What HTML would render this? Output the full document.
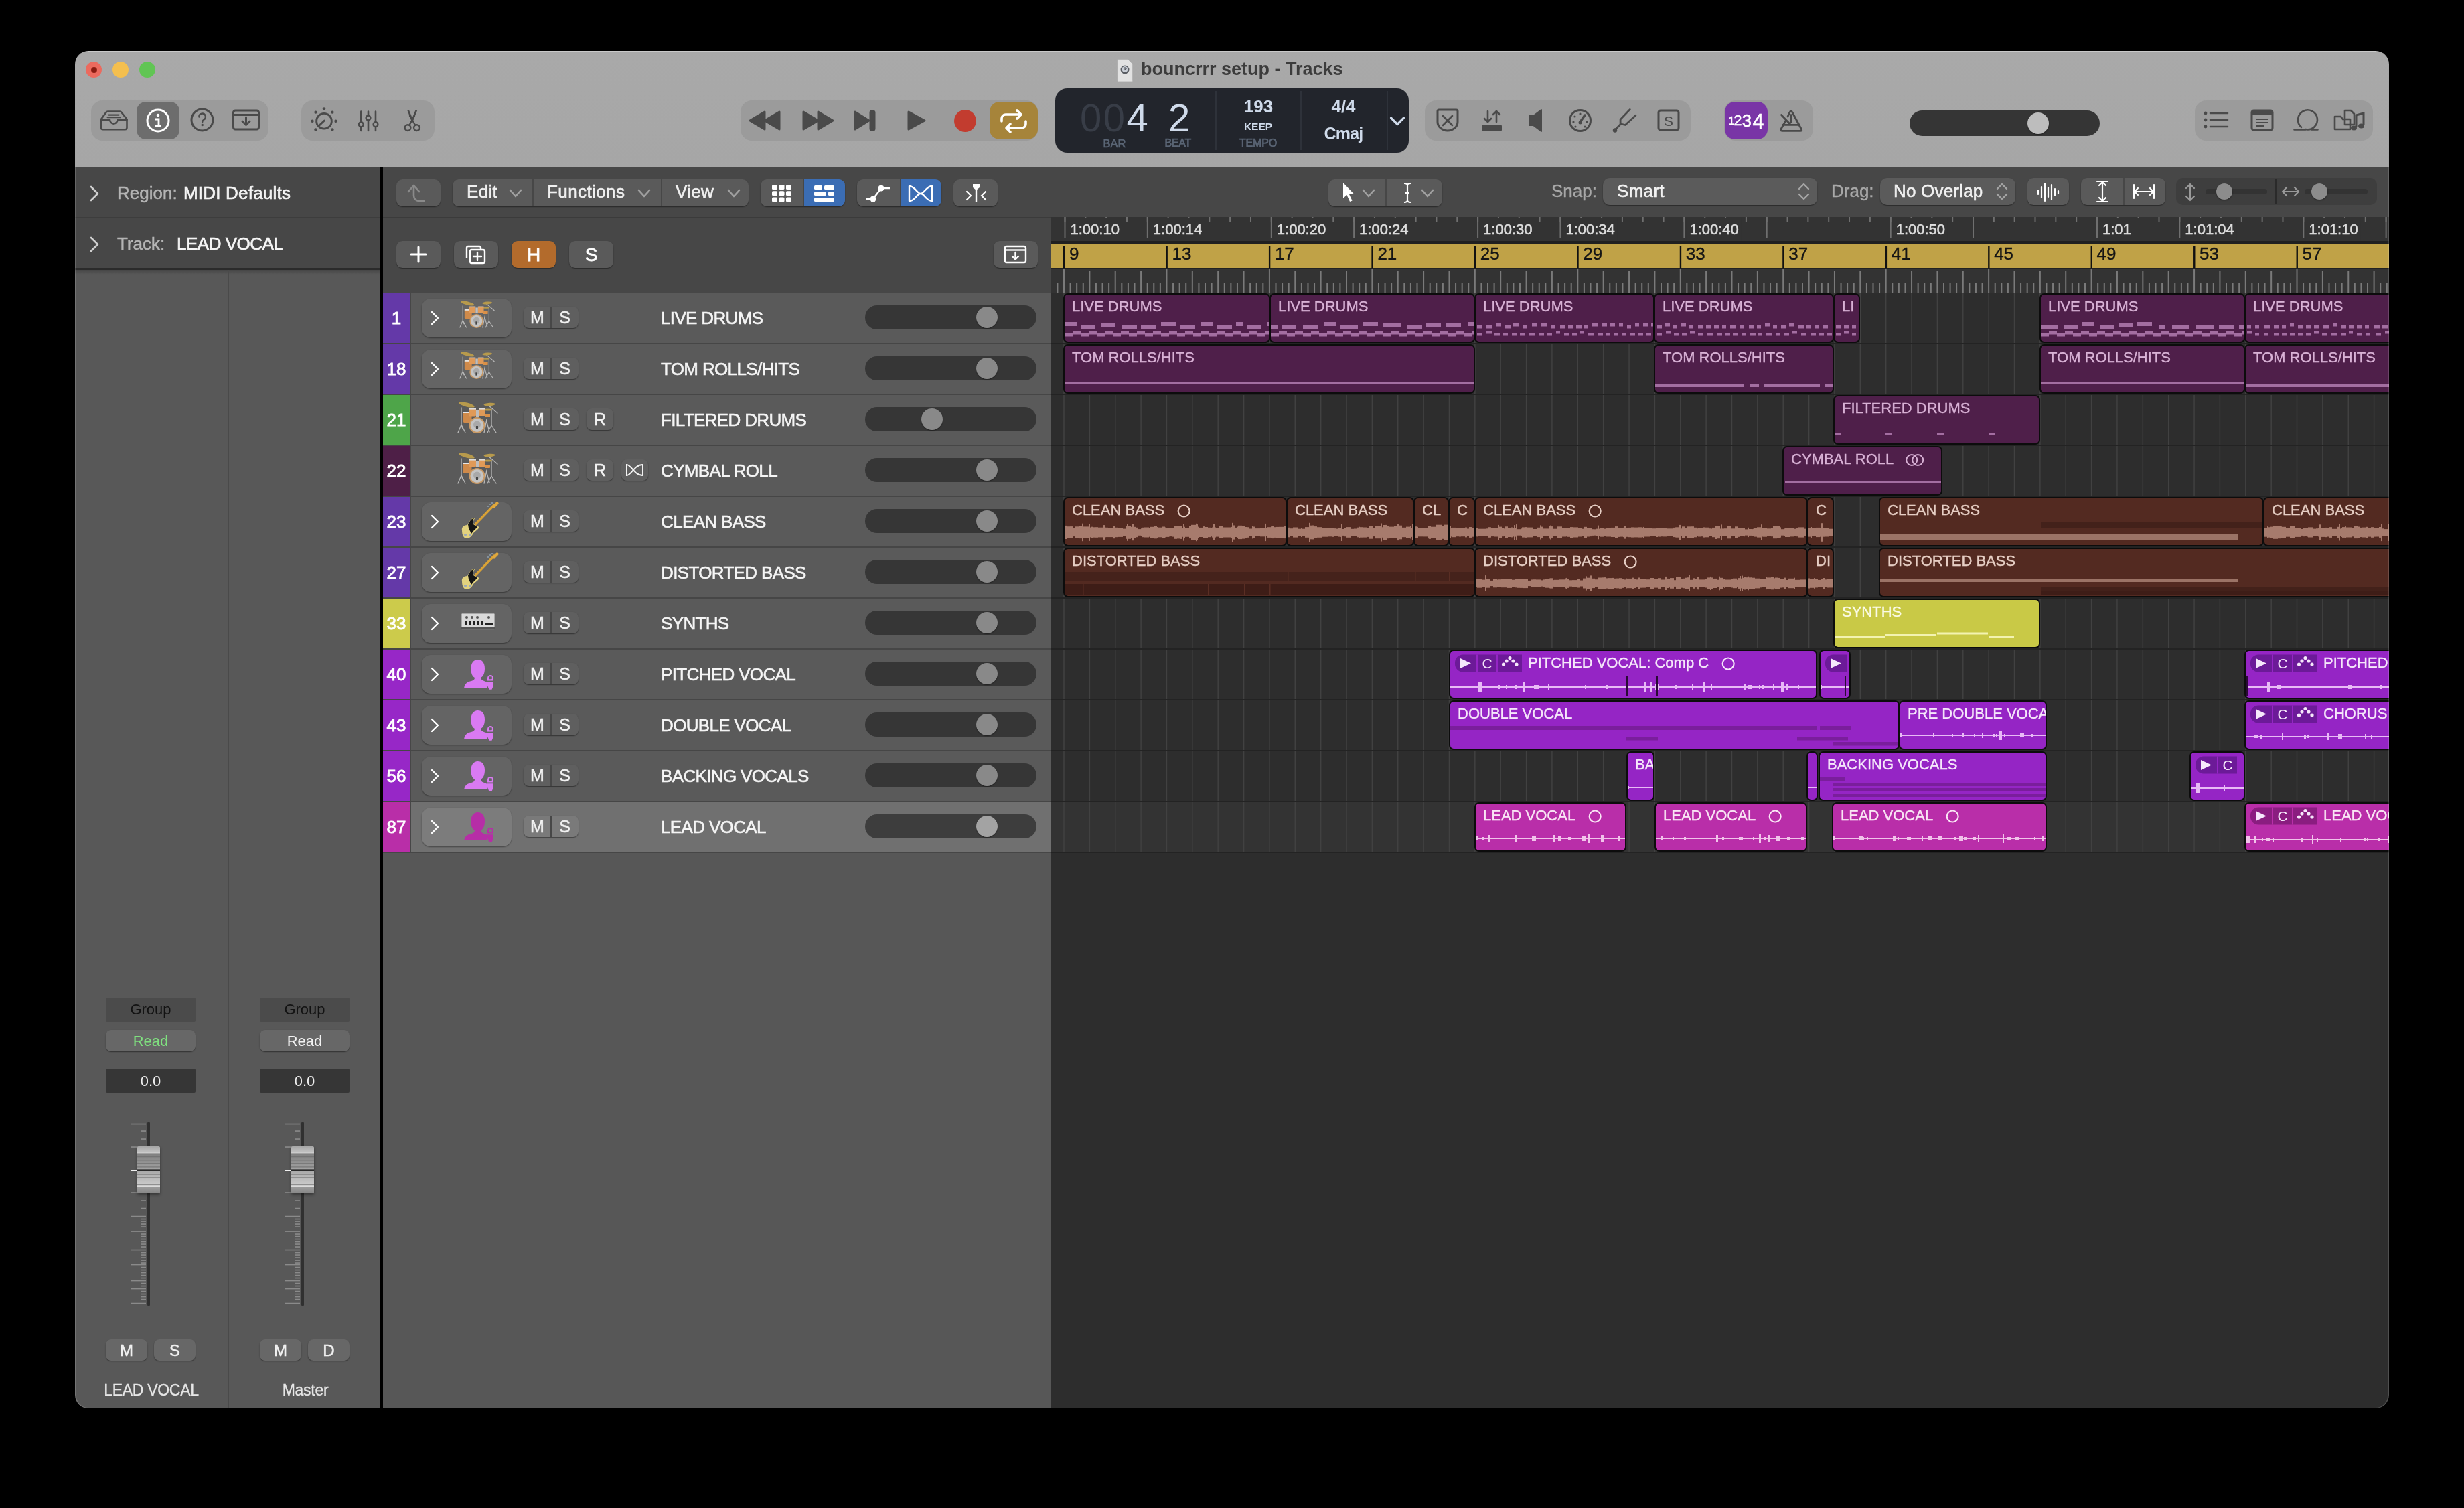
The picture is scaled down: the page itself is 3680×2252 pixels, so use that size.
<!DOCTYPE html><html><head><meta charset="utf-8"><style>
html,body{margin:0;padding:0;background:#000;width:3680px;height:2252px;overflow:hidden;font-family:"Liberation Sans", sans-serif;}
#win{will-change:transform;position:absolute;left:0;top:0;width:3680px;height:2252px;clip-path:inset(76px 112px 149px 112px round 20px);}
.btn{position:absolute;background:#5a5a5a;border-radius:9px;box-shadow:0 1px 1.5px rgba(0,0,0,0.45);}
</style></head><body><div id="win">
<div style="position:absolute;left:112px;top:76px;width:3456px;height:174px;background:linear-gradient(#a9a9a9,#a6a6a6);"></div>
<div style="position:absolute;left:112px;top:76px;width:3456px;height:1.5px;background:#c9c9c9;"></div>
<div style="position:absolute;left:112px;top:250px;width:456px;height:1853px;background:#585858;"></div>
<div style="position:absolute;left:112px;top:250px;width:456px;height:74px;background:#474747;"></div>
<div style="position:absolute;left:112px;top:324px;width:456px;height:2px;background:#3d3d3d;"></div>
<div style="position:absolute;left:112px;top:326px;width:456px;height:74px;background:#474747;"></div>
<div style="position:absolute;left:112px;top:400px;width:456px;height:2.5px;background:#2b2b2b;"></div>
<div style="position:absolute;left:112px;top:402.5px;width:456px;height:7px;background:linear-gradient(rgba(0,0,0,0.2),rgba(0,0,0,0));"></div>
<div style="position:absolute;left:340px;top:403px;width:2px;height:1700px;background:#4a4a4a;"></div>
<div style="position:absolute;left:568px;top:250px;width:4px;height:1853px;background:#000;"></div>
<div style="position:absolute;left:572px;top:250px;width:2996px;height:75px;background:#474747;"></div>
<div style="position:absolute;left:572px;top:324px;width:2996px;height:1px;background:#3b3b3b;"></div>
<div style="position:absolute;left:572px;top:325px;width:998px;height:113px;background:#474747;"></div>
<div style="position:absolute;left:572px;top:438px;width:998px;height:1665px;background:#575757;"></div>
<div style="position:absolute;left:1570px;top:438px;width:1998px;height:1665px;background:#2d2d2d;"></div>
<div style="position:absolute;left:128px;top:92px;width:24px;height:24px;border-radius:50%;background:#ec6a5e;"></div>
<div style="position:absolute;left:168px;top:92px;width:24px;height:24px;border-radius:50%;background:#f4bf4f;"></div>
<div style="position:absolute;left:208px;top:92px;width:24px;height:24px;border-radius:50%;background:#61c554;"></div>
<div style="position:absolute;left:135.5px;top:99.5px;width:9px;height:9px;border-radius:50%;background:#8a1c12;"></div>
<svg style="position:absolute;left:1666px;top:87px;" width="28" height="36" viewBox="0 0 28 36"><path d="M3 1.5h15.5l7 7v25a1.5 1.5 0 0 1 -1.5 1.5h-19.5a1.5 1.5 0 0 1 -1.5 -1.5z" fill="#e2e2e2" stroke="#b5b5b5" stroke-width="1"/><circle cx="14" cy="17" r="6.5" fill="#5a5d63"/><circle cx="14" cy="16.5" r="4.5" fill="#c9ced6"/><path d="M14 13 V17 L16.5 15" stroke="#5a5d63" stroke-width="1.2" fill="none"/></svg>
<div style="position:absolute;left:1704px;top:89.64px;font-size:27px;line-height:27px;color:#3c3c3c;font-weight:bold;white-space:nowrap;">bouncrrr setup - Tracks</div>
<div style="position:absolute;left:136px;top:150px;width:265px;height:60px;background:#9b9b9b;border-radius:17px;"></div>
<div style="position:absolute;left:450px;top:150px;width:199px;height:60px;background:#9b9b9b;border-radius:17px;"></div>
<div style="position:absolute;left:1106px;top:150px;width:444px;height:60px;background:#9b9b9b;border-radius:17px;"></div>
<div style="position:absolute;left:2128px;top:150px;width:397px;height:60px;background:#9b9b9b;border-radius:17px;"></div>
<div style="position:absolute;left:2575px;top:150px;width:133px;height:60px;background:#9b9b9b;border-radius:17px;"></div>
<div style="position:absolute;left:3278px;top:150px;width:266px;height:60px;background:#9b9b9b;border-radius:17px;"></div>
<div style="position:absolute;left:204px;top:152px;width:64px;height:56px;background:#6d6d6d;border-radius:14px;"></div>
<svg style="position:absolute;left:148px;top:163px;" width="44" height="34" viewBox="0 0 44 34"><g fill="none" stroke="#4a4a4a" stroke-width="2.6" stroke-linejoin="round" stroke-linecap="round"><path d="M3 15 L10.5 4.8 a3 3 0 0 1 2.4 -1.3 H31 a3 3 0 0 1 2.4 1.3 L41.5 15 V27.5 a2.8 2.8 0 0 1 -2.8 2.8 H5.8 a2.8 2.8 0 0 1 -2.8 -2.8 Z"/><path d="M3 15.8 H16 a5.8 5.8 0 0 0 11.6 0 H41.5"/><path d="M14.5 8.6 H29.5 M12.5 12.1 H32" stroke-width="2.2"/></g></svg>
<svg style="position:absolute;left:214px;top:158px;" width="44" height="44" viewBox="0 0 44 44"><circle cx="22" cy="22" r="16" fill="none" stroke="#fff" stroke-width="3"/><circle cx="22" cy="14" r="2.3" fill="#fff"/><path d="M18 20h5v10M18 30h9" fill="none" stroke="#fff" stroke-width="2.8"/></svg>
<svg style="position:absolute;left:280px;top:157px;" width="44" height="44" viewBox="0 0 44 44"><circle cx="22" cy="22" r="16" fill="none" stroke="#4a4a4a" stroke-width="3"/><path d="M17.3 17.5 a4.8 4.8 0 1 1 7.2 4 c-1.6 1 -2.3 1.8 -2.3 3.6" fill="none" stroke="#4a4a4a" stroke-width="2.4" stroke-linecap="round"/><circle cx="22.2" cy="29.5" r="1.8" fill="#4a4a4a"/></svg>
<svg style="position:absolute;left:346px;top:162px;" width="44" height="34" viewBox="0 0 44 34"><g fill="none" stroke="#4a4a4a" stroke-width="3" stroke-linejoin="round"><rect x="2.5" y="3" width="38" height="28" rx="3"/><path d="M3 9.5H40"/><path d="M21.5 13V24M16 19l5.5 5.5L27 19" stroke-linecap="round"/></g></svg>
<svg style="position:absolute;left:460px;top:156px;" width="48" height="48" viewBox="0 0 48 48"><g fill="#4a4a4a"><circle cx="24" cy="6.4" r="2.2"/><circle cx="11.5" cy="11.6" r="2.2"/><circle cx="36.4" cy="11.6" r="2.2"/><circle cx="6.5" cy="24.7" r="2.2"/><circle cx="41.5" cy="24.7" r="2.2"/><circle cx="11.5" cy="37.5" r="2.2"/><circle cx="36.4" cy="37.5" r="2.2"/></g><circle cx="24" cy="24.7" r="11.4" fill="none" stroke="#4a4a4a" stroke-width="2.8"/><path d="M24.5 24 L17 31" stroke="#4a4a4a" stroke-width="2.8" stroke-linecap="round"/></svg>
<svg style="position:absolute;left:530px;top:162px;" width="40" height="38" viewBox="0 0 40 38"><g stroke="#4a4a4a" stroke-width="2.6" fill="none" stroke-linecap="round"><path d="M9.3 4.6V33M20 4.6V33M31 4.6V33"/></g><g fill="#9b9b9b" stroke="#4a4a4a" stroke-width="2.4"><circle cx="9.3" cy="23.7" r="3.4"/><circle cx="20" cy="14" r="3.4"/><circle cx="31" cy="23.7" r="3.4"/></g></svg>
<svg style="position:absolute;left:600px;top:160px;" width="32" height="40" viewBox="0 0 32 40"><g fill="none" stroke="#4a4a4a" stroke-width="2.4" stroke-linecap="round"><circle cx="9" cy="30.6" r="4.4"/><circle cx="22.5" cy="30.6" r="4.4"/><path d="M11.5 26.5 L19 13 M20 26.5 L12 13"/></g><g fill="#4a4a4a"><path d="M8 4 L11 4.5 L17 19 L14.5 20.5 Z"/><path d="M23.5 4 L20.5 4.5 L14.5 19 L17 20.5 Z"/></g></svg>
<svg style="position:absolute;left:1116px;top:164px;" width="54" height="32" viewBox="0 0 54 32"><g fill="#4a4a4a" stroke="#4a4a4a" stroke-width="3" stroke-linejoin="round"><path d="M4 16 L26 3 V29 Z"/><path d="M26 16 L48 3 V29 Z"/></g></svg>
<svg style="position:absolute;left:1194px;top:164px;" width="54" height="32" viewBox="0 0 54 32"><g fill="#4a4a4a" stroke="#4a4a4a" stroke-width="3" stroke-linejoin="round"><path d="M50 16 L28 3 V29 Z"/><path d="M28 16 L6 3 V29 Z"/></g></svg>
<svg style="position:absolute;left:1272px;top:163px;" width="40" height="34" viewBox="0 0 40 34"><g fill="#4a4a4a" stroke="#4a4a4a" stroke-width="3" stroke-linejoin="round"><path d="M26 17 L5 4 V30 Z"/><rect x="28" y="3" width="6" height="28" rx="2"/></g></svg>
<svg style="position:absolute;left:1352px;top:163px;" width="34" height="34" viewBox="0 0 34 34"><path d="M5 4 L29 17 L5 30 Z" fill="#4a4a4a" stroke="#4a4a4a" stroke-width="3" stroke-linejoin="round"/></svg>
<div style="position:absolute;left:1424.5px;top:163.5px;width:33px;height:33px;border-radius:50%;background:#c23c2f;"></div>
<div style="position:absolute;left:1478px;top:152px;width:72px;height:56px;background:#a6843a;border-radius:15px;"></div>
<svg style="position:absolute;left:1490px;top:162px;" width="48" height="38" viewBox="0 0 48 38"><g fill="none" stroke="#fff" stroke-width="3.6" stroke-linecap="round" stroke-linejoin="round"><path d="M6 19 V15 a6 6 0 0 1 6 -6 H34"/><path d="M29 3 L35 9 L29 15"/><path d="M42 19 V23 a6 6 0 0 1 -6 6 H14"/><path d="M19 23 L13 29 L19 35"/></g></svg>
<div style="position:absolute;left:1576px;top:132px;width:528px;height:96px;background:#22252c;border-radius:18px;"></div>
<div style="position:absolute;left:1815px;top:136px;width:2px;height:88px;background:#2e323a;"></div>
<div style="position:absolute;left:1942px;top:136px;width:2px;height:88px;background:#2e323a;"></div>
<div style="position:absolute;left:2071px;top:136px;width:2px;height:88px;background:#2e323a;"></div>
<div style="position:absolute;left:1613px;top:146.9px;font-size:58px;line-height:58px;color:#cfdaea;font-weight:normal;white-space:nowrap;"><span style="color:#383d47;letter-spacing:2.5px">00</span>4</div>
<div style="position:absolute;left:1745px;top:146.9px;font-size:58px;line-height:58px;color:#cfdaea;font-weight:normal;white-space:nowrap;">2</div>
<div style="position:absolute;left:1647.5px;top:206.03px;font-size:16.5px;line-height:16.5px;color:#5b6676;font-weight:normal;white-space:nowrap;letter-spacing:0px;-webkit-text-stroke:0.7px #5b6676;">BAR</div>
<div style="position:absolute;left:1739.5px;top:206.46px;font-size:16px;line-height:16px;color:#5b6676;font-weight:normal;white-space:nowrap;letter-spacing:-0.3px;-webkit-text-stroke:0.7px #5b6676;">BEAT</div>
<div style="position:absolute;left:1579.5px;width:600px;text-align:center;top:145.99px;font-size:26px;line-height:26px;color:#cfdaea;font-weight:bold;white-space:nowrap;">193</div>
<div style="position:absolute;left:1579px;width:600px;text-align:center;top:180.88px;font-size:15.5px;line-height:15.5px;color:#cfdaea;font-weight:bold;white-space:nowrap;">KEEP</div>
<div style="position:absolute;left:1579px;width:600px;text-align:center;top:206.46px;font-size:16px;line-height:16px;color:#5b6676;font-weight:normal;white-space:nowrap;letter-spacing:-0.2px;-webkit-text-stroke:0.7px #5b6676;">TEMPO</div>
<div style="position:absolute;left:1706.5px;width:600px;text-align:center;top:145.99px;font-size:26px;line-height:26px;color:#cfdaea;font-weight:bold;white-space:nowrap;">4/4</div>
<div style="position:absolute;left:1706.5px;width:600px;text-align:center;top:186.84px;font-size:25px;line-height:25px;color:#cfdaea;font-weight:bold;white-space:nowrap;letter-spacing:-0.8px;">Cmaj</div>
<svg style="position:absolute;left:2074px;top:172px;" width="26" height="20" viewBox="0 0 26 20"><path d="M3.5 4 L13 13.5 L22.5 4" fill="none" stroke="#cfdaea" stroke-width="3.2" stroke-linecap="round" stroke-linejoin="round"/></svg>
<svg style="position:absolute;left:2144px;top:162px;" width="36" height="36" viewBox="0 0 36 36"><path d="M3 4 a2 2 0 0 1 2 -2 H31 a2 2 0 0 1 2 2 V20 a15 13 0 0 1 -30 0 Z" fill="none" stroke="#4a4a4a" stroke-width="3"/><path d="M11 11 L25 25 M25 11 L11 25" stroke="#4a4a4a" stroke-width="2.6" stroke-linecap="round"/></svg>
<svg style="position:absolute;left:2208px;top:162px;" width="40" height="36" viewBox="0 0 40 36"><rect x="5" y="24" width="30" height="10" rx="2.5" fill="#4a4a4a"/><g fill="none" stroke="#4a4a4a" stroke-width="2.6" stroke-linecap="round" stroke-linejoin="round"><path d="M14 4V20M9 15l5 5 5-5"/><path d="M27 20V4M22 9l5-5 5 5"/></g></svg>
<svg style="position:absolute;left:2280px;top:162px;" width="28" height="36" viewBox="0 0 28 36"><path d="M4 11 H10 L22 2 V34 L10 25 H4 Z" fill="#4a4a4a" stroke="#4a4a4a" stroke-width="2" stroke-linejoin="round"/></svg>
<svg style="position:absolute;left:2342px;top:162px;" width="36" height="36" viewBox="0 0 36 36"><circle cx="18" cy="18" r="15.5" fill="none" stroke="#4a4a4a" stroke-width="3"/><path d="M18 20 L25 10" stroke="#4a4a4a" stroke-width="3.5" stroke-linecap="round"/><g fill="#4a4a4a"><circle cx="18" cy="8" r="1.6"/><circle cx="10" cy="12" r="1.6"/><circle cx="8" cy="20" r="1.6"/><circle cx="28" cy="20" r="1.6"/><circle cx="11" cy="27" r="1.6"/><circle cx="25" cy="27" r="1.6"/><circle cx="18" cy="21" r="2.5"/></g></svg>
<svg style="position:absolute;left:2406px;top:160px;" width="40" height="40" viewBox="0 0 40 40"><path d="M28.3 3.4 L14.1 18.4 V24.9 L21.4 26.5 L36.9 12.3 M14.1 25.5 L6 34" fill="none" stroke="#4a4a4a" stroke-width="2.8" stroke-linecap="round" stroke-linejoin="round"/><circle cx="6" cy="34.5" r="3.2" fill="#4a4a4a"/></svg>
<svg style="position:absolute;left:2474px;top:162px;" width="36" height="36" viewBox="0 0 36 36"><rect x="3" y="3" width="30" height="29" rx="3" fill="none" stroke="#4a4a4a" stroke-width="3"/><text x="18" y="26" font-size="21" text-anchor="middle" fill="#4a4a4a" font-family="Liberation Sans">S</text></svg>
<div style="position:absolute;left:2576px;top:152px;width:64px;height:56px;background:#7935a6;border-radius:15px;"></div>
<div style="position:absolute;left:2286px;width:600px;text-align:center;top:172.76px;font-size:16px;line-height:16px;color:#fff;font-weight:normal;white-space:nowrap;-webkit-text-stroke:0.5px #fff;">1</div>
<div style="position:absolute;left:2295.6px;width:600px;text-align:center;top:169.6px;font-size:21.5px;line-height:21.5px;color:#fff;font-weight:normal;white-space:nowrap;-webkit-text-stroke:0.5px #fff;">2</div>
<div style="position:absolute;left:2308.8px;width:600px;text-align:center;top:167.91px;font-size:25.5px;line-height:25.5px;color:#fff;font-weight:normal;white-space:nowrap;-webkit-text-stroke:0.5px #fff;">3</div>
<div style="position:absolute;left:2326px;width:600px;text-align:center;top:166.08px;font-size:30.5px;line-height:30.5px;color:#fff;font-weight:normal;white-space:nowrap;-webkit-text-stroke:0.5px #fff;">4</div>
<svg style="position:absolute;left:2655px;top:160px;" width="40" height="40" viewBox="0 0 40 40"><g fill="none" stroke="#4a4a4a" stroke-width="2.8" stroke-linejoin="round" stroke-linecap="round"><path d="M15.05 14 L17.5 8.5 Q19.9 3.5 22.3 8.5 L35.5 33 Q36.5 35.3 34 35.3 H6.5 Q3.8 35.3 4.8 33 L12.1 20"/><path d="M7.5 26.3 H32.5"/><path d="M20 11.6 V22.6"/><path d="M5.5 11.6 L18.7 25.5"/></g></svg>
<div style="position:absolute;left:2852px;top:165px;width:284px;height:38px;background:#353535;border-radius:19px;"></div>
<div style="position:absolute;left:3028px;top:168px;width:32px;height:32px;border-radius:50%;background:#bdbdbd;box-shadow:0 1px 2px rgba(0,0,0,.4);"></div>
<svg style="position:absolute;left:3290px;top:162px;" width="42" height="36" viewBox="0 0 42 36"><g fill="#4a4a4a"><circle cx="4" cy="7" r="2.4"/><circle cx="4" cy="17" r="2.4"/><circle cx="4" cy="27" r="2.4"/></g><g stroke="#4a4a4a" stroke-width="2.6" stroke-linecap="round"><path d="M11 7H37M11 17H37M11 27H37"/></g></svg>
<svg style="position:absolute;left:3360px;top:162px;" width="38" height="36" viewBox="0 0 38 36"><rect x="3" y="3" width="31" height="29" rx="3" fill="none" stroke="#4a4a4a" stroke-width="3"/><path d="M3 7 H34" stroke="#4a4a4a" stroke-width="6"/><g stroke="#4a4a4a" stroke-width="2.2"><path d="M9 16H28M9 21H28M9 26H22"/></g></svg>
<svg style="position:absolute;left:3424px;top:160px;" width="42" height="40" viewBox="0 0 42 40"><path d="M13 29.8 A14.5 14.5 0 1 1 19.4 33 M19.4 33.5 H2.5 M28 33.5 H37.5" fill="none" stroke="#4a4a4a" stroke-width="2.6" stroke-linecap="round"/></svg>
<svg style="position:absolute;left:3484px;top:160px;" width="50" height="44" viewBox="0 0 50 44"><g fill="none" stroke="#4a4a4a" stroke-width="2.6" stroke-linejoin="round"><path d="M3 14 H12 L15 18 H26 V33 H3 Z"/><path d="M18 5 H27 L32 10 V26 H18 Z"/></g><path d="M35 12 V30 M35 12 L46 9 V27" stroke="#4a4a4a" stroke-width="3" fill="none"/><ellipse cx="31.5" cy="31" rx="4.5" ry="3.5" fill="#4a4a4a"/><ellipse cx="42.5" cy="28" rx="4.5" ry="3.5" fill="#4a4a4a"/></svg>
<div class="btn" style="left:592px;top:268px;width:66px;height:40px;background:#5a5a5a;border-radius:9px;"></div>
<svg style="position:absolute;left:606px;top:272px;" width="40" height="34" viewBox="0 0 40 34"><path d="M12 6 V20 a8 8 0 0 0 8 8 H27" fill="none" stroke="#8a8a8a" stroke-width="2.6" stroke-linecap="round"/><path d="M4 14 L12 5 L20 14" fill="none" stroke="#8a8a8a" stroke-width="2.6" stroke-linecap="round" stroke-linejoin="round"/></svg>
<div class="btn" style="left:676px;top:268px;width:442px;height:40px;background:#5a5a5a;border-radius:9px;"></div>
<div style="position:absolute;left:795px;top:268px;width:1.5px;height:40px;background:#474747;"></div>
<div style="position:absolute;left:986.5px;top:268px;width:1.5px;height:40px;background:#474747;"></div>
<div style="position:absolute;left:697px;top:273.49px;font-size:26px;line-height:26px;color:#f0f0f0;font-weight:normal;white-space:nowrap;letter-spacing:0.3px;-webkit-text-stroke:0.6px #f0f0f0;">Edit</div>
<svg style="position:absolute;left:760.0px;top:281.5px;" width="20" height="13" viewBox="0 0 20 13"><path d="M2 2 L10.0 11 L18 2" fill="none" stroke="#a0a0a0" stroke-width="2.6" stroke-linecap="round" stroke-linejoin="round"/></svg>
<div style="position:absolute;left:817px;top:273.49px;font-size:26px;line-height:26px;color:#f0f0f0;font-weight:normal;white-space:nowrap;letter-spacing:0.4px;-webkit-text-stroke:0.6px #f0f0f0;">Functions</div>
<svg style="position:absolute;left:952.0px;top:281.5px;" width="20" height="13" viewBox="0 0 20 13"><path d="M2 2 L10.0 11 L18 2" fill="none" stroke="#a0a0a0" stroke-width="2.6" stroke-linecap="round" stroke-linejoin="round"/></svg>
<div style="position:absolute;left:1009px;top:273.49px;font-size:26px;line-height:26px;color:#f0f0f0;font-weight:normal;white-space:nowrap;letter-spacing:0.3px;-webkit-text-stroke:0.6px #f0f0f0;">View</div>
<svg style="position:absolute;left:1086.0px;top:281.5px;" width="20" height="13" viewBox="0 0 20 13"><path d="M2 2 L10.0 11 L18 2" fill="none" stroke="#a0a0a0" stroke-width="2.6" stroke-linecap="round" stroke-linejoin="round"/></svg>
<div class="btn" style="left:1136px;top:268px;width:126px;height:40px;background:#5a5a5a;border-radius:9px;"></div>
<div style="position:absolute;left:1199.5px;top:268px;width:62.5px;height:40px;background:#3b6db4;border-radius:0 9px 9px 0;"></div>
<div style="position:absolute;left:1199px;top:268px;width:1.5px;height:40px;background:#474747;"></div>
<svg style="position:absolute;left:1150px;top:274px;" width="36" height="30" viewBox="0 0 36 30"><rect x="3.0" y="2.0" width="8" height="7" rx="1.6" fill="#fff"/><rect x="3.0" y="11.2" width="8" height="7" rx="1.6" fill="#fff"/><rect x="3.0" y="20.4" width="8" height="7" rx="1.6" fill="#fff"/><rect x="13.5" y="2.0" width="8" height="7" rx="1.6" fill="#fff"/><rect x="13.5" y="11.2" width="8" height="7" rx="1.6" fill="#fff"/><rect x="13.5" y="20.4" width="8" height="7" rx="1.6" fill="#fff"/><rect x="24.0" y="2.0" width="8" height="7" rx="1.6" fill="#fff"/><rect x="24.0" y="11.2" width="8" height="7" rx="1.6" fill="#fff"/><rect x="24.0" y="20.4" width="8" height="7" rx="1.6" fill="#fff"/></svg>
<svg style="position:absolute;left:1212px;top:274px;" width="38" height="30" viewBox="0 0 38 30"><g fill="#fff"><rect x="4" y="3" width="12" height="6" rx="1.5"/><rect x="19" y="3" width="15" height="6" rx="1.5"/><rect x="4" y="12" width="18" height="6" rx="1.5"/><rect x="25" y="12" width="9" height="6" rx="1.5"/><rect x="4" y="21" width="30" height="6" rx="1.5"/></g></svg>
<div class="btn" style="left:1280px;top:268px;width:126px;height:40px;background:#5a5a5a;border-radius:9px;"></div>
<div style="position:absolute;left:1344px;top:268px;width:62px;height:40px;background:#3b6db4;border-radius:0 9px 9px 0;"></div>
<div style="position:absolute;left:1343.5px;top:268px;width:1.5px;height:40px;background:#474747;"></div>
<svg style="position:absolute;left:1288px;top:272px;" width="50" height="34" viewBox="0 0 50 34"><g fill="#fff"><circle cx="28" cy="9" r="4.5"/><circle cx="16" cy="25" r="4.5"/></g><path d="M6 25H16L28 9H41" fill="none" stroke="#fff" stroke-width="2.4"/></svg>
<svg style="position:absolute;left:1354px;top:274px;" width="42" height="30" viewBox="0 0 42 30"><path d="M4 4 C13 4 15 15 21 15 C27 15 29 26 38 26 V4 C29 4 27 15 21 15 C15 15 13 26 4 26 Z" fill="none" stroke="#fff" stroke-width="2.4" stroke-linejoin="round"/></svg>
<div class="btn" style="left:1424px;top:268px;width:66px;height:40px;background:#5a5a5a;border-radius:9px;"></div>
<svg style="position:absolute;left:1438px;top:272px;" width="40" height="34" viewBox="0 0 40 34"><path d="M20 8 V30" stroke="#fff" stroke-width="2.4"/><path d="M15 3 H25 V8 L20 12 L15 8Z" fill="#fff"/><path d="M6 14 L12 20 L6 26 M34 14 L28 20 L34 26" fill="none" stroke="#fff" stroke-width="2.2" stroke-linecap="round"/></svg>
<div class="btn" style="left:1984px;top:268px;width:170px;height:40px;background:#5a5a5a;border-radius:9px;"></div>
<div style="position:absolute;left:2069px;top:268px;width:1.5px;height:40px;background:#474747;"></div>
<svg style="position:absolute;left:2002px;top:270px;" width="24" height="36" viewBox="0 0 24 36"><path d="M4 3 L4 26 L9.5 21 L14 31 L17.5 29.5 L13 20 L20 19.5 Z" fill="#fff"/></svg>
<svg style="position:absolute;left:2034.0px;top:281.5px;" width="20" height="13" viewBox="0 0 20 13"><path d="M2 2 L10.0 11 L18 2" fill="none" stroke="#a0a0a0" stroke-width="2.6" stroke-linecap="round" stroke-linejoin="round"/></svg>
<svg style="position:absolute;left:2090px;top:270px;" width="24" height="36" viewBox="0 0 24 36"><path d="M7 4 C10 4 12 5 12 7 C12 5 14 4 17 4 M12 7 V29 M7 32 C10 32 12 31 12 29 C12 31 14 32 17 32 M9 18H15" fill="none" stroke="#fff" stroke-width="2.2"/></svg>
<svg style="position:absolute;left:2122.0px;top:281.5px;" width="20" height="13" viewBox="0 0 20 13"><path d="M2 2 L10.0 11 L18 2" fill="none" stroke="#a0a0a0" stroke-width="2.6" stroke-linecap="round" stroke-linejoin="round"/></svg>
<div style="position:absolute;left:2317px;top:271.99px;font-size:26px;line-height:26px;color:#a8a8a8;font-weight:normal;white-space:nowrap;-webkit-text-stroke:0.4px #a8a8a8;">Snap:</div>
<div class="btn" style="left:2394px;top:266px;width:320px;height:40px;background:#5b5b5b;border-radius:10px;"></div>
<div style="position:absolute;left:2415px;top:271.99px;font-size:26px;line-height:26px;color:#f2f2f2;font-weight:normal;white-space:nowrap;letter-spacing:0.3px;-webkit-text-stroke:0.6px #f2f2f2;">Smart</div>
<svg style="position:absolute;left:2684px;top:272px;" width="20" height="28" viewBox="0 0 20 28"><path d="M3 10 L10 3 L17 10 M3 18 L10 25 L17 18" fill="none" stroke="#a5a5a5" stroke-width="2.4" stroke-linecap="round" stroke-linejoin="round"/></svg>
<div style="position:absolute;left:2735px;top:271.99px;font-size:26px;line-height:26px;color:#a8a8a8;font-weight:normal;white-space:nowrap;-webkit-text-stroke:0.4px #a8a8a8;">Drag:</div>
<div class="btn" style="left:2808px;top:266px;width:202px;height:40px;background:#5b5b5b;border-radius:10px;"></div>
<div style="position:absolute;left:2828px;top:271.99px;font-size:26px;line-height:26px;color:#f2f2f2;font-weight:normal;white-space:nowrap;letter-spacing:0.2px;-webkit-text-stroke:0.6px #f2f2f2;">No Overlap</div>
<svg style="position:absolute;left:2980px;top:272px;" width="20" height="28" viewBox="0 0 20 28"><path d="M3 10 L10 3 L17 10 M3 18 L10 25 L17 18" fill="none" stroke="#a5a5a5" stroke-width="2.4" stroke-linecap="round" stroke-linejoin="round"/></svg>
<div class="btn" style="left:3028px;top:266px;width:62px;height:40px;background:#5a5a5a;border-radius:9px;"></div>
<svg style="position:absolute;left:3040px;top:270px;" width="38" height="34" viewBox="0 0 38 34"><g stroke="#fff" stroke-width="2.2" stroke-linecap="round"><path d="M4 14V20M9 9V25M14 4V30M19 10V24M24 6V28M29 12V22M34 15V19"/></g></svg>
<div class="btn" style="left:3108px;top:266px;width:126px;height:40px;background:#5a5a5a;border-radius:9px;"></div>
<div style="position:absolute;left:3171px;top:266px;width:1.5px;height:40px;background:#474747;"></div>
<svg style="position:absolute;left:3124px;top:268px;" width="32" height="36" viewBox="0 0 32 36"><g stroke="#fff" stroke-width="2.2" fill="none" stroke-linecap="round" stroke-linejoin="round"><path d="M8 3H24M8 33H24M16 4V32M11 9L16 4L21 9M11 27L16 32L21 27"/></g></svg>
<svg style="position:absolute;left:3184px;top:270px;" width="36" height="32" viewBox="0 0 36 32"><g stroke="#fff" stroke-width="2.2" fill="none" stroke-linecap="round" stroke-linejoin="round"><path d="M3 6V26M33 6V26M4 16H32M9 11L4 16L9 21M27 11L32 16L27 21"/></g></svg>
<div style="position:absolute;left:3250px;top:266px;width:300px;height:40px;background:#3e3e3e;border-radius:10px;"></div>
<div style="position:absolute;left:3398px;top:268px;width:2px;height:36px;background:#2a2a2a;"></div>
<svg style="position:absolute;left:3259px;top:272px;" width="24" height="30" viewBox="0 0 24 30"><g stroke="#9a9a9a" stroke-width="2.2" fill="none" stroke-linecap="round" stroke-linejoin="round"><path d="M12 3V27M6 9L12 3L18 9M6 21L12 27L18 21"/></g></svg>
<div style="position:absolute;left:3294px;top:282px;width:92px;height:8px;background:#333;border-radius:4px;"></div>
<div style="position:absolute;left:3309.5px;top:274px;width:24px;height:24px;border-radius:50%;background:#8c8c8c;box-shadow:0 1px 2px rgba(0,0,0,.5);"></div>
<svg style="position:absolute;left:3405px;top:272px;" width="32" height="28" viewBox="0 0 32 28"><g stroke="#9a9a9a" stroke-width="2.2" fill="none" stroke-linecap="round" stroke-linejoin="round"><path d="M4 14H28M10 8L4 14L10 20M22 8L28 14L22 20"/></g></svg>
<div style="position:absolute;left:3442px;top:282px;width:94px;height:8px;background:#333;border-radius:4px;"></div>
<div style="position:absolute;left:3451.5px;top:274px;width:24px;height:24px;border-radius:50%;background:#8c8c8c;box-shadow:0 1px 2px rgba(0,0,0,.5);"></div>
<div class="btn" style="left:592px;top:360px;width:66px;height:40px;background:#5a5a5a;border-radius:9px;"></div>
<svg style="position:absolute;left:605px;top:366px;" width="40" height="28" viewBox="0 0 40 28"><path d="M20 3V25M9 14H31" stroke="#fff" stroke-width="3" stroke-linecap="round"/></svg>
<div class="btn" style="left:678px;top:360px;width:66px;height:40px;background:#5a5a5a;border-radius:9px;"></div>
<svg style="position:absolute;left:690px;top:364px;" width="42" height="32" viewBox="0 0 42 32"><g fill="none" stroke="#fff" stroke-width="2.4" stroke-linejoin="round"><path d="M7 21 V6 a2 2 0 0 1 2 -2 H26 a2 2 0 0 1 2 2 V8"/><rect x="12" y="9" width="22" height="20" rx="2.5"/><path d="M23 13V25M17 19H29" stroke-linecap="round"/></g></svg>
<div class="btn" style="left:764px;top:360px;width:66px;height:40px;background:#b36b2c;border-radius:9px;"></div>
<div style="position:absolute;left:497px;width:600px;text-align:center;top:367.3px;font-size:28px;line-height:28px;color:#fff;font-weight:normal;white-space:nowrap;-webkit-text-stroke:0.8px #fff;">H</div>
<div class="btn" style="left:850px;top:360px;width:66px;height:40px;background:#5a5a5a;border-radius:9px;"></div>
<div style="position:absolute;left:583px;width:600px;text-align:center;top:367.3px;font-size:28px;line-height:28px;color:#fff;font-weight:normal;white-space:nowrap;-webkit-text-stroke:0.8px #fff;">S</div>
<div class="btn" style="left:1484px;top:360px;width:66px;height:40px;background:#5a5a5a;border-radius:9px;"></div>
<svg style="position:absolute;left:1497px;top:364px;" width="40" height="32" viewBox="0 0 40 32"><g fill="none" stroke="#fff" stroke-width="2.4" stroke-linejoin="round"><rect x="4" y="4" width="31" height="24" rx="2.5"/><path d="M4 9.5H35"/><path d="M19.5 13V23M15 19l4.5 4.5L24 19" stroke-linecap="round"/></g></svg>
<div style="position:absolute;left:1570px;top:324px;width:1998px;height:36px;background:#333333;"></div>
<div style="position:absolute;left:1570px;top:360px;width:1998px;height:4px;background:#202020;"></div>
<div style="position:absolute;left:1570px;top:364px;width:1998px;height:36px;background:#c0a247;"></div>
<div style="position:absolute;left:1570px;top:400px;width:1998px;height:1px;background:#222;"></div>
<div style="position:absolute;left:1570px;top:401px;width:1998px;height:37px;background:#333333;"></div>
<svg style="position:absolute;left:1570px;top:324px;" width="1998" height="36" viewBox="0 0 1998 36"><rect x="19.50" y="0" width="2" height="8" fill="#6f6f6f"/><rect x="50.33" y="0" width="2" height="8" fill="#6f6f6f"/><rect x="81.16" y="0" width="2" height="8" fill="#6f6f6f"/><rect x="111.99" y="0" width="2" height="8" fill="#6f6f6f"/><rect x="142.82" y="0" width="2" height="8" fill="#6f6f6f"/><rect x="173.65" y="0" width="2" height="8" fill="#6f6f6f"/><rect x="204.48" y="0" width="2" height="8" fill="#6f6f6f"/><rect x="235.31" y="0" width="2" height="8" fill="#6f6f6f"/><rect x="266.14" y="0" width="2" height="8" fill="#6f6f6f"/><rect x="296.97" y="0" width="2" height="8" fill="#6f6f6f"/><rect x="327.80" y="0" width="2" height="8" fill="#6f6f6f"/><rect x="358.63" y="0" width="2" height="8" fill="#6f6f6f"/><rect x="389.46" y="0" width="2" height="8" fill="#6f6f6f"/><rect x="420.29" y="0" width="2" height="8" fill="#6f6f6f"/><rect x="451.12" y="0" width="2" height="8" fill="#6f6f6f"/><rect x="481.95" y="0" width="2" height="8" fill="#6f6f6f"/><rect x="512.78" y="0" width="2" height="8" fill="#6f6f6f"/><rect x="543.61" y="0" width="2" height="8" fill="#6f6f6f"/><rect x="574.44" y="0" width="2" height="8" fill="#6f6f6f"/><rect x="605.27" y="0" width="2" height="8" fill="#6f6f6f"/><rect x="636.10" y="0" width="2" height="8" fill="#6f6f6f"/><rect x="666.93" y="0" width="2" height="8" fill="#6f6f6f"/><rect x="697.76" y="0" width="2" height="8" fill="#6f6f6f"/><rect x="728.59" y="0" width="2" height="8" fill="#6f6f6f"/><rect x="759.42" y="0" width="2" height="8" fill="#6f6f6f"/><rect x="790.25" y="0" width="2" height="8" fill="#6f6f6f"/><rect x="821.08" y="0" width="2" height="8" fill="#6f6f6f"/><rect x="851.91" y="0" width="2" height="8" fill="#6f6f6f"/><rect x="882.74" y="0" width="2" height="8" fill="#6f6f6f"/><rect x="913.57" y="0" width="2" height="8" fill="#6f6f6f"/><rect x="944.40" y="0" width="2" height="8" fill="#6f6f6f"/><rect x="975.23" y="0" width="2" height="8" fill="#6f6f6f"/><rect x="1006.06" y="0" width="2" height="8" fill="#6f6f6f"/><rect x="1036.89" y="0" width="2" height="8" fill="#6f6f6f"/><rect x="1067.72" y="0" width="2" height="8" fill="#6f6f6f"/><rect x="1098.55" y="0" width="2" height="8" fill="#6f6f6f"/><rect x="1129.38" y="0" width="2" height="8" fill="#6f6f6f"/><rect x="1160.21" y="0" width="2" height="8" fill="#6f6f6f"/><rect x="1191.04" y="0" width="2" height="8" fill="#6f6f6f"/><rect x="1221.87" y="0" width="2" height="8" fill="#6f6f6f"/><rect x="1252.70" y="0" width="2" height="8" fill="#6f6f6f"/><rect x="1283.53" y="0" width="2" height="8" fill="#6f6f6f"/><rect x="1314.36" y="0" width="2" height="8" fill="#6f6f6f"/><rect x="1345.19" y="0" width="2" height="8" fill="#6f6f6f"/><rect x="1376.02" y="0" width="2" height="8" fill="#6f6f6f"/><rect x="1406.85" y="0" width="2" height="8" fill="#6f6f6f"/><rect x="1437.68" y="0" width="2" height="8" fill="#6f6f6f"/><rect x="1468.51" y="0" width="2" height="8" fill="#6f6f6f"/><rect x="1499.34" y="0" width="2" height="8" fill="#6f6f6f"/><rect x="1530.17" y="0" width="2" height="8" fill="#6f6f6f"/><rect x="1561.00" y="0" width="2" height="8" fill="#6f6f6f"/><rect x="1591.83" y="0" width="2" height="8" fill="#6f6f6f"/><rect x="1622.66" y="0" width="2" height="8" fill="#6f6f6f"/><rect x="1653.49" y="0" width="2" height="8" fill="#6f6f6f"/><rect x="1684.32" y="0" width="2" height="8" fill="#6f6f6f"/><rect x="1715.15" y="0" width="2" height="8" fill="#6f6f6f"/><rect x="1745.98" y="0" width="2" height="8" fill="#6f6f6f"/><rect x="1776.81" y="0" width="2" height="8" fill="#6f6f6f"/><rect x="1807.64" y="0" width="2" height="8" fill="#6f6f6f"/><rect x="1838.47" y="0" width="2" height="8" fill="#6f6f6f"/><rect x="1869.30" y="0" width="2" height="8" fill="#6f6f6f"/><rect x="1900.13" y="0" width="2" height="8" fill="#6f6f6f"/><rect x="1930.96" y="0" width="2" height="8" fill="#6f6f6f"/><rect x="1961.79" y="0" width="2" height="8" fill="#6f6f6f"/><rect x="1992.62" y="0" width="2" height="8" fill="#6f6f6f"/><rect x="23.50" y="2" width="82" height="34" fill="#333333"/><rect x="146.82" y="2" width="82" height="34" fill="#333333"/><rect x="331.80" y="2" width="82" height="34" fill="#333333"/><rect x="455.12" y="2" width="82" height="34" fill="#333333"/><rect x="640.10" y="2" width="82" height="34" fill="#333333"/><rect x="763.42" y="2" width="82" height="34" fill="#333333"/><rect x="948.40" y="2" width="82" height="34" fill="#333333"/><rect x="1256.70" y="2" width="82" height="34" fill="#333333"/><rect x="1565.00" y="2" width="82" height="34" fill="#333333"/><rect x="1688.32" y="2" width="82" height="34" fill="#333333"/><rect x="1873.30" y="2" width="82" height="34" fill="#333333"/><rect x="19.50" y="0" width="2" height="32" fill="#6f6f6f"/><rect x="142.82" y="0" width="2" height="32" fill="#6f6f6f"/><rect x="327.80" y="0" width="2" height="32" fill="#6f6f6f"/><rect x="451.12" y="0" width="2" height="32" fill="#6f6f6f"/><rect x="636.10" y="0" width="2" height="32" fill="#6f6f6f"/><rect x="759.42" y="0" width="2" height="32" fill="#6f6f6f"/><rect x="944.40" y="0" width="2" height="32" fill="#6f6f6f"/><rect x="1067.72" y="0" width="2" height="32" fill="#6f6f6f"/><rect x="1252.70" y="0" width="2" height="32" fill="#6f6f6f"/><rect x="1376.02" y="0" width="2" height="32" fill="#6f6f6f"/><rect x="1561.00" y="0" width="2" height="32" fill="#6f6f6f"/><rect x="1684.32" y="0" width="2" height="32" fill="#6f6f6f"/><rect x="1869.30" y="0" width="2" height="32" fill="#6f6f6f"/><rect x="1992.62" y="0" width="2" height="32" fill="#6f6f6f"/></svg>
<div style="position:absolute;left:1598.5px;top:331.88px;font-size:22px;line-height:22px;color:#dedede;font-weight:normal;white-space:nowrap;-webkit-text-stroke:0.6px #dedede;">1:00:10</div>
<div style="position:absolute;left:1721.82px;top:331.88px;font-size:22px;line-height:22px;color:#dedede;font-weight:normal;white-space:nowrap;-webkit-text-stroke:0.6px #dedede;">1:00:14</div>
<div style="position:absolute;left:1906.8px;top:331.88px;font-size:22px;line-height:22px;color:#dedede;font-weight:normal;white-space:nowrap;-webkit-text-stroke:0.6px #dedede;">1:00:20</div>
<div style="position:absolute;left:2030.12px;top:331.88px;font-size:22px;line-height:22px;color:#dedede;font-weight:normal;white-space:nowrap;-webkit-text-stroke:0.6px #dedede;">1:00:24</div>
<div style="position:absolute;left:2215.1px;top:331.88px;font-size:22px;line-height:22px;color:#dedede;font-weight:normal;white-space:nowrap;-webkit-text-stroke:0.6px #dedede;">1:00:30</div>
<div style="position:absolute;left:2338.42px;top:331.88px;font-size:22px;line-height:22px;color:#dedede;font-weight:normal;white-space:nowrap;-webkit-text-stroke:0.6px #dedede;">1:00:34</div>
<div style="position:absolute;left:2523.4px;top:331.88px;font-size:22px;line-height:22px;color:#dedede;font-weight:normal;white-space:nowrap;-webkit-text-stroke:0.6px #dedede;">1:00:40</div>
<div style="position:absolute;left:2831.7px;top:331.88px;font-size:22px;line-height:22px;color:#dedede;font-weight:normal;white-space:nowrap;-webkit-text-stroke:0.6px #dedede;">1:00:50</div>
<div style="position:absolute;left:3140.0px;top:331.88px;font-size:22px;line-height:22px;color:#dedede;font-weight:normal;white-space:nowrap;-webkit-text-stroke:0.6px #dedede;">1:01</div>
<div style="position:absolute;left:3263.3199999999997px;top:331.88px;font-size:22px;line-height:22px;color:#dedede;font-weight:normal;white-space:nowrap;-webkit-text-stroke:0.6px #dedede;">1:01:04</div>
<div style="position:absolute;left:3448.3px;top:331.88px;font-size:22px;line-height:22px;color:#dedede;font-weight:normal;white-space:nowrap;-webkit-text-stroke:0.6px #dedede;">1:01:10</div>
<svg style="position:absolute;left:1570px;top:364px;" width="1998" height="36" viewBox="0 0 1998 36"><rect x="18.00" y="4" width="2.4" height="32" fill="#111"/><rect x="171.46" y="4" width="2.4" height="32" fill="#111"/><rect x="324.92" y="4" width="2.4" height="32" fill="#111"/><rect x="478.38" y="4" width="2.4" height="32" fill="#111"/><rect x="631.84" y="4" width="2.4" height="32" fill="#111"/><rect x="785.30" y="4" width="2.4" height="32" fill="#111"/><rect x="938.76" y="4" width="2.4" height="32" fill="#111"/><rect x="1092.22" y="4" width="2.4" height="32" fill="#111"/><rect x="1245.68" y="4" width="2.4" height="32" fill="#111"/><rect x="1399.14" y="4" width="2.4" height="32" fill="#111"/><rect x="1552.60" y="4" width="2.4" height="32" fill="#111"/><rect x="1706.06" y="4" width="2.4" height="32" fill="#111"/><rect x="1859.52" y="4" width="2.4" height="32" fill="#111"/></svg>
<div style="position:absolute;left:1597.0px;top:366.49px;font-size:26px;line-height:26px;color:#151515;font-weight:normal;white-space:nowrap;-webkit-text-stroke:0.4px #151515;">9</div>
<div style="position:absolute;left:1750.46px;top:366.49px;font-size:26px;line-height:26px;color:#151515;font-weight:normal;white-space:nowrap;-webkit-text-stroke:0.4px #151515;">13</div>
<div style="position:absolute;left:1903.92px;top:366.49px;font-size:26px;line-height:26px;color:#151515;font-weight:normal;white-space:nowrap;-webkit-text-stroke:0.4px #151515;">17</div>
<div style="position:absolute;left:2057.38px;top:366.49px;font-size:26px;line-height:26px;color:#151515;font-weight:normal;white-space:nowrap;-webkit-text-stroke:0.4px #151515;">21</div>
<div style="position:absolute;left:2210.84px;top:366.49px;font-size:26px;line-height:26px;color:#151515;font-weight:normal;white-space:nowrap;-webkit-text-stroke:0.4px #151515;">25</div>
<div style="position:absolute;left:2364.3px;top:366.49px;font-size:26px;line-height:26px;color:#151515;font-weight:normal;white-space:nowrap;-webkit-text-stroke:0.4px #151515;">29</div>
<div style="position:absolute;left:2517.76px;top:366.49px;font-size:26px;line-height:26px;color:#151515;font-weight:normal;white-space:nowrap;-webkit-text-stroke:0.4px #151515;">33</div>
<div style="position:absolute;left:2671.2200000000003px;top:366.49px;font-size:26px;line-height:26px;color:#151515;font-weight:normal;white-space:nowrap;-webkit-text-stroke:0.4px #151515;">37</div>
<div style="position:absolute;left:2824.6800000000003px;top:366.49px;font-size:26px;line-height:26px;color:#151515;font-weight:normal;white-space:nowrap;-webkit-text-stroke:0.4px #151515;">41</div>
<div style="position:absolute;left:2978.1400000000003px;top:366.49px;font-size:26px;line-height:26px;color:#151515;font-weight:normal;white-space:nowrap;-webkit-text-stroke:0.4px #151515;">45</div>
<div style="position:absolute;left:3131.6000000000004px;top:366.49px;font-size:26px;line-height:26px;color:#151515;font-weight:normal;white-space:nowrap;-webkit-text-stroke:0.4px #151515;">49</div>
<div style="position:absolute;left:3285.0600000000004px;top:366.49px;font-size:26px;line-height:26px;color:#151515;font-weight:normal;white-space:nowrap;-webkit-text-stroke:0.4px #151515;">53</div>
<div style="position:absolute;left:3438.52px;top:366.49px;font-size:26px;line-height:26px;color:#151515;font-weight:normal;white-space:nowrap;-webkit-text-stroke:0.4px #151515;">57</div>
<svg style="position:absolute;left:1570px;top:401px;" width="1998" height="37" viewBox="0 0 1998 37"><rect x="8.41" y="21" width="2" height="16" fill="#7a7a7a"/><rect x="18.00" y="0" width="2" height="37" fill="#7a7a7a"/><rect x="27.59" y="21" width="2" height="16" fill="#7a7a7a"/><rect x="37.18" y="21" width="2" height="16" fill="#7a7a7a"/><rect x="46.77" y="21" width="2" height="16" fill="#7a7a7a"/><rect x="56.37" y="3" width="2" height="34" fill="#7a7a7a"/><rect x="65.96" y="21" width="2" height="16" fill="#7a7a7a"/><rect x="75.55" y="21" width="2" height="16" fill="#7a7a7a"/><rect x="85.14" y="21" width="2" height="16" fill="#7a7a7a"/><rect x="94.73" y="3" width="2" height="34" fill="#7a7a7a"/><rect x="104.32" y="21" width="2" height="16" fill="#7a7a7a"/><rect x="113.91" y="21" width="2" height="16" fill="#7a7a7a"/><rect x="123.50" y="21" width="2" height="16" fill="#7a7a7a"/><rect x="133.10" y="3" width="2" height="34" fill="#7a7a7a"/><rect x="142.69" y="21" width="2" height="16" fill="#7a7a7a"/><rect x="152.28" y="21" width="2" height="16" fill="#7a7a7a"/><rect x="161.87" y="21" width="2" height="16" fill="#7a7a7a"/><rect x="171.46" y="0" width="2" height="37" fill="#7a7a7a"/><rect x="181.05" y="21" width="2" height="16" fill="#7a7a7a"/><rect x="190.64" y="21" width="2" height="16" fill="#7a7a7a"/><rect x="200.23" y="21" width="2" height="16" fill="#7a7a7a"/><rect x="209.83" y="3" width="2" height="34" fill="#7a7a7a"/><rect x="219.42" y="21" width="2" height="16" fill="#7a7a7a"/><rect x="229.01" y="21" width="2" height="16" fill="#7a7a7a"/><rect x="238.60" y="21" width="2" height="16" fill="#7a7a7a"/><rect x="248.19" y="3" width="2" height="34" fill="#7a7a7a"/><rect x="257.78" y="21" width="2" height="16" fill="#7a7a7a"/><rect x="267.37" y="21" width="2" height="16" fill="#7a7a7a"/><rect x="276.96" y="21" width="2" height="16" fill="#7a7a7a"/><rect x="286.56" y="3" width="2" height="34" fill="#7a7a7a"/><rect x="296.15" y="21" width="2" height="16" fill="#7a7a7a"/><rect x="305.74" y="21" width="2" height="16" fill="#7a7a7a"/><rect x="315.33" y="21" width="2" height="16" fill="#7a7a7a"/><rect x="324.92" y="0" width="2" height="37" fill="#7a7a7a"/><rect x="334.51" y="21" width="2" height="16" fill="#7a7a7a"/><rect x="344.10" y="21" width="2" height="16" fill="#7a7a7a"/><rect x="353.69" y="21" width="2" height="16" fill="#7a7a7a"/><rect x="363.29" y="3" width="2" height="34" fill="#7a7a7a"/><rect x="372.88" y="21" width="2" height="16" fill="#7a7a7a"/><rect x="382.47" y="21" width="2" height="16" fill="#7a7a7a"/><rect x="392.06" y="21" width="2" height="16" fill="#7a7a7a"/><rect x="401.65" y="3" width="2" height="34" fill="#7a7a7a"/><rect x="411.24" y="21" width="2" height="16" fill="#7a7a7a"/><rect x="420.83" y="21" width="2" height="16" fill="#7a7a7a"/><rect x="430.42" y="21" width="2" height="16" fill="#7a7a7a"/><rect x="440.02" y="3" width="2" height="34" fill="#7a7a7a"/><rect x="449.61" y="21" width="2" height="16" fill="#7a7a7a"/><rect x="459.20" y="21" width="2" height="16" fill="#7a7a7a"/><rect x="468.79" y="21" width="2" height="16" fill="#7a7a7a"/><rect x="478.38" y="0" width="2" height="37" fill="#7a7a7a"/><rect x="487.97" y="21" width="2" height="16" fill="#7a7a7a"/><rect x="497.56" y="21" width="2" height="16" fill="#7a7a7a"/><rect x="507.15" y="21" width="2" height="16" fill="#7a7a7a"/><rect x="516.74" y="3" width="2" height="34" fill="#7a7a7a"/><rect x="526.34" y="21" width="2" height="16" fill="#7a7a7a"/><rect x="535.93" y="21" width="2" height="16" fill="#7a7a7a"/><rect x="545.52" y="21" width="2" height="16" fill="#7a7a7a"/><rect x="555.11" y="3" width="2" height="34" fill="#7a7a7a"/><rect x="564.70" y="21" width="2" height="16" fill="#7a7a7a"/><rect x="574.29" y="21" width="2" height="16" fill="#7a7a7a"/><rect x="583.88" y="21" width="2" height="16" fill="#7a7a7a"/><rect x="593.47" y="3" width="2" height="34" fill="#7a7a7a"/><rect x="603.07" y="21" width="2" height="16" fill="#7a7a7a"/><rect x="612.66" y="21" width="2" height="16" fill="#7a7a7a"/><rect x="622.25" y="21" width="2" height="16" fill="#7a7a7a"/><rect x="631.84" y="0" width="2" height="37" fill="#7a7a7a"/><rect x="641.43" y="21" width="2" height="16" fill="#7a7a7a"/><rect x="651.02" y="21" width="2" height="16" fill="#7a7a7a"/><rect x="660.61" y="21" width="2" height="16" fill="#7a7a7a"/><rect x="670.20" y="3" width="2" height="34" fill="#7a7a7a"/><rect x="679.80" y="21" width="2" height="16" fill="#7a7a7a"/><rect x="689.39" y="21" width="2" height="16" fill="#7a7a7a"/><rect x="698.98" y="21" width="2" height="16" fill="#7a7a7a"/><rect x="708.57" y="3" width="2" height="34" fill="#7a7a7a"/><rect x="718.16" y="21" width="2" height="16" fill="#7a7a7a"/><rect x="727.75" y="21" width="2" height="16" fill="#7a7a7a"/><rect x="737.34" y="21" width="2" height="16" fill="#7a7a7a"/><rect x="746.93" y="3" width="2" height="34" fill="#7a7a7a"/><rect x="756.53" y="21" width="2" height="16" fill="#7a7a7a"/><rect x="766.12" y="21" width="2" height="16" fill="#7a7a7a"/><rect x="775.71" y="21" width="2" height="16" fill="#7a7a7a"/><rect x="785.30" y="0" width="2" height="37" fill="#7a7a7a"/><rect x="794.89" y="21" width="2" height="16" fill="#7a7a7a"/><rect x="804.48" y="21" width="2" height="16" fill="#7a7a7a"/><rect x="814.07" y="21" width="2" height="16" fill="#7a7a7a"/><rect x="823.66" y="3" width="2" height="34" fill="#7a7a7a"/><rect x="833.26" y="21" width="2" height="16" fill="#7a7a7a"/><rect x="842.85" y="21" width="2" height="16" fill="#7a7a7a"/><rect x="852.44" y="21" width="2" height="16" fill="#7a7a7a"/><rect x="862.03" y="3" width="2" height="34" fill="#7a7a7a"/><rect x="871.62" y="21" width="2" height="16" fill="#7a7a7a"/><rect x="881.21" y="21" width="2" height="16" fill="#7a7a7a"/><rect x="890.80" y="21" width="2" height="16" fill="#7a7a7a"/><rect x="900.39" y="3" width="2" height="34" fill="#7a7a7a"/><rect x="909.99" y="21" width="2" height="16" fill="#7a7a7a"/><rect x="919.58" y="21" width="2" height="16" fill="#7a7a7a"/><rect x="929.17" y="21" width="2" height="16" fill="#7a7a7a"/><rect x="938.76" y="0" width="2" height="37" fill="#7a7a7a"/><rect x="948.35" y="21" width="2" height="16" fill="#7a7a7a"/><rect x="957.94" y="21" width="2" height="16" fill="#7a7a7a"/><rect x="967.53" y="21" width="2" height="16" fill="#7a7a7a"/><rect x="977.12" y="3" width="2" height="34" fill="#7a7a7a"/><rect x="986.72" y="21" width="2" height="16" fill="#7a7a7a"/><rect x="996.31" y="21" width="2" height="16" fill="#7a7a7a"/><rect x="1005.90" y="21" width="2" height="16" fill="#7a7a7a"/><rect x="1015.49" y="3" width="2" height="34" fill="#7a7a7a"/><rect x="1025.08" y="21" width="2" height="16" fill="#7a7a7a"/><rect x="1034.67" y="21" width="2" height="16" fill="#7a7a7a"/><rect x="1044.26" y="21" width="2" height="16" fill="#7a7a7a"/><rect x="1053.86" y="3" width="2" height="34" fill="#7a7a7a"/><rect x="1063.45" y="21" width="2" height="16" fill="#7a7a7a"/><rect x="1073.04" y="21" width="2" height="16" fill="#7a7a7a"/><rect x="1082.63" y="21" width="2" height="16" fill="#7a7a7a"/><rect x="1092.22" y="0" width="2" height="37" fill="#7a7a7a"/><rect x="1101.81" y="21" width="2" height="16" fill="#7a7a7a"/><rect x="1111.40" y="21" width="2" height="16" fill="#7a7a7a"/><rect x="1120.99" y="21" width="2" height="16" fill="#7a7a7a"/><rect x="1130.59" y="3" width="2" height="34" fill="#7a7a7a"/><rect x="1140.18" y="21" width="2" height="16" fill="#7a7a7a"/><rect x="1149.77" y="21" width="2" height="16" fill="#7a7a7a"/><rect x="1159.36" y="21" width="2" height="16" fill="#7a7a7a"/><rect x="1168.95" y="3" width="2" height="34" fill="#7a7a7a"/><rect x="1178.54" y="21" width="2" height="16" fill="#7a7a7a"/><rect x="1188.13" y="21" width="2" height="16" fill="#7a7a7a"/><rect x="1197.72" y="21" width="2" height="16" fill="#7a7a7a"/><rect x="1207.32" y="3" width="2" height="34" fill="#7a7a7a"/><rect x="1216.91" y="21" width="2" height="16" fill="#7a7a7a"/><rect x="1226.50" y="21" width="2" height="16" fill="#7a7a7a"/><rect x="1236.09" y="21" width="2" height="16" fill="#7a7a7a"/><rect x="1245.68" y="0" width="2" height="37" fill="#7a7a7a"/><rect x="1255.27" y="21" width="2" height="16" fill="#7a7a7a"/><rect x="1264.86" y="21" width="2" height="16" fill="#7a7a7a"/><rect x="1274.45" y="21" width="2" height="16" fill="#7a7a7a"/><rect x="1284.05" y="3" width="2" height="34" fill="#7a7a7a"/><rect x="1293.64" y="21" width="2" height="16" fill="#7a7a7a"/><rect x="1303.23" y="21" width="2" height="16" fill="#7a7a7a"/><rect x="1312.82" y="21" width="2" height="16" fill="#7a7a7a"/><rect x="1322.41" y="3" width="2" height="34" fill="#7a7a7a"/><rect x="1332.00" y="21" width="2" height="16" fill="#7a7a7a"/><rect x="1341.59" y="21" width="2" height="16" fill="#7a7a7a"/><rect x="1351.18" y="21" width="2" height="16" fill="#7a7a7a"/><rect x="1360.78" y="3" width="2" height="34" fill="#7a7a7a"/><rect x="1370.37" y="21" width="2" height="16" fill="#7a7a7a"/><rect x="1379.96" y="21" width="2" height="16" fill="#7a7a7a"/><rect x="1389.55" y="21" width="2" height="16" fill="#7a7a7a"/><rect x="1399.14" y="0" width="2" height="37" fill="#7a7a7a"/><rect x="1408.73" y="21" width="2" height="16" fill="#7a7a7a"/><rect x="1418.32" y="21" width="2" height="16" fill="#7a7a7a"/><rect x="1427.91" y="21" width="2" height="16" fill="#7a7a7a"/><rect x="1437.51" y="3" width="2" height="34" fill="#7a7a7a"/><rect x="1447.10" y="21" width="2" height="16" fill="#7a7a7a"/><rect x="1456.69" y="21" width="2" height="16" fill="#7a7a7a"/><rect x="1466.28" y="21" width="2" height="16" fill="#7a7a7a"/><rect x="1475.87" y="3" width="2" height="34" fill="#7a7a7a"/><rect x="1485.46" y="21" width="2" height="16" fill="#7a7a7a"/><rect x="1495.05" y="21" width="2" height="16" fill="#7a7a7a"/><rect x="1504.64" y="21" width="2" height="16" fill="#7a7a7a"/><rect x="1514.24" y="3" width="2" height="34" fill="#7a7a7a"/><rect x="1523.83" y="21" width="2" height="16" fill="#7a7a7a"/><rect x="1533.42" y="21" width="2" height="16" fill="#7a7a7a"/><rect x="1543.01" y="21" width="2" height="16" fill="#7a7a7a"/><rect x="1552.60" y="0" width="2" height="37" fill="#7a7a7a"/><rect x="1562.19" y="21" width="2" height="16" fill="#7a7a7a"/><rect x="1571.78" y="21" width="2" height="16" fill="#7a7a7a"/><rect x="1581.37" y="21" width="2" height="16" fill="#7a7a7a"/><rect x="1590.97" y="3" width="2" height="34" fill="#7a7a7a"/><rect x="1600.56" y="21" width="2" height="16" fill="#7a7a7a"/><rect x="1610.15" y="21" width="2" height="16" fill="#7a7a7a"/><rect x="1619.74" y="21" width="2" height="16" fill="#7a7a7a"/><rect x="1629.33" y="3" width="2" height="34" fill="#7a7a7a"/><rect x="1638.92" y="21" width="2" height="16" fill="#7a7a7a"/><rect x="1648.51" y="21" width="2" height="16" fill="#7a7a7a"/><rect x="1658.10" y="21" width="2" height="16" fill="#7a7a7a"/><rect x="1667.70" y="3" width="2" height="34" fill="#7a7a7a"/><rect x="1677.29" y="21" width="2" height="16" fill="#7a7a7a"/><rect x="1686.88" y="21" width="2" height="16" fill="#7a7a7a"/><rect x="1696.47" y="21" width="2" height="16" fill="#7a7a7a"/><rect x="1706.06" y="0" width="2" height="37" fill="#7a7a7a"/><rect x="1715.65" y="21" width="2" height="16" fill="#7a7a7a"/><rect x="1725.24" y="21" width="2" height="16" fill="#7a7a7a"/><rect x="1734.83" y="21" width="2" height="16" fill="#7a7a7a"/><rect x="1744.43" y="3" width="2" height="34" fill="#7a7a7a"/><rect x="1754.02" y="21" width="2" height="16" fill="#7a7a7a"/><rect x="1763.61" y="21" width="2" height="16" fill="#7a7a7a"/><rect x="1773.20" y="21" width="2" height="16" fill="#7a7a7a"/><rect x="1782.79" y="3" width="2" height="34" fill="#7a7a7a"/><rect x="1792.38" y="21" width="2" height="16" fill="#7a7a7a"/><rect x="1801.97" y="21" width="2" height="16" fill="#7a7a7a"/><rect x="1811.56" y="21" width="2" height="16" fill="#7a7a7a"/><rect x="1821.16" y="3" width="2" height="34" fill="#7a7a7a"/><rect x="1830.75" y="21" width="2" height="16" fill="#7a7a7a"/><rect x="1840.34" y="21" width="2" height="16" fill="#7a7a7a"/><rect x="1849.93" y="21" width="2" height="16" fill="#7a7a7a"/><rect x="1859.52" y="0" width="2" height="37" fill="#7a7a7a"/><rect x="1869.11" y="21" width="2" height="16" fill="#7a7a7a"/><rect x="1878.70" y="21" width="2" height="16" fill="#7a7a7a"/><rect x="1888.29" y="21" width="2" height="16" fill="#7a7a7a"/><rect x="1897.89" y="3" width="2" height="34" fill="#7a7a7a"/><rect x="1907.48" y="21" width="2" height="16" fill="#7a7a7a"/><rect x="1917.07" y="21" width="2" height="16" fill="#7a7a7a"/><rect x="1926.66" y="21" width="2" height="16" fill="#7a7a7a"/><rect x="1936.25" y="3" width="2" height="34" fill="#7a7a7a"/><rect x="1945.84" y="21" width="2" height="16" fill="#7a7a7a"/><rect x="1955.43" y="21" width="2" height="16" fill="#7a7a7a"/><rect x="1965.02" y="21" width="2" height="16" fill="#7a7a7a"/><rect x="1974.61" y="3" width="2" height="34" fill="#7a7a7a"/><rect x="1984.21" y="21" width="2" height="16" fill="#7a7a7a"/><rect x="1993.80" y="21" width="2" height="16" fill="#7a7a7a"/></svg>
<div style="position:absolute;left:1570px;top:1198px;width:1998px;height:74px;background:#333333;"></div>
<svg style="position:absolute;left:1570px;top:438px;" width="1998" height="836" viewBox="0 0 1998 836"><rect x="18.25" y="0" width="1.5" height="836" fill="#414141"/><rect x="56.62" y="0" width="1.5" height="836" fill="#414141"/><rect x="94.98" y="0" width="1.5" height="836" fill="#414141"/><rect x="133.35" y="0" width="1.5" height="836" fill="#414141"/><rect x="171.71" y="0" width="1.5" height="836" fill="#414141"/><rect x="210.08" y="0" width="1.5" height="836" fill="#414141"/><rect x="248.44" y="0" width="1.5" height="836" fill="#414141"/><rect x="286.81" y="0" width="1.5" height="836" fill="#414141"/><rect x="325.17" y="0" width="1.5" height="836" fill="#414141"/><rect x="363.54" y="0" width="1.5" height="836" fill="#414141"/><rect x="401.90" y="0" width="1.5" height="836" fill="#414141"/><rect x="440.27" y="0" width="1.5" height="836" fill="#414141"/><rect x="478.63" y="0" width="1.5" height="836" fill="#414141"/><rect x="516.99" y="0" width="1.5" height="836" fill="#414141"/><rect x="555.36" y="0" width="1.5" height="836" fill="#414141"/><rect x="593.72" y="0" width="1.5" height="836" fill="#414141"/><rect x="632.09" y="0" width="1.5" height="836" fill="#414141"/><rect x="670.45" y="0" width="1.5" height="836" fill="#414141"/><rect x="708.82" y="0" width="1.5" height="836" fill="#414141"/><rect x="747.18" y="0" width="1.5" height="836" fill="#414141"/><rect x="785.55" y="0" width="1.5" height="836" fill="#414141"/><rect x="823.91" y="0" width="1.5" height="836" fill="#414141"/><rect x="862.28" y="0" width="1.5" height="836" fill="#414141"/><rect x="900.64" y="0" width="1.5" height="836" fill="#414141"/><rect x="939.01" y="0" width="1.5" height="836" fill="#414141"/><rect x="977.38" y="0" width="1.5" height="836" fill="#414141"/><rect x="1015.74" y="0" width="1.5" height="836" fill="#414141"/><rect x="1054.11" y="0" width="1.5" height="836" fill="#414141"/><rect x="1092.47" y="0" width="1.5" height="836" fill="#414141"/><rect x="1130.84" y="0" width="1.5" height="836" fill="#414141"/><rect x="1169.20" y="0" width="1.5" height="836" fill="#414141"/><rect x="1207.57" y="0" width="1.5" height="836" fill="#414141"/><rect x="1245.93" y="0" width="1.5" height="836" fill="#414141"/><rect x="1284.30" y="0" width="1.5" height="836" fill="#414141"/><rect x="1322.66" y="0" width="1.5" height="836" fill="#414141"/><rect x="1361.03" y="0" width="1.5" height="836" fill="#414141"/><rect x="1399.39" y="0" width="1.5" height="836" fill="#414141"/><rect x="1437.76" y="0" width="1.5" height="836" fill="#414141"/><rect x="1476.12" y="0" width="1.5" height="836" fill="#414141"/><rect x="1514.49" y="0" width="1.5" height="836" fill="#414141"/><rect x="1552.85" y="0" width="1.5" height="836" fill="#414141"/><rect x="1591.22" y="0" width="1.5" height="836" fill="#414141"/><rect x="1629.58" y="0" width="1.5" height="836" fill="#414141"/><rect x="1667.95" y="0" width="1.5" height="836" fill="#414141"/><rect x="1706.31" y="0" width="1.5" height="836" fill="#414141"/><rect x="1744.68" y="0" width="1.5" height="836" fill="#414141"/><rect x="1783.04" y="0" width="1.5" height="836" fill="#414141"/><rect x="1821.41" y="0" width="1.5" height="836" fill="#414141"/><rect x="1859.77" y="0" width="1.5" height="836" fill="#414141"/><rect x="1898.14" y="0" width="1.5" height="836" fill="#414141"/><rect x="1936.50" y="0" width="1.5" height="836" fill="#414141"/><rect x="1974.86" y="0" width="1.5" height="836" fill="#414141"/><rect x="0" y="74" width="1998" height="2" fill="#232323"/><rect x="0" y="150" width="1998" height="2" fill="#232323"/><rect x="0" y="226" width="1998" height="2" fill="#232323"/><rect x="0" y="302" width="1998" height="2" fill="#232323"/><rect x="0" y="378" width="1998" height="2" fill="#232323"/><rect x="0" y="454" width="1998" height="2" fill="#232323"/><rect x="0" y="530" width="1998" height="2" fill="#232323"/><rect x="0" y="606" width="1998" height="2" fill="#232323"/><rect x="0" y="682" width="1998" height="2" fill="#232323"/><rect x="0" y="758" width="1998" height="2" fill="#232323"/><rect x="0" y="834" width="1998" height="2" fill="#232323"/></svg>
<div style="position:absolute;left:572px;top:438px;width:998px;height:74px;background:#5a5a5a;"></div>
<div style="position:absolute;left:572px;top:512px;width:998px;height:2px;background:#464646;"></div>
<div style="position:absolute;left:572px;top:438px;width:40px;height:74px;background:#6439a8;"></div>
<div style="position:absolute;left:612px;top:438px;width:2px;height:74px;background:#474747;"></div>
<div style="position:absolute;left:292px;width:600px;text-align:center;top:461.99px;font-size:26px;line-height:26px;color:#ffffff;font-weight:normal;white-space:nowrap;-webkit-text-stroke:0.8px #fff;">1</div>
<div style="position:absolute;left:630px;top:446px;width:134px;height:58px;border-radius:13px;background:#646464;box-shadow:0 1px 2px rgba(0,0,0,.4);"></div>
<svg style="position:absolute;left:640px;top:463px;" width="18" height="24" viewBox="0 0 18 24"><path d="M5 3 L14 12 L5 21" fill="none" stroke="#fff" stroke-width="2.4" stroke-linecap="round" stroke-linejoin="round"/></svg>
<svg style="position:absolute;left:686px;top:449px;" width="58" height="44" viewBox="0 0 58 44"><g transform="scale(0.87)">
<g stroke="#b9b9b9" stroke-width="1.3" fill="none" stroke-linecap="round">
<path d="M6 9 V34 M6 34 L1 46 M6 34 L12 46 M6 34 L8 40"/>
<path d="M51 12 V35 M51 35 L45 46 M51 35 L58 46 M46 5 L60 17"/>
<path d="M44 26 L40 46 M44 30 L48 45"/>
</g>
<ellipse cx="14" cy="4.5" rx="12" ry="3" fill="#b79a4c" transform="rotate(14 14 4.5)"/>
<ellipse cx="48" cy="4" rx="8.5" ry="2.2" fill="#b79a4c" transform="rotate(-4 48 4)"/>
<ellipse cx="46" cy="12" rx="6" ry="1.6" fill="#b79a4c"/>
<rect x="9" y="15" width="12.5" height="16" rx="1.5" fill="#cf8a4a"/>
<rect x="9" y="15" width="12.5" height="2" fill="#e6e6e6"/>
<rect x="17" y="10" width="11" height="11.5" rx="1.5" fill="#e09a58"/>
<rect x="17" y="10" width="11" height="1.6" fill="#dcdcdc"/>
<rect x="32" y="10" width="10" height="11" rx="1.5" fill="#e09a58"/>
<rect x="32" y="10" width="10" height="1.6" fill="#dcdcdc"/>
<rect x="41" y="18" width="8" height="5" rx="1" fill="#d99048"/>
<rect x="28" y="12" width="4" height="10" fill="#bdbdbd"/>
<circle cx="29.5" cy="35" r="11" fill="#c4c4c4" stroke="#c99a66" stroke-width="2"/>
<circle cx="29.5" cy="34" r="5.5" fill="#a9a9a9"/>
<rect x="28" y="36" width="3" height="5" fill="#444"/>
</g></svg>
<div class="btn" style="left:782px;top:458px;width:82px;height:32px;border-radius:8px;background:#5f5f5f;"></div>
<div style="position:absolute;left:822px;top:458px;width:1.5px;height:32px;background:#474747;"></div>
<div style="position:absolute;left:502.5px;width:600px;text-align:center;top:462.34px;font-size:25px;line-height:25px;color:#f2f2f2;font-weight:normal;white-space:nowrap;-webkit-text-stroke:0.5px #f2f2f2;">M</div>
<div style="position:absolute;left:543.5px;width:600px;text-align:center;top:462.34px;font-size:25px;line-height:25px;color:#f2f2f2;font-weight:normal;white-space:nowrap;-webkit-text-stroke:0.5px #f2f2f2;">S</div>
<div style="position:absolute;left:987px;top:461.99px;font-size:26px;line-height:26px;color:#f5f5f5;font-weight:normal;white-space:nowrap;letter-spacing:-0.65px;-webkit-text-stroke:0.6px #f5f5f5;">LIVE DRUMS</div>
<div style="position:absolute;left:1292px;top:456px;width:256px;height:36px;background:#363636;border-radius:18px;"></div>
<div style="position:absolute;left:1458px;top:458px;width:32px;height:32px;border-radius:50%;background:#898989;box-shadow:0 1px 2px rgba(0,0,0,.45);"></div>
<div style="position:absolute;left:572px;top:514px;width:998px;height:74px;background:#5a5a5a;"></div>
<div style="position:absolute;left:572px;top:588px;width:998px;height:2px;background:#464646;"></div>
<div style="position:absolute;left:572px;top:514px;width:40px;height:74px;background:#6439a8;"></div>
<div style="position:absolute;left:612px;top:514px;width:2px;height:74px;background:#474747;"></div>
<div style="position:absolute;left:292px;width:600px;text-align:center;top:537.99px;font-size:26px;line-height:26px;color:#ffffff;font-weight:normal;white-space:nowrap;-webkit-text-stroke:0.8px #fff;">18</div>
<div style="position:absolute;left:630px;top:522px;width:134px;height:58px;border-radius:13px;background:#646464;box-shadow:0 1px 2px rgba(0,0,0,.4);"></div>
<svg style="position:absolute;left:640px;top:539px;" width="18" height="24" viewBox="0 0 18 24"><path d="M5 3 L14 12 L5 21" fill="none" stroke="#fff" stroke-width="2.4" stroke-linecap="round" stroke-linejoin="round"/></svg>
<svg style="position:absolute;left:686px;top:525px;" width="58" height="44" viewBox="0 0 58 44"><g transform="scale(0.87)">
<g stroke="#b9b9b9" stroke-width="1.3" fill="none" stroke-linecap="round">
<path d="M6 9 V34 M6 34 L1 46 M6 34 L12 46 M6 34 L8 40"/>
<path d="M51 12 V35 M51 35 L45 46 M51 35 L58 46 M46 5 L60 17"/>
<path d="M44 26 L40 46 M44 30 L48 45"/>
</g>
<ellipse cx="14" cy="4.5" rx="12" ry="3" fill="#b79a4c" transform="rotate(14 14 4.5)"/>
<ellipse cx="48" cy="4" rx="8.5" ry="2.2" fill="#b79a4c" transform="rotate(-4 48 4)"/>
<ellipse cx="46" cy="12" rx="6" ry="1.6" fill="#b79a4c"/>
<rect x="9" y="15" width="12.5" height="16" rx="1.5" fill="#cf8a4a"/>
<rect x="9" y="15" width="12.5" height="2" fill="#e6e6e6"/>
<rect x="17" y="10" width="11" height="11.5" rx="1.5" fill="#e09a58"/>
<rect x="17" y="10" width="11" height="1.6" fill="#dcdcdc"/>
<rect x="32" y="10" width="10" height="11" rx="1.5" fill="#e09a58"/>
<rect x="32" y="10" width="10" height="1.6" fill="#dcdcdc"/>
<rect x="41" y="18" width="8" height="5" rx="1" fill="#d99048"/>
<rect x="28" y="12" width="4" height="10" fill="#bdbdbd"/>
<circle cx="29.5" cy="35" r="11" fill="#c4c4c4" stroke="#c99a66" stroke-width="2"/>
<circle cx="29.5" cy="34" r="5.5" fill="#a9a9a9"/>
<rect x="28" y="36" width="3" height="5" fill="#444"/>
</g></svg>
<div class="btn" style="left:782px;top:534px;width:82px;height:32px;border-radius:8px;background:#5f5f5f;"></div>
<div style="position:absolute;left:822px;top:534px;width:1.5px;height:32px;background:#474747;"></div>
<div style="position:absolute;left:502.5px;width:600px;text-align:center;top:538.34px;font-size:25px;line-height:25px;color:#f2f2f2;font-weight:normal;white-space:nowrap;-webkit-text-stroke:0.5px #f2f2f2;">M</div>
<div style="position:absolute;left:543.5px;width:600px;text-align:center;top:538.34px;font-size:25px;line-height:25px;color:#f2f2f2;font-weight:normal;white-space:nowrap;-webkit-text-stroke:0.5px #f2f2f2;">S</div>
<div style="position:absolute;left:987px;top:537.99px;font-size:26px;line-height:26px;color:#f5f5f5;font-weight:normal;white-space:nowrap;letter-spacing:-0.65px;-webkit-text-stroke:0.6px #f5f5f5;">TOM ROLLS/HITS</div>
<div style="position:absolute;left:1292px;top:532px;width:256px;height:36px;background:#363636;border-radius:18px;"></div>
<div style="position:absolute;left:1458px;top:534px;width:32px;height:32px;border-radius:50%;background:#898989;box-shadow:0 1px 2px rgba(0,0,0,.45);"></div>
<div style="position:absolute;left:572px;top:590px;width:998px;height:74px;background:#5a5a5a;"></div>
<div style="position:absolute;left:572px;top:664px;width:998px;height:2px;background:#464646;"></div>
<div style="position:absolute;left:572px;top:590px;width:40px;height:74px;background:#4ea549;"></div>
<div style="position:absolute;left:612px;top:590px;width:2px;height:74px;background:#474747;"></div>
<div style="position:absolute;left:292px;width:600px;text-align:center;top:613.99px;font-size:26px;line-height:26px;color:#ffffff;font-weight:normal;white-space:nowrap;-webkit-text-stroke:0.8px #fff;">21</div>
<svg style="position:absolute;left:683px;top:600px;" width="66" height="52" viewBox="0 0 66 52"><g transform="scale(1.0)">
<g stroke="#b9b9b9" stroke-width="1.3" fill="none" stroke-linecap="round">
<path d="M6 9 V34 M6 34 L1 46 M6 34 L12 46 M6 34 L8 40"/>
<path d="M51 12 V35 M51 35 L45 46 M51 35 L58 46 M46 5 L60 17"/>
<path d="M44 26 L40 46 M44 30 L48 45"/>
</g>
<ellipse cx="14" cy="4.5" rx="12" ry="3" fill="#b79a4c" transform="rotate(14 14 4.5)"/>
<ellipse cx="48" cy="4" rx="8.5" ry="2.2" fill="#b79a4c" transform="rotate(-4 48 4)"/>
<ellipse cx="46" cy="12" rx="6" ry="1.6" fill="#b79a4c"/>
<rect x="9" y="15" width="12.5" height="16" rx="1.5" fill="#cf8a4a"/>
<rect x="9" y="15" width="12.5" height="2" fill="#e6e6e6"/>
<rect x="17" y="10" width="11" height="11.5" rx="1.5" fill="#e09a58"/>
<rect x="17" y="10" width="11" height="1.6" fill="#dcdcdc"/>
<rect x="32" y="10" width="10" height="11" rx="1.5" fill="#e09a58"/>
<rect x="32" y="10" width="10" height="1.6" fill="#dcdcdc"/>
<rect x="41" y="18" width="8" height="5" rx="1" fill="#d99048"/>
<rect x="28" y="12" width="4" height="10" fill="#bdbdbd"/>
<circle cx="29.5" cy="35" r="11" fill="#c4c4c4" stroke="#c99a66" stroke-width="2"/>
<circle cx="29.5" cy="34" r="5.5" fill="#a9a9a9"/>
<rect x="28" y="36" width="3" height="5" fill="#444"/>
</g></svg>
<div class="btn" style="left:782px;top:610px;width:82px;height:32px;border-radius:8px;background:#5f5f5f;"></div>
<div style="position:absolute;left:822px;top:610px;width:1.5px;height:32px;background:#474747;"></div>
<div style="position:absolute;left:502.5px;width:600px;text-align:center;top:614.34px;font-size:25px;line-height:25px;color:#f2f2f2;font-weight:normal;white-space:nowrap;-webkit-text-stroke:0.5px #f2f2f2;">M</div>
<div style="position:absolute;left:543.5px;width:600px;text-align:center;top:614.34px;font-size:25px;line-height:25px;color:#f2f2f2;font-weight:normal;white-space:nowrap;-webkit-text-stroke:0.5px #f2f2f2;">S</div>
<div class="btn" style="left:876px;top:610px;width:40px;height:32px;border-radius:8px;background:#5f5f5f;"></div>
<div style="position:absolute;left:596px;width:600px;text-align:center;top:614.34px;font-size:25px;line-height:25px;color:#f2f2f2;font-weight:normal;white-space:nowrap;-webkit-text-stroke:0.5px #f2f2f2;">R</div>
<div style="position:absolute;left:987px;top:613.99px;font-size:26px;line-height:26px;color:#f5f5f5;font-weight:normal;white-space:nowrap;letter-spacing:-0.65px;-webkit-text-stroke:0.6px #f5f5f5;">FILTERED DRUMS</div>
<div style="position:absolute;left:1292px;top:608px;width:256px;height:36px;background:#363636;border-radius:18px;"></div>
<div style="position:absolute;left:1375.75px;top:610px;width:32px;height:32px;border-radius:50%;background:#898989;box-shadow:0 1px 2px rgba(0,0,0,.45);"></div>
<div style="position:absolute;left:572px;top:666px;width:998px;height:74px;background:#5a5a5a;"></div>
<div style="position:absolute;left:572px;top:740px;width:998px;height:2px;background:#464646;"></div>
<div style="position:absolute;left:572px;top:666px;width:40px;height:74px;background:#4e1f47;"></div>
<div style="position:absolute;left:612px;top:666px;width:2px;height:74px;background:#474747;"></div>
<div style="position:absolute;left:292px;width:600px;text-align:center;top:689.99px;font-size:26px;line-height:26px;color:#ffffff;font-weight:normal;white-space:nowrap;-webkit-text-stroke:0.8px #fff;">22</div>
<svg style="position:absolute;left:683px;top:676px;" width="66" height="52" viewBox="0 0 66 52"><g transform="scale(1.0)">
<g stroke="#b9b9b9" stroke-width="1.3" fill="none" stroke-linecap="round">
<path d="M6 9 V34 M6 34 L1 46 M6 34 L12 46 M6 34 L8 40"/>
<path d="M51 12 V35 M51 35 L45 46 M51 35 L58 46 M46 5 L60 17"/>
<path d="M44 26 L40 46 M44 30 L48 45"/>
</g>
<ellipse cx="14" cy="4.5" rx="12" ry="3" fill="#b79a4c" transform="rotate(14 14 4.5)"/>
<ellipse cx="48" cy="4" rx="8.5" ry="2.2" fill="#b79a4c" transform="rotate(-4 48 4)"/>
<ellipse cx="46" cy="12" rx="6" ry="1.6" fill="#b79a4c"/>
<rect x="9" y="15" width="12.5" height="16" rx="1.5" fill="#cf8a4a"/>
<rect x="9" y="15" width="12.5" height="2" fill="#e6e6e6"/>
<rect x="17" y="10" width="11" height="11.5" rx="1.5" fill="#e09a58"/>
<rect x="17" y="10" width="11" height="1.6" fill="#dcdcdc"/>
<rect x="32" y="10" width="10" height="11" rx="1.5" fill="#e09a58"/>
<rect x="32" y="10" width="10" height="1.6" fill="#dcdcdc"/>
<rect x="41" y="18" width="8" height="5" rx="1" fill="#d99048"/>
<rect x="28" y="12" width="4" height="10" fill="#bdbdbd"/>
<circle cx="29.5" cy="35" r="11" fill="#c4c4c4" stroke="#c99a66" stroke-width="2"/>
<circle cx="29.5" cy="34" r="5.5" fill="#a9a9a9"/>
<rect x="28" y="36" width="3" height="5" fill="#444"/>
</g></svg>
<div class="btn" style="left:782px;top:686px;width:82px;height:32px;border-radius:8px;background:#5f5f5f;"></div>
<div style="position:absolute;left:822px;top:686px;width:1.5px;height:32px;background:#474747;"></div>
<div style="position:absolute;left:502.5px;width:600px;text-align:center;top:690.34px;font-size:25px;line-height:25px;color:#f2f2f2;font-weight:normal;white-space:nowrap;-webkit-text-stroke:0.5px #f2f2f2;">M</div>
<div style="position:absolute;left:543.5px;width:600px;text-align:center;top:690.34px;font-size:25px;line-height:25px;color:#f2f2f2;font-weight:normal;white-space:nowrap;-webkit-text-stroke:0.5px #f2f2f2;">S</div>
<div class="btn" style="left:876px;top:686px;width:40px;height:32px;border-radius:8px;background:#5f5f5f;"></div>
<div style="position:absolute;left:596px;width:600px;text-align:center;top:690.34px;font-size:25px;line-height:25px;color:#f2f2f2;font-weight:normal;white-space:nowrap;-webkit-text-stroke:0.5px #f2f2f2;">R</div>
<div class="btn" style="left:928px;top:686px;width:40px;height:32px;border-radius:8px;background:#5f5f5f;"></div>
<svg style="position:absolute;left:931px;top:690px;" width="34" height="24" viewBox="0 0 34 24"><path d="M5 4 V20 C12 20 16 4 29 4 V20 C16 20 12 4 5 4Z" fill="none" stroke="#f2f2f2" stroke-width="2"/></svg>
<div style="position:absolute;left:987px;top:689.99px;font-size:26px;line-height:26px;color:#f5f5f5;font-weight:normal;white-space:nowrap;letter-spacing:-0.65px;-webkit-text-stroke:0.6px #f5f5f5;">CYMBAL ROLL</div>
<div style="position:absolute;left:1292px;top:684px;width:256px;height:36px;background:#363636;border-radius:18px;"></div>
<div style="position:absolute;left:1458px;top:686px;width:32px;height:32px;border-radius:50%;background:#898989;box-shadow:0 1px 2px rgba(0,0,0,.45);"></div>
<div style="position:absolute;left:572px;top:742px;width:998px;height:74px;background:#5a5a5a;"></div>
<div style="position:absolute;left:572px;top:816px;width:998px;height:2px;background:#464646;"></div>
<div style="position:absolute;left:572px;top:742px;width:40px;height:74px;background:#6439a8;"></div>
<div style="position:absolute;left:612px;top:742px;width:2px;height:74px;background:#474747;"></div>
<div style="position:absolute;left:292px;width:600px;text-align:center;top:765.99px;font-size:26px;line-height:26px;color:#ffffff;font-weight:normal;white-space:nowrap;-webkit-text-stroke:0.8px #fff;">23</div>
<div style="position:absolute;left:630px;top:750px;width:134px;height:58px;border-radius:13px;background:#646464;box-shadow:0 1px 2px rgba(0,0,0,.4);"></div>
<svg style="position:absolute;left:640px;top:767px;" width="18" height="24" viewBox="0 0 18 24"><path d="M5 3 L14 12 L5 21" fill="none" stroke="#fff" stroke-width="2.4" stroke-linecap="round" stroke-linejoin="round"/></svg>
<svg style="position:absolute;left:680px;top:742px;" width="70" height="66" viewBox="0 0 70 66"><path d="M26 45 L58 12" stroke="#d9a236" stroke-width="3.4" stroke-linecap="round"/>
<path d="M55 14 L61 8 a2 2 0 0 1 3 3 L58 17Z" fill="#e0a83c"/>
<g fill="#8fa0b0"><circle cx="49" cy="14" r="1"/><circle cx="52" cy="11" r="1"/><circle cx="55" cy="9" r="1"/></g>
<path d="M10 50 C9 45 13 42 18 42 L21 37 C23 33 26 31 29 32 C27 35 26 38 28 41 L32 44 C35 43 36 46 34 48 L27 54 C25 58 22 62 17 62 C12 62 10 56 10 50 Z" fill="#e2d27e"/>
<path d="M19 41 L22 36 C24 33 26 32 28 32 C26 35 25 38 27 41 L33 45 L27 51 L24 55 L20 47 Z" fill="#161616"/>
<g fill="#9aa8b8"><rect x="13" y="55" width="4" height="3" rx="1"/><rect x="20" y="56" width="4" height="3" rx="1"/></g></svg>
<div class="btn" style="left:782px;top:762px;width:82px;height:32px;border-radius:8px;background:#5f5f5f;"></div>
<div style="position:absolute;left:822px;top:762px;width:1.5px;height:32px;background:#474747;"></div>
<div style="position:absolute;left:502.5px;width:600px;text-align:center;top:766.34px;font-size:25px;line-height:25px;color:#f2f2f2;font-weight:normal;white-space:nowrap;-webkit-text-stroke:0.5px #f2f2f2;">M</div>
<div style="position:absolute;left:543.5px;width:600px;text-align:center;top:766.34px;font-size:25px;line-height:25px;color:#f2f2f2;font-weight:normal;white-space:nowrap;-webkit-text-stroke:0.5px #f2f2f2;">S</div>
<div style="position:absolute;left:987px;top:765.99px;font-size:26px;line-height:26px;color:#f5f5f5;font-weight:normal;white-space:nowrap;letter-spacing:-0.65px;-webkit-text-stroke:0.6px #f5f5f5;">CLEAN BASS</div>
<div style="position:absolute;left:1292px;top:760px;width:256px;height:36px;background:#363636;border-radius:18px;"></div>
<div style="position:absolute;left:1458px;top:762px;width:32px;height:32px;border-radius:50%;background:#898989;box-shadow:0 1px 2px rgba(0,0,0,.45);"></div>
<div style="position:absolute;left:572px;top:818px;width:998px;height:74px;background:#5a5a5a;"></div>
<div style="position:absolute;left:572px;top:892px;width:998px;height:2px;background:#464646;"></div>
<div style="position:absolute;left:572px;top:818px;width:40px;height:74px;background:#6439a8;"></div>
<div style="position:absolute;left:612px;top:818px;width:2px;height:74px;background:#474747;"></div>
<div style="position:absolute;left:292px;width:600px;text-align:center;top:841.99px;font-size:26px;line-height:26px;color:#ffffff;font-weight:normal;white-space:nowrap;-webkit-text-stroke:0.8px #fff;">27</div>
<div style="position:absolute;left:630px;top:826px;width:134px;height:58px;border-radius:13px;background:#646464;box-shadow:0 1px 2px rgba(0,0,0,.4);"></div>
<svg style="position:absolute;left:640px;top:843px;" width="18" height="24" viewBox="0 0 18 24"><path d="M5 3 L14 12 L5 21" fill="none" stroke="#fff" stroke-width="2.4" stroke-linecap="round" stroke-linejoin="round"/></svg>
<svg style="position:absolute;left:680px;top:818px;" width="70" height="66" viewBox="0 0 70 66"><path d="M26 45 L58 12" stroke="#d9a236" stroke-width="3.4" stroke-linecap="round"/>
<path d="M55 14 L61 8 a2 2 0 0 1 3 3 L58 17Z" fill="#e0a83c"/>
<g fill="#8fa0b0"><circle cx="49" cy="14" r="1"/><circle cx="52" cy="11" r="1"/><circle cx="55" cy="9" r="1"/></g>
<path d="M10 50 C9 45 13 42 18 42 L21 37 C23 33 26 31 29 32 C27 35 26 38 28 41 L32 44 C35 43 36 46 34 48 L27 54 C25 58 22 62 17 62 C12 62 10 56 10 50 Z" fill="#e2d27e"/>
<path d="M19 41 L22 36 C24 33 26 32 28 32 C26 35 25 38 27 41 L33 45 L27 51 L24 55 L20 47 Z" fill="#161616"/>
<g fill="#9aa8b8"><rect x="13" y="55" width="4" height="3" rx="1"/><rect x="20" y="56" width="4" height="3" rx="1"/></g></svg>
<div class="btn" style="left:782px;top:838px;width:82px;height:32px;border-radius:8px;background:#5f5f5f;"></div>
<div style="position:absolute;left:822px;top:838px;width:1.5px;height:32px;background:#474747;"></div>
<div style="position:absolute;left:502.5px;width:600px;text-align:center;top:842.34px;font-size:25px;line-height:25px;color:#f2f2f2;font-weight:normal;white-space:nowrap;-webkit-text-stroke:0.5px #f2f2f2;">M</div>
<div style="position:absolute;left:543.5px;width:600px;text-align:center;top:842.34px;font-size:25px;line-height:25px;color:#f2f2f2;font-weight:normal;white-space:nowrap;-webkit-text-stroke:0.5px #f2f2f2;">S</div>
<div style="position:absolute;left:987px;top:841.99px;font-size:26px;line-height:26px;color:#f5f5f5;font-weight:normal;white-space:nowrap;letter-spacing:-0.65px;-webkit-text-stroke:0.6px #f5f5f5;">DISTORTED BASS</div>
<div style="position:absolute;left:1292px;top:836px;width:256px;height:36px;background:#363636;border-radius:18px;"></div>
<div style="position:absolute;left:1458px;top:838px;width:32px;height:32px;border-radius:50%;background:#898989;box-shadow:0 1px 2px rgba(0,0,0,.45);"></div>
<div style="position:absolute;left:572px;top:894px;width:998px;height:74px;background:#5a5a5a;"></div>
<div style="position:absolute;left:572px;top:968px;width:998px;height:2px;background:#464646;"></div>
<div style="position:absolute;left:572px;top:894px;width:40px;height:74px;background:#cccb4b;"></div>
<div style="position:absolute;left:612px;top:894px;width:2px;height:74px;background:#474747;"></div>
<div style="position:absolute;left:292px;width:600px;text-align:center;top:917.99px;font-size:26px;line-height:26px;color:#ffffff;font-weight:normal;white-space:nowrap;-webkit-text-stroke:0.8px #fff;">33</div>
<div style="position:absolute;left:630px;top:902px;width:134px;height:58px;border-radius:13px;background:#646464;box-shadow:0 1px 2px rgba(0,0,0,.4);"></div>
<svg style="position:absolute;left:640px;top:919px;" width="18" height="24" viewBox="0 0 18 24"><path d="M5 3 L14 12 L5 21" fill="none" stroke="#fff" stroke-width="2.4" stroke-linecap="round" stroke-linejoin="round"/></svg>
<svg style="position:absolute;left:688px;top:915px;" width="54" height="28" viewBox="0 0 54 28"><rect x="1" y="1" width="50" height="24" rx="1.5" fill="#d9d9d9" stroke="#777" stroke-width="1"/>
<rect x="1" y="22" width="50" height="3" fill="#555"/>
<g fill="#555"><circle cx="9" cy="7" r="2"/><circle cx="17" cy="7" r="2"/><circle cx="25" cy="7" r="2"/><circle cx="42" cy="7" r="2"/></g>
<g fill="#222"><rect x="6" y="13" width="3" height="6"/><rect x="12" y="13" width="3" height="6"/><rect x="18" y="13" width="3" height="6"/><rect x="24" y="13" width="3" height="6"/><rect x="30" y="13" width="3" height="6"/><rect x="36" y="15" width="12" height="3"/></g></svg>
<div class="btn" style="left:782px;top:914px;width:82px;height:32px;border-radius:8px;background:#5f5f5f;"></div>
<div style="position:absolute;left:822px;top:914px;width:1.5px;height:32px;background:#474747;"></div>
<div style="position:absolute;left:502.5px;width:600px;text-align:center;top:918.34px;font-size:25px;line-height:25px;color:#f2f2f2;font-weight:normal;white-space:nowrap;-webkit-text-stroke:0.5px #f2f2f2;">M</div>
<div style="position:absolute;left:543.5px;width:600px;text-align:center;top:918.34px;font-size:25px;line-height:25px;color:#f2f2f2;font-weight:normal;white-space:nowrap;-webkit-text-stroke:0.5px #f2f2f2;">S</div>
<div style="position:absolute;left:987px;top:917.99px;font-size:26px;line-height:26px;color:#f5f5f5;font-weight:normal;white-space:nowrap;letter-spacing:-0.65px;-webkit-text-stroke:0.6px #f5f5f5;">SYNTHS</div>
<div style="position:absolute;left:1292px;top:912px;width:256px;height:36px;background:#363636;border-radius:18px;"></div>
<div style="position:absolute;left:1458px;top:914px;width:32px;height:32px;border-radius:50%;background:#898989;box-shadow:0 1px 2px rgba(0,0,0,.45);"></div>
<div style="position:absolute;left:572px;top:970px;width:998px;height:74px;background:#5a5a5a;"></div>
<div style="position:absolute;left:572px;top:1044px;width:998px;height:2px;background:#464646;"></div>
<div style="position:absolute;left:572px;top:970px;width:40px;height:74px;background:#9727c7;"></div>
<div style="position:absolute;left:612px;top:970px;width:2px;height:74px;background:#474747;"></div>
<div style="position:absolute;left:292px;width:600px;text-align:center;top:993.99px;font-size:26px;line-height:26px;color:#ffffff;font-weight:normal;white-space:nowrap;-webkit-text-stroke:0.8px #fff;">40</div>
<div style="position:absolute;left:630px;top:978px;width:134px;height:58px;border-radius:13px;background:#646464;box-shadow:0 1px 2px rgba(0,0,0,.4);"></div>
<svg style="position:absolute;left:640px;top:995px;" width="18" height="24" viewBox="0 0 18 24"><path d="M5 3 L14 12 L5 21" fill="none" stroke="#fff" stroke-width="2.4" stroke-linecap="round" stroke-linejoin="round"/></svg>
<svg style="position:absolute;left:692px;top:983px;" width="50" height="52" viewBox="0 0 50 52"><path d="M1.2 44 C2 38 6 35 12 34 C15 33.3 17 32 17 29 C13 27 11.5 22 11.5 15 C11.5 7 15.5 2 21.5 2 C28 2 32 6.5 32 15 C32 22 30 27 26 29 C26 32 29 33.5 35 35.5 V44 Z" fill="#d97af2"/>
<path d="M36 29.5 a4.5 4.5 0 0 1 9 0 V33.5 H36 Z" fill="#d97af2"/>
<rect x="38.2" y="27.3" width="4.6" height="4" rx="0.8" fill="#646464"/>
<path d="M36 35.3 H45 V41 L42.5 46.8 H38.5 L36 41 Z" fill="#d97af2"/></svg>
<div class="btn" style="left:782px;top:990px;width:82px;height:32px;border-radius:8px;background:#5f5f5f;"></div>
<div style="position:absolute;left:822px;top:990px;width:1.5px;height:32px;background:#474747;"></div>
<div style="position:absolute;left:502.5px;width:600px;text-align:center;top:994.34px;font-size:25px;line-height:25px;color:#f2f2f2;font-weight:normal;white-space:nowrap;-webkit-text-stroke:0.5px #f2f2f2;">M</div>
<div style="position:absolute;left:543.5px;width:600px;text-align:center;top:994.34px;font-size:25px;line-height:25px;color:#f2f2f2;font-weight:normal;white-space:nowrap;-webkit-text-stroke:0.5px #f2f2f2;">S</div>
<div style="position:absolute;left:987px;top:993.99px;font-size:26px;line-height:26px;color:#f5f5f5;font-weight:normal;white-space:nowrap;letter-spacing:-0.65px;-webkit-text-stroke:0.6px #f5f5f5;">PITCHED VOCAL</div>
<div style="position:absolute;left:1292px;top:988px;width:256px;height:36px;background:#363636;border-radius:18px;"></div>
<div style="position:absolute;left:1458px;top:990px;width:32px;height:32px;border-radius:50%;background:#898989;box-shadow:0 1px 2px rgba(0,0,0,.45);"></div>
<div style="position:absolute;left:572px;top:1046px;width:998px;height:74px;background:#5a5a5a;"></div>
<div style="position:absolute;left:572px;top:1120px;width:998px;height:2px;background:#464646;"></div>
<div style="position:absolute;left:572px;top:1046px;width:40px;height:74px;background:#9727c7;"></div>
<div style="position:absolute;left:612px;top:1046px;width:2px;height:74px;background:#474747;"></div>
<div style="position:absolute;left:292px;width:600px;text-align:center;top:1069.99px;font-size:26px;line-height:26px;color:#ffffff;font-weight:normal;white-space:nowrap;-webkit-text-stroke:0.8px #fff;">43</div>
<div style="position:absolute;left:630px;top:1054px;width:134px;height:58px;border-radius:13px;background:#646464;box-shadow:0 1px 2px rgba(0,0,0,.4);"></div>
<svg style="position:absolute;left:640px;top:1071px;" width="18" height="24" viewBox="0 0 18 24"><path d="M5 3 L14 12 L5 21" fill="none" stroke="#fff" stroke-width="2.4" stroke-linecap="round" stroke-linejoin="round"/></svg>
<svg style="position:absolute;left:692px;top:1059px;" width="50" height="52" viewBox="0 0 50 52"><path d="M1.2 44 C2 38 6 35 12 34 C15 33.3 17 32 17 29 C13 27 11.5 22 11.5 15 C11.5 7 15.5 2 21.5 2 C28 2 32 6.5 32 15 C32 22 30 27 26 29 C26 32 29 33.5 35 35.5 V44 Z" fill="#d97af2"/>
<path d="M36 29.5 a4.5 4.5 0 0 1 9 0 V33.5 H36 Z" fill="#d97af2"/>
<rect x="38.2" y="27.3" width="4.6" height="4" rx="0.8" fill="#646464"/>
<path d="M36 35.3 H45 V41 L42.5 46.8 H38.5 L36 41 Z" fill="#d97af2"/></svg>
<div class="btn" style="left:782px;top:1066px;width:82px;height:32px;border-radius:8px;background:#5f5f5f;"></div>
<div style="position:absolute;left:822px;top:1066px;width:1.5px;height:32px;background:#474747;"></div>
<div style="position:absolute;left:502.5px;width:600px;text-align:center;top:1070.34px;font-size:25px;line-height:25px;color:#f2f2f2;font-weight:normal;white-space:nowrap;-webkit-text-stroke:0.5px #f2f2f2;">M</div>
<div style="position:absolute;left:543.5px;width:600px;text-align:center;top:1070.34px;font-size:25px;line-height:25px;color:#f2f2f2;font-weight:normal;white-space:nowrap;-webkit-text-stroke:0.5px #f2f2f2;">S</div>
<div style="position:absolute;left:987px;top:1069.99px;font-size:26px;line-height:26px;color:#f5f5f5;font-weight:normal;white-space:nowrap;letter-spacing:-0.65px;-webkit-text-stroke:0.6px #f5f5f5;">DOUBLE VOCAL</div>
<div style="position:absolute;left:1292px;top:1064px;width:256px;height:36px;background:#363636;border-radius:18px;"></div>
<div style="position:absolute;left:1458px;top:1066px;width:32px;height:32px;border-radius:50%;background:#898989;box-shadow:0 1px 2px rgba(0,0,0,.45);"></div>
<div style="position:absolute;left:572px;top:1122px;width:998px;height:74px;background:#5a5a5a;"></div>
<div style="position:absolute;left:572px;top:1196px;width:998px;height:2px;background:#464646;"></div>
<div style="position:absolute;left:572px;top:1122px;width:40px;height:74px;background:#9727c7;"></div>
<div style="position:absolute;left:612px;top:1122px;width:2px;height:74px;background:#474747;"></div>
<div style="position:absolute;left:292px;width:600px;text-align:center;top:1145.99px;font-size:26px;line-height:26px;color:#ffffff;font-weight:normal;white-space:nowrap;-webkit-text-stroke:0.8px #fff;">56</div>
<div style="position:absolute;left:630px;top:1130px;width:134px;height:58px;border-radius:13px;background:#646464;box-shadow:0 1px 2px rgba(0,0,0,.4);"></div>
<svg style="position:absolute;left:640px;top:1147px;" width="18" height="24" viewBox="0 0 18 24"><path d="M5 3 L14 12 L5 21" fill="none" stroke="#fff" stroke-width="2.4" stroke-linecap="round" stroke-linejoin="round"/></svg>
<svg style="position:absolute;left:692px;top:1135px;" width="50" height="52" viewBox="0 0 50 52"><path d="M1.2 44 C2 38 6 35 12 34 C15 33.3 17 32 17 29 C13 27 11.5 22 11.5 15 C11.5 7 15.5 2 21.5 2 C28 2 32 6.5 32 15 C32 22 30 27 26 29 C26 32 29 33.5 35 35.5 V44 Z" fill="#d97af2"/>
<path d="M36 29.5 a4.5 4.5 0 0 1 9 0 V33.5 H36 Z" fill="#d97af2"/>
<rect x="38.2" y="27.3" width="4.6" height="4" rx="0.8" fill="#646464"/>
<path d="M36 35.3 H45 V41 L42.5 46.8 H38.5 L36 41 Z" fill="#d97af2"/></svg>
<div class="btn" style="left:782px;top:1142px;width:82px;height:32px;border-radius:8px;background:#5f5f5f;"></div>
<div style="position:absolute;left:822px;top:1142px;width:1.5px;height:32px;background:#474747;"></div>
<div style="position:absolute;left:502.5px;width:600px;text-align:center;top:1146.34px;font-size:25px;line-height:25px;color:#f2f2f2;font-weight:normal;white-space:nowrap;-webkit-text-stroke:0.5px #f2f2f2;">M</div>
<div style="position:absolute;left:543.5px;width:600px;text-align:center;top:1146.34px;font-size:25px;line-height:25px;color:#f2f2f2;font-weight:normal;white-space:nowrap;-webkit-text-stroke:0.5px #f2f2f2;">S</div>
<div style="position:absolute;left:987px;top:1145.99px;font-size:26px;line-height:26px;color:#f5f5f5;font-weight:normal;white-space:nowrap;letter-spacing:-0.65px;-webkit-text-stroke:0.6px #f5f5f5;">BACKING VOCALS</div>
<div style="position:absolute;left:1292px;top:1140px;width:256px;height:36px;background:#363636;border-radius:18px;"></div>
<div style="position:absolute;left:1458px;top:1142px;width:32px;height:32px;border-radius:50%;background:#898989;box-shadow:0 1px 2px rgba(0,0,0,.45);"></div>
<div style="position:absolute;left:572px;top:1198px;width:998px;height:74px;background:#707070;"></div>
<div style="position:absolute;left:572px;top:1272px;width:998px;height:2px;background:#464646;"></div>
<div style="position:absolute;left:572px;top:1198px;width:40px;height:74px;background:#b92ea8;"></div>
<div style="position:absolute;left:612px;top:1198px;width:2px;height:74px;background:#474747;"></div>
<div style="position:absolute;left:292px;width:600px;text-align:center;top:1221.99px;font-size:26px;line-height:26px;color:#ffffff;font-weight:normal;white-space:nowrap;-webkit-text-stroke:0.8px #fff;">87</div>
<div style="position:absolute;left:630px;top:1206px;width:134px;height:58px;border-radius:13px;background:#7c7c7c;box-shadow:0 1px 2px rgba(0,0,0,.4);"></div>
<svg style="position:absolute;left:640px;top:1223px;" width="18" height="24" viewBox="0 0 18 24"><path d="M5 3 L14 12 L5 21" fill="none" stroke="#fff" stroke-width="2.4" stroke-linecap="round" stroke-linejoin="round"/></svg>
<svg style="position:absolute;left:692px;top:1211px;" width="50" height="52" viewBox="0 0 50 52"><path d="M1.2 44 C2 38 6 35 12 34 C15 33.3 17 32 17 29 C13 27 11.5 22 11.5 15 C11.5 7 15.5 2 21.5 2 C28 2 32 6.5 32 15 C32 22 30 27 26 29 C26 32 29 33.5 35 35.5 V44 Z" fill="#b62ea6"/>
<path d="M36 29.5 a4.5 4.5 0 0 1 9 0 V33.5 H36 Z" fill="#b62ea6"/>
<rect x="38.2" y="27.3" width="4.6" height="4" rx="0.8" fill="#7c7c7c"/>
<path d="M36 35.3 H45 V41 L42.5 46.8 H38.5 L36 41 Z" fill="#b62ea6"/></svg>
<div class="btn" style="left:782px;top:1218px;width:82px;height:32px;border-radius:8px;background:#7a7a7a;"></div>
<div style="position:absolute;left:822px;top:1218px;width:1.5px;height:32px;background:#474747;"></div>
<div style="position:absolute;left:502.5px;width:600px;text-align:center;top:1222.34px;font-size:25px;line-height:25px;color:#f2f2f2;font-weight:normal;white-space:nowrap;-webkit-text-stroke:0.5px #f2f2f2;">M</div>
<div style="position:absolute;left:543.5px;width:600px;text-align:center;top:1222.34px;font-size:25px;line-height:25px;color:#f2f2f2;font-weight:normal;white-space:nowrap;-webkit-text-stroke:0.5px #f2f2f2;">S</div>
<div style="position:absolute;left:987px;top:1221.99px;font-size:26px;line-height:26px;color:#f5f5f5;font-weight:normal;white-space:nowrap;letter-spacing:-0.65px;-webkit-text-stroke:0.6px #f5f5f5;">LEAD VOCAL</div>
<div style="position:absolute;left:1292px;top:1216px;width:256px;height:36px;background:#3d3d3d;border-radius:18px;"></div>
<div style="position:absolute;left:1458px;top:1218px;width:32px;height:32px;border-radius:50%;background:#a3a3a3;box-shadow:0 1px 2px rgba(0,0,0,.45);"></div>
<div style="position:absolute;left:1588px;top:438px;width:309px;height:73.5px;box-sizing:border-box;border:2px solid #0c0c0c;border-radius:7px;background:#4f1f4a;overflow:hidden;"><svg style="position:absolute;left:0;top:0" width="308" height="70"><rect x="0.0" y="41" width="18" height="6" fill="#a36ea1"/><rect x="24.0" y="45" width="22" height="6" fill="#a36ea1"/><rect x="54.0" y="43" width="22" height="6" fill="#a36ea1"/><rect x="86.0" y="45" width="22" height="6" fill="#a36ea1"/><rect x="114.0" y="45" width="22" height="6" fill="#a36ea1"/><rect x="144.0" y="41" width="22" height="6" fill="#a36ea1"/><rect x="172.0" y="45" width="22" height="6" fill="#a36ea1"/><rect x="204.0" y="41" width="18" height="6" fill="#a36ea1"/><rect x="228.0" y="45" width="22" height="6" fill="#a36ea1"/><rect x="256.0" y="41" width="10" height="6" fill="#a36ea1"/><rect x="272.0" y="45" width="22" height="6" fill="#a36ea1"/><rect x="302.0" y="41" width="10" height="6" fill="#a36ea1"/><rect x="0.0" y="58" width="12" height="4.5" fill="#a36ea1"/><rect x="12.0" y="55" width="12" height="4.5" fill="#a36ea1"/><rect x="24.0" y="58" width="12" height="4.5" fill="#a36ea1"/><rect x="36.0" y="55" width="12" height="4.5" fill="#a36ea1"/><rect x="48.0" y="58" width="12" height="4.5" fill="#a36ea1"/><rect x="60.0" y="55" width="12" height="4.5" fill="#a36ea1"/><rect x="72.0" y="58" width="12" height="4.5" fill="#a36ea1"/><rect x="84.0" y="55" width="12" height="4.5" fill="#a36ea1"/><rect x="96.0" y="58" width="12" height="4.5" fill="#a36ea1"/><rect x="108.0" y="55" width="12" height="4.5" fill="#a36ea1"/><rect x="120.0" y="58" width="12" height="4.5" fill="#a36ea1"/><rect x="132.0" y="55" width="12" height="4.5" fill="#a36ea1"/><rect x="144.0" y="58" width="12" height="4.5" fill="#a36ea1"/><rect x="156.0" y="55" width="12" height="4.5" fill="#a36ea1"/><rect x="168.0" y="58" width="12" height="4.5" fill="#a36ea1"/><rect x="180.0" y="55" width="12" height="4.5" fill="#a36ea1"/><rect x="192.0" y="58" width="12" height="4.5" fill="#a36ea1"/><rect x="204.0" y="55" width="12" height="4.5" fill="#a36ea1"/><rect x="216.0" y="58" width="12" height="4.5" fill="#a36ea1"/><rect x="228.0" y="55" width="12" height="4.5" fill="#a36ea1"/><rect x="240.0" y="58" width="12" height="4.5" fill="#a36ea1"/><rect x="252.0" y="55" width="12" height="4.5" fill="#a36ea1"/><rect x="264.0" y="58" width="12" height="4.5" fill="#a36ea1"/><rect x="276.0" y="55" width="12" height="4.5" fill="#a36ea1"/><rect x="288.0" y="58" width="12" height="4.5" fill="#a36ea1"/><rect x="300.0" y="55" width="12" height="4.5" fill="#a36ea1"/></svg><div style="position:absolute;left:11px;top:7.38px;font-size:22px;line-height:22px;color:#d9b2d6;white-space:nowrap;-webkit-text-stroke:0.35px #d9b2d6;">LIVE DRUMS</div></div>
<div style="position:absolute;left:1896px;top:438px;width:307px;height:73.5px;box-sizing:border-box;border:2px solid #0c0c0c;border-radius:7px;background:#4f1f4a;overflow:hidden;"><svg style="position:absolute;left:0;top:0" width="306" height="70"><rect x="0.0" y="45" width="10" height="6" fill="#a36ea1"/><rect x="16.0" y="45" width="22" height="6" fill="#a36ea1"/><rect x="48.0" y="45" width="22" height="6" fill="#a36ea1"/><rect x="80.0" y="41" width="18" height="6" fill="#a36ea1"/><rect x="104.0" y="45" width="26" height="6" fill="#a36ea1"/><rect x="138.0" y="41" width="22" height="6" fill="#a36ea1"/><rect x="168.0" y="43" width="26" height="6" fill="#a36ea1"/><rect x="204.0" y="45" width="22" height="6" fill="#a36ea1"/><rect x="232.0" y="43" width="22" height="6" fill="#a36ea1"/><rect x="262.0" y="43" width="22" height="6" fill="#a36ea1"/><rect x="294.0" y="41" width="18" height="6" fill="#a36ea1"/><rect x="0.0" y="58" width="12" height="4.5" fill="#a36ea1"/><rect x="12.0" y="55" width="12" height="4.5" fill="#a36ea1"/><rect x="24.0" y="58" width="12" height="4.5" fill="#a36ea1"/><rect x="36.0" y="55" width="12" height="4.5" fill="#a36ea1"/><rect x="48.0" y="58" width="12" height="4.5" fill="#a36ea1"/><rect x="60.0" y="55" width="12" height="4.5" fill="#a36ea1"/><rect x="72.0" y="58" width="12" height="4.5" fill="#a36ea1"/><rect x="84.0" y="55" width="12" height="4.5" fill="#a36ea1"/><rect x="96.0" y="58" width="12" height="4.5" fill="#a36ea1"/><rect x="108.0" y="55" width="12" height="4.5" fill="#a36ea1"/><rect x="120.0" y="58" width="12" height="4.5" fill="#a36ea1"/><rect x="132.0" y="55" width="12" height="4.5" fill="#a36ea1"/><rect x="144.0" y="58" width="12" height="4.5" fill="#a36ea1"/><rect x="156.0" y="55" width="12" height="4.5" fill="#a36ea1"/><rect x="168.0" y="58" width="12" height="4.5" fill="#a36ea1"/><rect x="180.0" y="55" width="12" height="4.5" fill="#a36ea1"/><rect x="192.0" y="58" width="12" height="4.5" fill="#a36ea1"/><rect x="204.0" y="55" width="12" height="4.5" fill="#a36ea1"/><rect x="216.0" y="58" width="12" height="4.5" fill="#a36ea1"/><rect x="228.0" y="55" width="12" height="4.5" fill="#a36ea1"/><rect x="240.0" y="58" width="12" height="4.5" fill="#a36ea1"/><rect x="252.0" y="55" width="12" height="4.5" fill="#a36ea1"/><rect x="264.0" y="58" width="12" height="4.5" fill="#a36ea1"/><rect x="276.0" y="55" width="12" height="4.5" fill="#a36ea1"/><rect x="288.0" y="58" width="12" height="4.5" fill="#a36ea1"/><rect x="300.0" y="55" width="12" height="4.5" fill="#a36ea1"/></svg><div style="position:absolute;left:11px;top:7.38px;font-size:22px;line-height:22px;color:#d9b2d6;white-space:nowrap;-webkit-text-stroke:0.35px #d9b2d6;">LIVE DRUMS</div></div>
<div style="position:absolute;left:2202px;top:438px;width:269px;height:73.5px;box-sizing:border-box;border:2px solid #0c0c0c;border-radius:7px;background:#4f1f4a;overflow:hidden;"><svg style="position:absolute;left:0;top:0" width="268" height="70"><rect x="2.0" y="46" width="8" height="4.5" fill="#a36ea1"/><rect x="16.0" y="46" width="8" height="4.5" fill="#a36ea1"/><rect x="30.0" y="43" width="8" height="4.5" fill="#a36ea1"/><rect x="44.0" y="46" width="8" height="4.5" fill="#a36ea1"/><rect x="56.0" y="43" width="8" height="4.5" fill="#a36ea1"/><rect x="70.0" y="46" width="6" height="4.5" fill="#a36ea1"/><rect x="84.0" y="43" width="8" height="4.5" fill="#a36ea1"/><rect x="98.0" y="43" width="8" height="4.5" fill="#a36ea1"/><rect x="112.0" y="46" width="6" height="4.5" fill="#a36ea1"/><rect x="126.0" y="46" width="8" height="4.5" fill="#a36ea1"/><rect x="138.0" y="46" width="8" height="4.5" fill="#a36ea1"/><rect x="150.0" y="46" width="8" height="4.5" fill="#a36ea1"/><rect x="162.0" y="46" width="6" height="4.5" fill="#a36ea1"/><rect x="174.0" y="43" width="8" height="4.5" fill="#a36ea1"/><rect x="188.0" y="43" width="8" height="4.5" fill="#a36ea1"/><rect x="200.0" y="43" width="8" height="4.5" fill="#a36ea1"/><rect x="214.0" y="43" width="6" height="4.5" fill="#a36ea1"/><rect x="226.0" y="46" width="6" height="4.5" fill="#a36ea1"/><rect x="238.0" y="43" width="6" height="4.5" fill="#a36ea1"/><rect x="250.0" y="43" width="8" height="4.5" fill="#a36ea1"/><rect x="262.0" y="43" width="8" height="4.5" fill="#a36ea1"/><rect x="2.0" y="57" width="8" height="4.5" fill="#a36ea1"/><rect x="16.0" y="54" width="8" height="4.5" fill="#a36ea1"/><rect x="28.0" y="57" width="8" height="4.5" fill="#a36ea1"/><rect x="40.0" y="57" width="8" height="4.5" fill="#a36ea1"/><rect x="54.0" y="57" width="8" height="4.5" fill="#a36ea1"/><rect x="66.0" y="57" width="8" height="4.5" fill="#a36ea1"/><rect x="80.0" y="57" width="8" height="4.5" fill="#a36ea1"/><rect x="94.0" y="57" width="8" height="4.5" fill="#a36ea1"/><rect x="106.0" y="57" width="8" height="4.5" fill="#a36ea1"/><rect x="120.0" y="54" width="6" height="4.5" fill="#a36ea1"/><rect x="132.0" y="57" width="8" height="4.5" fill="#a36ea1"/><rect x="144.0" y="57" width="8" height="4.5" fill="#a36ea1"/><rect x="156.0" y="54" width="6" height="4.5" fill="#a36ea1"/><rect x="168.0" y="57" width="8" height="4.5" fill="#a36ea1"/><rect x="182.0" y="57" width="8" height="4.5" fill="#a36ea1"/><rect x="194.0" y="57" width="6" height="4.5" fill="#a36ea1"/><rect x="206.0" y="57" width="6" height="4.5" fill="#a36ea1"/><rect x="218.0" y="57" width="6" height="4.5" fill="#a36ea1"/><rect x="230.0" y="57" width="8" height="4.5" fill="#a36ea1"/><rect x="242.0" y="57" width="8" height="4.5" fill="#a36ea1"/><rect x="254.0" y="57" width="8" height="4.5" fill="#a36ea1"/></svg><div style="position:absolute;left:11px;top:7.38px;font-size:22px;line-height:22px;color:#d9b2d6;white-space:nowrap;-webkit-text-stroke:0.35px #d9b2d6;">LIVE DRUMS</div></div>
<div style="position:absolute;left:2470px;top:438px;width:269px;height:73.5px;box-sizing:border-box;border:2px solid #0c0c0c;border-radius:7px;background:#4f1f4a;overflow:hidden;"><svg style="position:absolute;left:0;top:0" width="268" height="70"><rect x="2.0" y="46" width="8" height="4.5" fill="#a36ea1"/><rect x="14.0" y="43" width="8" height="4.5" fill="#a36ea1"/><rect x="26.0" y="46" width="6" height="4.5" fill="#a36ea1"/><rect x="38.0" y="43" width="8" height="4.5" fill="#a36ea1"/><rect x="50.0" y="46" width="6" height="4.5" fill="#a36ea1"/><rect x="64.0" y="46" width="8" height="4.5" fill="#a36ea1"/><rect x="76.0" y="46" width="8" height="4.5" fill="#a36ea1"/><rect x="88.0" y="46" width="8" height="4.5" fill="#a36ea1"/><rect x="100.0" y="46" width="6" height="4.5" fill="#a36ea1"/><rect x="112.0" y="46" width="8" height="4.5" fill="#a36ea1"/><rect x="126.0" y="46" width="6" height="4.5" fill="#a36ea1"/><rect x="140.0" y="46" width="8" height="4.5" fill="#a36ea1"/><rect x="152.0" y="46" width="6" height="4.5" fill="#a36ea1"/><rect x="164.0" y="43" width="8" height="4.5" fill="#a36ea1"/><rect x="176.0" y="46" width="6" height="4.5" fill="#a36ea1"/><rect x="188.0" y="46" width="8" height="4.5" fill="#a36ea1"/><rect x="200.0" y="43" width="8" height="4.5" fill="#a36ea1"/><rect x="214.0" y="46" width="8" height="4.5" fill="#a36ea1"/><rect x="226.0" y="46" width="6" height="4.5" fill="#a36ea1"/><rect x="238.0" y="46" width="6" height="4.5" fill="#a36ea1"/><rect x="250.0" y="46" width="8" height="4.5" fill="#a36ea1"/><rect x="2.0" y="57" width="8" height="4.5" fill="#a36ea1"/><rect x="16.0" y="54" width="8" height="4.5" fill="#a36ea1"/><rect x="28.0" y="57" width="8" height="4.5" fill="#a36ea1"/><rect x="40.0" y="57" width="8" height="4.5" fill="#a36ea1"/><rect x="52.0" y="54" width="8" height="4.5" fill="#a36ea1"/><rect x="64.0" y="57" width="8" height="4.5" fill="#a36ea1"/><rect x="78.0" y="57" width="8" height="4.5" fill="#a36ea1"/><rect x="92.0" y="57" width="8" height="4.5" fill="#a36ea1"/><rect x="104.0" y="57" width="8" height="4.5" fill="#a36ea1"/><rect x="116.0" y="57" width="8" height="4.5" fill="#a36ea1"/><rect x="130.0" y="57" width="6" height="4.5" fill="#a36ea1"/><rect x="142.0" y="57" width="8" height="4.5" fill="#a36ea1"/><rect x="154.0" y="57" width="6" height="4.5" fill="#a36ea1"/><rect x="166.0" y="57" width="8" height="4.5" fill="#a36ea1"/><rect x="180.0" y="57" width="6" height="4.5" fill="#a36ea1"/><rect x="192.0" y="57" width="8" height="4.5" fill="#a36ea1"/><rect x="204.0" y="54" width="8" height="4.5" fill="#a36ea1"/><rect x="218.0" y="57" width="8" height="4.5" fill="#a36ea1"/><rect x="232.0" y="57" width="8" height="4.5" fill="#a36ea1"/><rect x="244.0" y="57" width="8" height="4.5" fill="#a36ea1"/><rect x="256.0" y="57" width="8" height="4.5" fill="#a36ea1"/></svg><div style="position:absolute;left:11px;top:7.38px;font-size:22px;line-height:22px;color:#d9b2d6;white-space:nowrap;-webkit-text-stroke:0.35px #d9b2d6;">LIVE DRUMS</div></div>
<div style="position:absolute;left:2738px;top:438px;width:40px;height:73.5px;box-sizing:border-box;border:2px solid #0c0c0c;border-radius:7px;background:#4f1f4a;overflow:hidden;"><svg style="position:absolute;left:0;top:0" width="39" height="70"><rect x="2.0" y="46" width="8" height="4.5" fill="#a36ea1"/><rect x="14.0" y="46" width="8" height="4.5" fill="#a36ea1"/><rect x="26.0" y="46" width="6" height="4.5" fill="#a36ea1"/><rect x="2.0" y="57" width="8" height="4.5" fill="#a36ea1"/><rect x="14.0" y="54" width="8" height="4.5" fill="#a36ea1"/><rect x="26.0" y="57" width="6" height="4.5" fill="#a36ea1"/></svg><div style="position:absolute;left:11px;top:7.38px;font-size:22px;line-height:22px;color:#d9b2d6;white-space:nowrap;-webkit-text-stroke:0.35px #d9b2d6;">LI</div></div>
<div style="position:absolute;left:3046px;top:438px;width:307px;height:73.5px;box-sizing:border-box;border:2px solid #0c0c0c;border-radius:7px;background:#4f1f4a;overflow:hidden;"><svg style="position:absolute;left:0;top:0" width="306" height="70"><rect x="0.0" y="45" width="26" height="6" fill="#a36ea1"/><rect x="34.0" y="45" width="22" height="6" fill="#a36ea1"/><rect x="62.0" y="41" width="18" height="6" fill="#a36ea1"/><rect x="88.0" y="45" width="22" height="6" fill="#a36ea1"/><rect x="116.0" y="43" width="22" height="6" fill="#a36ea1"/><rect x="144.0" y="41" width="22" height="6" fill="#a36ea1"/><rect x="176.0" y="45" width="10" height="6" fill="#a36ea1"/><rect x="196.0" y="45" width="26" height="6" fill="#a36ea1"/><rect x="232.0" y="45" width="26" height="6" fill="#a36ea1"/><rect x="266.0" y="45" width="22" height="6" fill="#a36ea1"/><rect x="296.0" y="45" width="22" height="6" fill="#a36ea1"/><rect x="0.0" y="58" width="12" height="4.5" fill="#a36ea1"/><rect x="12.0" y="55" width="12" height="4.5" fill="#a36ea1"/><rect x="24.0" y="58" width="12" height="4.5" fill="#a36ea1"/><rect x="36.0" y="55" width="12" height="4.5" fill="#a36ea1"/><rect x="48.0" y="58" width="12" height="4.5" fill="#a36ea1"/><rect x="60.0" y="55" width="12" height="4.5" fill="#a36ea1"/><rect x="72.0" y="58" width="12" height="4.5" fill="#a36ea1"/><rect x="84.0" y="55" width="12" height="4.5" fill="#a36ea1"/><rect x="96.0" y="58" width="12" height="4.5" fill="#a36ea1"/><rect x="108.0" y="55" width="12" height="4.5" fill="#a36ea1"/><rect x="120.0" y="58" width="12" height="4.5" fill="#a36ea1"/><rect x="132.0" y="55" width="12" height="4.5" fill="#a36ea1"/><rect x="144.0" y="58" width="12" height="4.5" fill="#a36ea1"/><rect x="156.0" y="55" width="12" height="4.5" fill="#a36ea1"/><rect x="168.0" y="58" width="12" height="4.5" fill="#a36ea1"/><rect x="180.0" y="55" width="12" height="4.5" fill="#a36ea1"/><rect x="192.0" y="58" width="12" height="4.5" fill="#a36ea1"/><rect x="204.0" y="55" width="12" height="4.5" fill="#a36ea1"/><rect x="216.0" y="58" width="12" height="4.5" fill="#a36ea1"/><rect x="228.0" y="55" width="12" height="4.5" fill="#a36ea1"/><rect x="240.0" y="58" width="12" height="4.5" fill="#a36ea1"/><rect x="252.0" y="55" width="12" height="4.5" fill="#a36ea1"/><rect x="264.0" y="58" width="12" height="4.5" fill="#a36ea1"/><rect x="276.0" y="55" width="12" height="4.5" fill="#a36ea1"/><rect x="288.0" y="58" width="12" height="4.5" fill="#a36ea1"/><rect x="300.0" y="55" width="12" height="4.5" fill="#a36ea1"/></svg><div style="position:absolute;left:11px;top:7.38px;font-size:22px;line-height:22px;color:#d9b2d6;white-space:nowrap;-webkit-text-stroke:0.35px #d9b2d6;">LIVE DRUMS</div></div>
<div style="position:absolute;left:3352px;top:438px;width:238px;height:73.5px;box-sizing:border-box;border:2px solid #0c0c0c;border-radius:7px;background:#4f1f4a;overflow:hidden;"><svg style="position:absolute;left:0;top:0" width="237" height="70"><rect x="2.0" y="46" width="6" height="4.5" fill="#a36ea1"/><rect x="14.0" y="46" width="6" height="4.5" fill="#a36ea1"/><rect x="28.0" y="46" width="8" height="4.5" fill="#a36ea1"/><rect x="42.0" y="46" width="8" height="4.5" fill="#a36ea1"/><rect x="54.0" y="46" width="6" height="4.5" fill="#a36ea1"/><rect x="66.0" y="43" width="6" height="4.5" fill="#a36ea1"/><rect x="78.0" y="46" width="8" height="4.5" fill="#a36ea1"/><rect x="90.0" y="46" width="8" height="4.5" fill="#a36ea1"/><rect x="102.0" y="46" width="8" height="4.5" fill="#a36ea1"/><rect x="116.0" y="46" width="8" height="4.5" fill="#a36ea1"/><rect x="130.0" y="43" width="6" height="4.5" fill="#a36ea1"/><rect x="142.0" y="46" width="8" height="4.5" fill="#a36ea1"/><rect x="154.0" y="46" width="8" height="4.5" fill="#a36ea1"/><rect x="166.0" y="46" width="8" height="4.5" fill="#a36ea1"/><rect x="178.0" y="46" width="6" height="4.5" fill="#a36ea1"/><rect x="192.0" y="46" width="8" height="4.5" fill="#a36ea1"/><rect x="204.0" y="46" width="8" height="4.5" fill="#a36ea1"/><rect x="216.0" y="46" width="8" height="4.5" fill="#a36ea1"/><rect x="230.0" y="43" width="8" height="4.5" fill="#a36ea1"/><rect x="2.0" y="54" width="8" height="4.5" fill="#a36ea1"/><rect x="14.0" y="57" width="6" height="4.5" fill="#a36ea1"/><rect x="28.0" y="57" width="6" height="4.5" fill="#a36ea1"/><rect x="42.0" y="57" width="8" height="4.5" fill="#a36ea1"/><rect x="54.0" y="57" width="8" height="4.5" fill="#a36ea1"/><rect x="66.0" y="57" width="8" height="4.5" fill="#a36ea1"/><rect x="78.0" y="57" width="8" height="4.5" fill="#a36ea1"/><rect x="90.0" y="57" width="8" height="4.5" fill="#a36ea1"/><rect x="102.0" y="54" width="8" height="4.5" fill="#a36ea1"/><rect x="114.0" y="57" width="8" height="4.5" fill="#a36ea1"/><rect x="128.0" y="57" width="8" height="4.5" fill="#a36ea1"/><rect x="142.0" y="57" width="8" height="4.5" fill="#a36ea1"/><rect x="154.0" y="54" width="6" height="4.5" fill="#a36ea1"/><rect x="166.0" y="57" width="8" height="4.5" fill="#a36ea1"/><rect x="180.0" y="57" width="6" height="4.5" fill="#a36ea1"/><rect x="194.0" y="57" width="8" height="4.5" fill="#a36ea1"/><rect x="208.0" y="54" width="8" height="4.5" fill="#a36ea1"/><rect x="222.0" y="54" width="8" height="4.5" fill="#a36ea1"/></svg><div style="position:absolute;left:11px;top:7.38px;font-size:22px;line-height:22px;color:#d9b2d6;white-space:nowrap;-webkit-text-stroke:0.35px #d9b2d6;">LIVE DRUMS</div></div>
<div style="position:absolute;left:1588px;top:514px;width:615px;height:73.5px;box-sizing:border-box;border:2px solid #0c0c0c;border-radius:7px;background:#4f1f4a;overflow:hidden;"><svg style="position:absolute;left:0;top:0" width="614" height="70"><rect x="0" y="54" width="614" height="4" fill="#a36ea1"/></svg><div style="position:absolute;left:11px;top:7.38px;font-size:22px;line-height:22px;color:#d9b2d6;white-space:nowrap;-webkit-text-stroke:0.35px #d9b2d6;">TOM ROLLS/HITS</div></div>
<div style="position:absolute;left:2470px;top:514px;width:269px;height:73.5px;box-sizing:border-box;border:2px solid #0c0c0c;border-radius:7px;background:#4f1f4a;overflow:hidden;"><svg style="position:absolute;left:0;top:0" width="268" height="70"><rect x="0" y="58" width="268" height="4" fill="#a36ea1"/><rect x="133" y="57" width="8" height="6" fill="#4f1f4a"/><rect x="155" y="57" width="8" height="6" fill="#4f1f4a"/><rect x="246" y="57" width="8" height="6" fill="#4f1f4a"/></svg><div style="position:absolute;left:11px;top:7.38px;font-size:22px;line-height:22px;color:#d9b2d6;white-space:nowrap;-webkit-text-stroke:0.35px #d9b2d6;">TOM ROLLS/HITS</div></div>
<div style="position:absolute;left:3046px;top:514px;width:307px;height:73.5px;box-sizing:border-box;border:2px solid #0c0c0c;border-radius:7px;background:#4f1f4a;overflow:hidden;"><svg style="position:absolute;left:0;top:0" width="306" height="70"><rect x="0" y="54" width="306" height="4" fill="#a36ea1"/></svg><div style="position:absolute;left:11px;top:7.38px;font-size:22px;line-height:22px;color:#d9b2d6;white-space:nowrap;-webkit-text-stroke:0.35px #d9b2d6;">TOM ROLLS/HITS</div></div>
<div style="position:absolute;left:3352px;top:514px;width:238px;height:73.5px;box-sizing:border-box;border:2px solid #0c0c0c;border-radius:7px;background:#4f1f4a;overflow:hidden;"><svg style="position:absolute;left:0;top:0" width="237" height="70"><rect x="0" y="58" width="237" height="4" fill="#a36ea1"/></svg><div style="position:absolute;left:11px;top:7.38px;font-size:22px;line-height:22px;color:#d9b2d6;white-space:nowrap;-webkit-text-stroke:0.35px #d9b2d6;">TOM ROLLS/HITS</div></div>
<div style="position:absolute;left:2738px;top:590px;width:309px;height:73.5px;box-sizing:border-box;border:2px solid #0c0c0c;border-radius:7px;background:#4f1f4a;overflow:hidden;"><svg style="position:absolute;left:0;top:0" width="308" height="70"><rect x="0" y="54" width="10" height="4" fill="#a36ea1"/><rect x="76" y="54" width="10" height="4" fill="#a36ea1"/><rect x="153" y="54" width="10" height="4" fill="#a36ea1"/><rect x="230" y="54" width="10" height="4" fill="#a36ea1"/></svg><div style="position:absolute;left:11px;top:7.38px;font-size:22px;line-height:22px;color:#d9b2d6;white-space:nowrap;-webkit-text-stroke:0.35px #d9b2d6;">FILTERED DRUMS</div></div>
<div style="position:absolute;left:2662px;top:666px;width:239px;height:73.5px;box-sizing:border-box;border:2px solid #0c0c0c;border-radius:7px;background:#4f1f4a;overflow:hidden;"><svg style="position:absolute;left:0;top:0" width="238" height="70"><rect x="2" y="51" width="234" height="2" fill="#a36ea1"/><circle cx="191.234375" cy="19" r="8" fill="none" stroke="#d9b2d6" stroke-width="2"/><circle cx="200.234375" cy="19" r="8" fill="none" stroke="#d9b2d6" stroke-width="2"/></svg><div style="position:absolute;left:11px;top:7.38px;font-size:22px;line-height:22px;color:#d9b2d6;white-space:nowrap;-webkit-text-stroke:0.35px #d9b2d6;">CYMBAL ROLL</div></div>
<div style="position:absolute;left:1588px;top:742px;width:334px;height:73.5px;box-sizing:border-box;border:2px solid #0c0c0c;border-radius:7px;background:#532a21;overflow:hidden;"><svg style="position:absolute;left:0;top:0" width="333" height="70"><rect x="0" y="40.9" width="4" height="20.1" fill="#a77b6d"/><rect x="4" y="42.2" width="4" height="17.7" fill="#a77b6d"/><rect x="8" y="42.1" width="4" height="17.8" fill="#a77b6d"/><rect x="12" y="44.8" width="4" height="12.3" fill="#a77b6d"/><rect x="16" y="42.3" width="6" height="17.4" fill="#a77b6d"/><rect x="22" y="41.9" width="4" height="18.2" fill="#a77b6d"/><rect x="26" y="44.2" width="2" height="13.6" fill="#a77b6d"/><rect x="26" y="37.7" width="2" height="26.5" fill="#a77b6d"/><rect x="28" y="42.4" width="8" height="17.2" fill="#a77b6d"/><rect x="36" y="43.6" width="4" height="14.8" fill="#a77b6d"/><rect x="36" y="38.1" width="2" height="25.8" fill="#a77b6d"/><rect x="40" y="42.7" width="3" height="16.7" fill="#a77b6d"/><rect x="43" y="43.3" width="2" height="15.4" fill="#a77b6d"/><rect x="45" y="43.2" width="3" height="15.6" fill="#a77b6d"/><rect x="48" y="43.2" width="2" height="15.6" fill="#a77b6d"/><rect x="50" y="43.7" width="8" height="14.7" fill="#a77b6d"/><rect x="58" y="40.1" width="2" height="21.8" fill="#a77b6d"/><rect x="60" y="43.7" width="2" height="14.6" fill="#a77b6d"/><rect x="62" y="43.8" width="3" height="14.3" fill="#a77b6d"/><rect x="65" y="44.0" width="8" height="14.1" fill="#a77b6d"/><rect x="73" y="41.9" width="2" height="18.3" fill="#a77b6d"/><rect x="75" y="43.8" width="4" height="14.4" fill="#a77b6d"/><rect x="79" y="44.1" width="8" height="13.8" fill="#a77b6d"/><rect x="87" y="45.6" width="4" height="10.8" fill="#a77b6d"/><rect x="91" y="41.3" width="8" height="19.5" fill="#a77b6d"/><rect x="93" y="38.3" width="2" height="25.5" fill="#a77b6d"/><rect x="99" y="42.8" width="8" height="16.4" fill="#a77b6d"/><rect x="101" y="38.7" width="2" height="24.5" fill="#a77b6d"/><rect x="107" y="43.8" width="3" height="14.4" fill="#a77b6d"/><rect x="110" y="46.1" width="4" height="9.7" fill="#a77b6d"/><rect x="114" y="45.2" width="2" height="11.6" fill="#a77b6d"/><rect x="116" y="43.8" width="2" height="14.4" fill="#a77b6d"/><rect x="118" y="43.5" width="8" height="15.0" fill="#a77b6d"/><rect x="126" y="44.4" width="2" height="13.3" fill="#a77b6d"/><rect x="128" y="42.8" width="6" height="16.4" fill="#a77b6d"/><rect x="134" y="41.7" width="4" height="18.6" fill="#a77b6d"/><rect x="138" y="43.0" width="2" height="16.0" fill="#a77b6d"/><rect x="140" y="43.7" width="6" height="14.6" fill="#a77b6d"/><rect x="146" y="42.5" width="4" height="17.0" fill="#a77b6d"/><rect x="150" y="43.5" width="2" height="15.0" fill="#a77b6d"/><rect x="152" y="44.1" width="4" height="13.8" fill="#a77b6d"/><rect x="156" y="44.6" width="2" height="12.8" fill="#a77b6d"/><rect x="158" y="44.9" width="2" height="12.2" fill="#a77b6d"/><rect x="160" y="44.5" width="4" height="13.1" fill="#a77b6d"/><rect x="164" y="41.3" width="4" height="19.5" fill="#a77b6d"/><rect x="168" y="41.6" width="4" height="18.8" fill="#a77b6d"/><rect x="172" y="41.0" width="4" height="19.9" fill="#a77b6d"/><rect x="176" y="44.1" width="2" height="13.7" fill="#a77b6d"/><rect x="177" y="38.5" width="2" height="25.1" fill="#a77b6d"/><rect x="178" y="42.7" width="2" height="16.5" fill="#a77b6d"/><rect x="180" y="44.2" width="6" height="13.6" fill="#a77b6d"/><rect x="186" y="41.9" width="3" height="18.2" fill="#a77b6d"/><rect x="189" y="39.8" width="8" height="22.3" fill="#a77b6d"/><rect x="196" y="37.8" width="2" height="26.4" fill="#a77b6d"/><rect x="197" y="42.6" width="4" height="16.7" fill="#a77b6d"/><rect x="197" y="39.1" width="2" height="23.8" fill="#a77b6d"/><rect x="201" y="43.9" width="6" height="14.1" fill="#a77b6d"/><rect x="207" y="42.1" width="3" height="17.9" fill="#a77b6d"/><rect x="210" y="43.0" width="4" height="16.0" fill="#a77b6d"/><rect x="214" y="43.8" width="4" height="14.4" fill="#a77b6d"/><rect x="218" y="44.9" width="2" height="12.3" fill="#a77b6d"/><rect x="220" y="43.5" width="6" height="15.1" fill="#a77b6d"/><rect x="222" y="38.9" width="2" height="24.1" fill="#a77b6d"/><rect x="226" y="44.4" width="4" height="13.2" fill="#a77b6d"/><rect x="230" y="42.0" width="6" height="17.9" fill="#a77b6d"/><rect x="236" y="43.5" width="4" height="15.0" fill="#a77b6d"/><rect x="240" y="43.5" width="8" height="15.0" fill="#a77b6d"/><rect x="248" y="42.9" width="2" height="16.1" fill="#a77b6d"/><rect x="250" y="40.5" width="4" height="21.1" fill="#a77b6d"/><rect x="250" y="36.8" width="2" height="28.3" fill="#a77b6d"/><rect x="254" y="43.9" width="3" height="14.1" fill="#a77b6d"/><rect x="257" y="42.6" width="2" height="16.8" fill="#a77b6d"/><rect x="259" y="40.8" width="6" height="20.3" fill="#a77b6d"/><rect x="265" y="41.3" width="4" height="19.3" fill="#a77b6d"/><rect x="269" y="43.0" width="4" height="16.1" fill="#a77b6d"/><rect x="273" y="43.2" width="3" height="15.6" fill="#a77b6d"/><rect x="276" y="45.5" width="4" height="11.0" fill="#a77b6d"/><rect x="280" y="41.7" width="2" height="18.7" fill="#a77b6d"/><rect x="282" y="42.5" width="2" height="16.9" fill="#a77b6d"/><rect x="284" y="45.1" width="8" height="11.7" fill="#a77b6d"/><rect x="292" y="44.8" width="8" height="12.5" fill="#a77b6d"/><rect x="299" y="37.9" width="2" height="26.2" fill="#a77b6d"/><rect x="300" y="45.0" width="2" height="12.0" fill="#a77b6d"/><rect x="302" y="43.2" width="6" height="15.7" fill="#a77b6d"/><rect x="308" y="42.2" width="2" height="17.7" fill="#a77b6d"/><rect x="310" y="42.0" width="2" height="18.1" fill="#a77b6d"/><rect x="312" y="43.2" width="4" height="15.7" fill="#a77b6d"/><rect x="316" y="42.9" width="4" height="16.1" fill="#a77b6d"/><rect x="320" y="42.8" width="8" height="16.4" fill="#a77b6d"/><rect x="328" y="42.0" width="2" height="18.1" fill="#a77b6d"/><rect x="330" y="45.2" width="6" height="11.5" fill="#a77b6d"/><circle cx="178.15625" cy="19" r="8.5" fill="none" stroke="#e6cec4" stroke-width="2.2"/></svg><div style="position:absolute;left:11px;top:7.38px;font-size:22px;line-height:22px;color:#e6cec4;white-space:nowrap;-webkit-text-stroke:0.35px #e6cec4;">CLEAN BASS</div></div>
<div style="position:absolute;left:1921px;top:742px;width:191px;height:73.5px;box-sizing:border-box;border:2px solid #0c0c0c;border-radius:7px;background:#532a21;overflow:hidden;"><svg style="position:absolute;left:0;top:0" width="190" height="70"><rect x="0" y="43.8" width="4" height="14.5" fill="#a77b6d"/><rect x="4" y="45.2" width="4" height="11.7" fill="#a77b6d"/><rect x="8" y="43.5" width="8" height="15.1" fill="#a77b6d"/><rect x="16" y="45.7" width="2" height="10.7" fill="#a77b6d"/><rect x="18" y="45.7" width="2" height="10.6" fill="#a77b6d"/><rect x="20" y="44.1" width="2" height="13.9" fill="#a77b6d"/><rect x="22" y="45.7" width="4" height="10.7" fill="#a77b6d"/><rect x="26" y="43.1" width="8" height="15.7" fill="#a77b6d"/><rect x="32" y="36.8" width="2" height="28.3" fill="#a77b6d"/><rect x="34" y="40.7" width="2" height="20.6" fill="#a77b6d"/><rect x="36" y="40.5" width="4" height="20.9" fill="#a77b6d"/><rect x="40" y="42.1" width="4" height="17.8" fill="#a77b6d"/><rect x="44" y="43.2" width="4" height="15.6" fill="#a77b6d"/><rect x="48" y="43.2" width="4" height="15.6" fill="#a77b6d"/><rect x="52" y="44.3" width="8" height="13.4" fill="#a77b6d"/><rect x="60" y="44.7" width="6" height="12.6" fill="#a77b6d"/><rect x="66" y="44.2" width="3" height="13.6" fill="#a77b6d"/><rect x="69" y="45.1" width="4" height="11.7" fill="#a77b6d"/><rect x="73" y="45.6" width="2" height="10.7" fill="#a77b6d"/><rect x="75" y="44.3" width="4" height="13.3" fill="#a77b6d"/><rect x="79" y="44.0" width="2" height="13.9" fill="#a77b6d"/><rect x="80" y="38.0" width="2" height="26.0" fill="#a77b6d"/><rect x="81" y="46.0" width="4" height="9.9" fill="#a77b6d"/><rect x="85" y="44.9" width="2" height="12.3" fill="#a77b6d"/><rect x="87" y="43.1" width="8" height="15.7" fill="#a77b6d"/><rect x="95" y="45.8" width="4" height="10.4" fill="#a77b6d"/><rect x="99" y="45.5" width="4" height="11.0" fill="#a77b6d"/><rect x="103" y="43.7" width="3" height="14.6" fill="#a77b6d"/><rect x="106" y="42.7" width="2" height="16.6" fill="#a77b6d"/><rect x="108" y="43.2" width="4" height="15.5" fill="#a77b6d"/><rect x="112" y="43.5" width="6" height="15.1" fill="#a77b6d"/><rect x="118" y="44.0" width="4" height="13.9" fill="#a77b6d"/><rect x="122" y="41.3" width="6" height="19.4" fill="#a77b6d"/><rect x="128" y="44.8" width="3" height="12.3" fill="#a77b6d"/><rect x="131" y="41.9" width="8" height="18.3" fill="#a77b6d"/><rect x="139" y="42.2" width="2" height="17.7" fill="#a77b6d"/><rect x="139" y="37.5" width="2" height="27.0" fill="#a77b6d"/><rect x="141" y="43.3" width="2" height="15.5" fill="#a77b6d"/><rect x="143" y="40.0" width="2" height="22.1" fill="#a77b6d"/><rect x="145" y="39.9" width="4" height="22.3" fill="#a77b6d"/><rect x="149" y="41.8" width="2" height="18.4" fill="#a77b6d"/><rect x="151" y="42.6" width="8" height="16.8" fill="#a77b6d"/><rect x="159" y="42.0" width="6" height="17.9" fill="#a77b6d"/><rect x="164" y="38.9" width="2" height="24.2" fill="#a77b6d"/><rect x="165" y="40.1" width="2" height="21.9" fill="#a77b6d"/><rect x="167" y="40.7" width="4" height="20.6" fill="#a77b6d"/><rect x="171" y="43.8" width="6" height="14.4" fill="#a77b6d"/><rect x="177" y="42.6" width="6" height="16.7" fill="#a77b6d"/><rect x="183" y="41.6" width="2" height="18.8" fill="#a77b6d"/><rect x="185" y="44.0" width="2" height="13.9" fill="#a77b6d"/><rect x="186" y="38.9" width="2" height="24.1" fill="#a77b6d"/><rect x="187" y="43.8" width="2" height="14.4" fill="#a77b6d"/><rect x="189" y="40.6" width="6" height="20.8" fill="#a77b6d"/></svg><div style="position:absolute;left:11px;top:7.38px;font-size:22px;line-height:22px;color:#e6cec4;white-space:nowrap;-webkit-text-stroke:0.35px #e6cec4;">CLEAN BASS</div></div>
<div style="position:absolute;left:2111px;top:742px;width:53px;height:73.5px;box-sizing:border-box;border:2px solid #0c0c0c;border-radius:7px;background:#532a21;overflow:hidden;"><svg style="position:absolute;left:0;top:0" width="52" height="70"><rect x="0" y="42.2" width="3" height="17.6" fill="#a77b6d"/><rect x="3" y="42.8" width="2" height="16.4" fill="#a77b6d"/><rect x="5" y="44.6" width="6" height="12.7" fill="#a77b6d"/><rect x="11" y="44.7" width="2" height="12.6" fill="#a77b6d"/><rect x="13" y="44.6" width="6" height="12.8" fill="#a77b6d"/><rect x="19" y="41.9" width="2" height="18.3" fill="#a77b6d"/><rect x="21" y="41.3" width="3" height="19.5" fill="#a77b6d"/><rect x="24" y="42.7" width="8" height="16.5" fill="#a77b6d"/><rect x="32" y="39.7" width="8" height="22.7" fill="#a77b6d"/><rect x="40" y="41.3" width="4" height="19.5" fill="#a77b6d"/><rect x="44" y="39.6" width="4" height="22.7" fill="#a77b6d"/><rect x="48" y="39.6" width="4" height="22.8" fill="#a77b6d"/></svg><div style="position:absolute;left:11px;top:7.38px;font-size:22px;line-height:22px;color:#e6cec4;white-space:nowrap;-webkit-text-stroke:0.35px #e6cec4;">CL</div></div>
<div style="position:absolute;left:2163px;top:742px;width:40px;height:73.5px;box-sizing:border-box;border:2px solid #0c0c0c;border-radius:7px;background:#532a21;overflow:hidden;"><svg style="position:absolute;left:0;top:0" width="39" height="70"><rect x="0" y="42.0" width="2" height="18.0" fill="#a77b6d"/><rect x="2" y="44.6" width="2" height="12.8" fill="#a77b6d"/><rect x="4" y="43.9" width="6" height="14.3" fill="#a77b6d"/><rect x="10" y="44.8" width="4" height="12.4" fill="#a77b6d"/><rect x="14" y="44.4" width="3" height="13.1" fill="#a77b6d"/><rect x="17" y="44.8" width="6" height="12.4" fill="#a77b6d"/><rect x="23" y="43.5" width="3" height="14.9" fill="#a77b6d"/><rect x="26" y="45.5" width="3" height="11.0" fill="#a77b6d"/><rect x="29" y="43.0" width="4" height="15.9" fill="#a77b6d"/><rect x="33" y="44.2" width="4" height="13.5" fill="#a77b6d"/><rect x="37" y="44.1" width="4" height="13.9" fill="#a77b6d"/></svg><div style="position:absolute;left:11px;top:7.38px;font-size:22px;line-height:22px;color:#e6cec4;white-space:nowrap;-webkit-text-stroke:0.35px #e6cec4;">C</div></div>
<div style="position:absolute;left:2202px;top:742px;width:498px;height:73.5px;box-sizing:border-box;border:2px solid #0c0c0c;border-radius:7px;background:#532a21;overflow:hidden;"><svg style="position:absolute;left:0;top:0" width="497" height="70"><rect x="0" y="44.7" width="2" height="12.6" fill="#a77b6d"/><rect x="2" y="44.6" width="2" height="12.8" fill="#a77b6d"/><rect x="4" y="45.7" width="8" height="10.5" fill="#a77b6d"/><rect x="12" y="45.7" width="4" height="10.6" fill="#a77b6d"/><rect x="16" y="45.3" width="2" height="11.5" fill="#a77b6d"/><rect x="18" y="43.2" width="3" height="15.6" fill="#a77b6d"/><rect x="21" y="43.3" width="2" height="15.4" fill="#a77b6d"/><rect x="23" y="44.9" width="4" height="12.2" fill="#a77b6d"/><rect x="27" y="44.5" width="6" height="13.0" fill="#a77b6d"/><rect x="33" y="42.5" width="2" height="17.0" fill="#a77b6d"/><rect x="33" y="39.9" width="2" height="22.1" fill="#a77b6d"/><rect x="35" y="42.6" width="4" height="16.8" fill="#a77b6d"/><rect x="39" y="44.9" width="3" height="12.3" fill="#a77b6d"/><rect x="42" y="45.3" width="2" height="11.3" fill="#a77b6d"/><rect x="44" y="42.3" width="4" height="17.3" fill="#a77b6d"/><rect x="48" y="44.0" width="4" height="14.0" fill="#a77b6d"/><rect x="52" y="43.5" width="3" height="14.9" fill="#a77b6d"/><rect x="55" y="44.5" width="4" height="12.9" fill="#a77b6d"/><rect x="57" y="40.1" width="2" height="21.9" fill="#a77b6d"/><rect x="59" y="44.4" width="2" height="13.2" fill="#a77b6d"/><rect x="60" y="39.1" width="2" height="23.9" fill="#a77b6d"/><rect x="61" y="46.2" width="6" height="9.5" fill="#a77b6d"/><rect x="67" y="45.3" width="2" height="11.5" fill="#a77b6d"/><rect x="69" y="43.4" width="4" height="15.2" fill="#a77b6d"/><rect x="73" y="43.1" width="4" height="15.8" fill="#a77b6d"/><rect x="77" y="43.6" width="8" height="14.8" fill="#a77b6d"/><rect x="85" y="46.0" width="6" height="10.0" fill="#a77b6d"/><rect x="91" y="43.8" width="6" height="14.3" fill="#a77b6d"/><rect x="96" y="40.4" width="2" height="21.1" fill="#a77b6d"/><rect x="97" y="42.6" width="4" height="16.7" fill="#a77b6d"/><rect x="101" y="45.4" width="8" height="11.1" fill="#a77b6d"/><rect x="109" y="41.7" width="3" height="18.6" fill="#a77b6d"/><rect x="111" y="40.6" width="2" height="20.9" fill="#a77b6d"/><rect x="112" y="42.1" width="4" height="17.9" fill="#a77b6d"/><rect x="116" y="45.7" width="3" height="10.6" fill="#a77b6d"/><rect x="119" y="45.7" width="2" height="10.6" fill="#a77b6d"/><rect x="121" y="42.3" width="8" height="17.4" fill="#a77b6d"/><rect x="129" y="44.5" width="6" height="13.0" fill="#a77b6d"/><rect x="135" y="44.9" width="2" height="12.3" fill="#a77b6d"/><rect x="137" y="44.1" width="4" height="13.7" fill="#a77b6d"/><rect x="141" y="43.1" width="4" height="15.9" fill="#a77b6d"/><rect x="145" y="43.4" width="8" height="15.1" fill="#a77b6d"/><rect x="153" y="44.4" width="6" height="13.1" fill="#a77b6d"/><rect x="159" y="45.7" width="3" height="10.5" fill="#a77b6d"/><rect x="162" y="42.8" width="4" height="16.3" fill="#a77b6d"/><rect x="166" y="44.6" width="4" height="12.9" fill="#a77b6d"/><rect x="170" y="45.0" width="3" height="12.1" fill="#a77b6d"/><rect x="173" y="46.2" width="4" height="9.7" fill="#a77b6d"/><rect x="177" y="46.3" width="3" height="9.4" fill="#a77b6d"/><rect x="180" y="45.6" width="6" height="10.7" fill="#a77b6d"/><rect x="182" y="40.6" width="2" height="20.7" fill="#a77b6d"/><rect x="186" y="44.2" width="6" height="13.5" fill="#a77b6d"/><rect x="192" y="45.6" width="2" height="10.7" fill="#a77b6d"/><rect x="194" y="44.5" width="8" height="13.0" fill="#a77b6d"/><rect x="202" y="43.9" width="6" height="14.1" fill="#a77b6d"/><rect x="208" y="42.1" width="4" height="17.8" fill="#a77b6d"/><rect x="212" y="44.1" width="4" height="13.8" fill="#a77b6d"/><rect x="216" y="44.5" width="4" height="13.1" fill="#a77b6d"/><rect x="220" y="43.9" width="2" height="14.2" fill="#a77b6d"/><rect x="222" y="41.3" width="2" height="19.3" fill="#a77b6d"/><rect x="224" y="44.2" width="4" height="13.6" fill="#a77b6d"/><rect x="228" y="43.9" width="4" height="14.3" fill="#a77b6d"/><rect x="232" y="43.4" width="4" height="15.2" fill="#a77b6d"/><rect x="236" y="43.6" width="6" height="14.8" fill="#a77b6d"/><rect x="242" y="43.3" width="6" height="15.3" fill="#a77b6d"/><rect x="248" y="43.8" width="2" height="14.4" fill="#a77b6d"/><rect x="250" y="42.9" width="2" height="16.2" fill="#a77b6d"/><rect x="252" y="44.4" width="8" height="13.1" fill="#a77b6d"/><rect x="260" y="45.0" width="3" height="12.0" fill="#a77b6d"/><rect x="263" y="45.2" width="6" height="11.5" fill="#a77b6d"/><rect x="269" y="44.0" width="3" height="14.0" fill="#a77b6d"/><rect x="272" y="44.5" width="2" height="12.9" fill="#a77b6d"/><rect x="274" y="44.5" width="2" height="13.1" fill="#a77b6d"/><rect x="276" y="44.8" width="4" height="12.4" fill="#a77b6d"/><rect x="280" y="44.6" width="6" height="12.8" fill="#a77b6d"/><rect x="286" y="45.3" width="8" height="11.4" fill="#a77b6d"/><rect x="294" y="43.9" width="3" height="14.2" fill="#a77b6d"/><rect x="297" y="43.4" width="2" height="15.1" fill="#a77b6d"/><rect x="299" y="43.3" width="6" height="15.4" fill="#a77b6d"/><rect x="304" y="39.9" width="2" height="22.1" fill="#a77b6d"/><rect x="305" y="45.3" width="3" height="11.4" fill="#a77b6d"/><rect x="308" y="42.3" width="4" height="17.3" fill="#a77b6d"/><rect x="312" y="44.8" width="4" height="12.3" fill="#a77b6d"/><rect x="316" y="42.3" width="6" height="17.5" fill="#a77b6d"/><rect x="322" y="42.2" width="4" height="17.5" fill="#a77b6d"/><rect x="326" y="43.8" width="4" height="14.5" fill="#a77b6d"/><rect x="330" y="45.2" width="2" height="11.7" fill="#a77b6d"/><rect x="332" y="44.6" width="4" height="12.9" fill="#a77b6d"/><rect x="336" y="44.8" width="3" height="12.4" fill="#a77b6d"/><rect x="339" y="43.4" width="4" height="15.2" fill="#a77b6d"/><rect x="343" y="43.7" width="6" height="14.6" fill="#a77b6d"/><rect x="349" y="45.2" width="2" height="11.6" fill="#a77b6d"/><rect x="351" y="45.5" width="2" height="11.0" fill="#a77b6d"/><rect x="353" y="43.9" width="4" height="14.3" fill="#a77b6d"/><rect x="357" y="42.6" width="4" height="16.8" fill="#a77b6d"/><rect x="358" y="41.0" width="2" height="20.0" fill="#a77b6d"/><rect x="361" y="41.8" width="4" height="18.4" fill="#a77b6d"/><rect x="365" y="45.5" width="2" height="11.1" fill="#a77b6d"/><rect x="366" y="39.4" width="2" height="23.3" fill="#a77b6d"/><rect x="367" y="45.4" width="4" height="11.2" fill="#a77b6d"/><rect x="371" y="45.2" width="4" height="11.6" fill="#a77b6d"/><rect x="375" y="41.6" width="6" height="18.7" fill="#a77b6d"/><rect x="381" y="45.3" width="6" height="11.4" fill="#a77b6d"/><rect x="387" y="42.3" width="4" height="17.4" fill="#a77b6d"/><rect x="391" y="44.2" width="3" height="13.6" fill="#a77b6d"/><rect x="394" y="45.0" width="6" height="12.0" fill="#a77b6d"/><rect x="400" y="44.8" width="2" height="12.4" fill="#a77b6d"/><rect x="402" y="46.4" width="4" height="9.2" fill="#a77b6d"/><rect x="406" y="43.8" width="2" height="14.3" fill="#a77b6d"/><rect x="408" y="46.0" width="4" height="9.9" fill="#a77b6d"/><rect x="412" y="46.1" width="2" height="9.9" fill="#a77b6d"/><rect x="414" y="45.7" width="2" height="10.7" fill="#a77b6d"/><rect x="416" y="44.4" width="4" height="13.2" fill="#a77b6d"/><rect x="420" y="43.3" width="6" height="15.3" fill="#a77b6d"/><rect x="426" y="39.2" width="2" height="23.7" fill="#a77b6d"/><rect x="426" y="44.5" width="3" height="13.0" fill="#a77b6d"/><rect x="429" y="44.3" width="6" height="13.4" fill="#a77b6d"/><rect x="435" y="45.3" width="6" height="11.3" fill="#a77b6d"/><rect x="441" y="44.8" width="3" height="12.4" fill="#a77b6d"/><rect x="444" y="41.8" width="6" height="18.4" fill="#a77b6d"/><rect x="450" y="42.0" width="4" height="18.0" fill="#a77b6d"/><rect x="454" y="43.4" width="2" height="15.3" fill="#a77b6d"/><rect x="456" y="46.2" width="4" height="9.5" fill="#a77b6d"/><rect x="460" y="45.3" width="2" height="11.4" fill="#a77b6d"/><rect x="462" y="44.0" width="8" height="14.0" fill="#a77b6d"/><rect x="470" y="44.6" width="6" height="12.8" fill="#a77b6d"/><rect x="476" y="45.7" width="2" height="10.7" fill="#a77b6d"/><rect x="478" y="44.8" width="4" height="12.4" fill="#a77b6d"/><rect x="482" y="43.4" width="8" height="15.2" fill="#a77b6d"/><rect x="490" y="45.6" width="6" height="10.9" fill="#a77b6d"/><rect x="496" y="45.7" width="2" height="10.6" fill="#a77b6d"/><circle cx="178.15625" cy="19" r="8.5" fill="none" stroke="#e6cec4" stroke-width="2.2"/></svg><div style="position:absolute;left:11px;top:7.38px;font-size:22px;line-height:22px;color:#e6cec4;white-space:nowrap;-webkit-text-stroke:0.35px #e6cec4;">CLEAN BASS</div></div>
<div style="position:absolute;left:2699px;top:742px;width:40px;height:73.5px;box-sizing:border-box;border:2px solid #0c0c0c;border-radius:7px;background:#532a21;overflow:hidden;"><svg style="position:absolute;left:0;top:0" width="39" height="70"><rect x="0" y="44.3" width="3" height="13.3" fill="#a77b6d"/><rect x="3" y="43.0" width="2" height="16.0" fill="#a77b6d"/><rect x="5" y="45.0" width="6" height="12.0" fill="#a77b6d"/><rect x="11" y="43.9" width="6" height="14.2" fill="#a77b6d"/><rect x="17" y="44.4" width="8" height="13.3" fill="#a77b6d"/><rect x="19" y="37.2" width="2" height="27.6" fill="#a77b6d"/><rect x="25" y="44.6" width="6" height="12.9" fill="#a77b6d"/><rect x="31" y="45.7" width="6" height="10.7" fill="#a77b6d"/><rect x="37" y="46.2" width="3" height="9.7" fill="#a77b6d"/></svg><div style="position:absolute;left:11px;top:7.38px;font-size:22px;line-height:22px;color:#e6cec4;white-space:nowrap;-webkit-text-stroke:0.35px #e6cec4;">C</div></div>
<div style="position:absolute;left:2806px;top:742px;width:575px;height:73.5px;box-sizing:border-box;border:2px solid #0c0c0c;border-radius:7px;background:#532a21;overflow:hidden;"><svg style="position:absolute;left:0;top:0" width="574" height="70"><rect x="240" y="36" width="334" height="8" fill="#43211a"/><rect x="0" y="54" width="534" height="8" fill="#9b7366"/></svg><div style="position:absolute;left:11px;top:7.38px;font-size:22px;line-height:22px;color:#e6cec4;white-space:nowrap;-webkit-text-stroke:0.35px #e6cec4;">CLEAN BASS</div></div>
<div style="position:absolute;left:3380px;top:742px;width:210px;height:73.5px;box-sizing:border-box;border:2px solid #0c0c0c;border-radius:7px;background:#532a21;overflow:hidden;"><svg style="position:absolute;left:0;top:0" width="209" height="70"><rect x="0" y="44.4" width="4" height="13.3" fill="#a77b6d"/><rect x="4" y="42.1" width="2" height="17.8" fill="#a77b6d"/><rect x="6" y="43.3" width="2" height="15.4" fill="#a77b6d"/><rect x="8" y="42.6" width="4" height="16.8" fill="#a77b6d"/><rect x="12" y="41.1" width="8" height="19.7" fill="#a77b6d"/><rect x="20" y="41.8" width="4" height="18.4" fill="#a77b6d"/><rect x="24" y="42.2" width="2" height="17.6" fill="#a77b6d"/><rect x="26" y="42.8" width="6" height="16.4" fill="#a77b6d"/><rect x="32" y="44.2" width="6" height="13.5" fill="#a77b6d"/><rect x="38" y="42.0" width="8" height="18.0" fill="#a77b6d"/><rect x="46" y="44.1" width="8" height="13.8" fill="#a77b6d"/><rect x="54" y="46.0" width="4" height="9.9" fill="#a77b6d"/><rect x="58" y="44.8" width="3" height="12.4" fill="#a77b6d"/><rect x="61" y="44.9" width="2" height="12.1" fill="#a77b6d"/><rect x="63" y="44.4" width="2" height="13.2" fill="#a77b6d"/><rect x="65" y="43.4" width="8" height="15.1" fill="#a77b6d"/><rect x="73" y="45.6" width="4" height="10.8" fill="#a77b6d"/><rect x="77" y="45.2" width="3" height="11.6" fill="#a77b6d"/><rect x="80" y="44.7" width="4" height="12.7" fill="#a77b6d"/><rect x="82" y="39.3" width="2" height="23.5" fill="#a77b6d"/><rect x="84" y="44.0" width="6" height="13.9" fill="#a77b6d"/><rect x="90" y="43.9" width="3" height="14.3" fill="#a77b6d"/><rect x="93" y="44.5" width="4" height="13.0" fill="#a77b6d"/><rect x="97" y="43.2" width="4" height="15.7" fill="#a77b6d"/><rect x="101" y="45.8" width="8" height="10.5" fill="#a77b6d"/><rect x="109" y="42.8" width="2" height="16.3" fill="#a77b6d"/><rect x="111" y="38.5" width="2" height="25.0" fill="#a77b6d"/><rect x="111" y="45.5" width="3" height="11.0" fill="#a77b6d"/><rect x="114" y="44.1" width="2" height="13.9" fill="#a77b6d"/><rect x="116" y="43.1" width="4" height="15.8" fill="#a77b6d"/><rect x="120" y="42.1" width="2" height="17.8" fill="#a77b6d"/><rect x="122" y="43.5" width="8" height="15.0" fill="#a77b6d"/><rect x="130" y="44.8" width="4" height="12.5" fill="#a77b6d"/><rect x="134" y="41.9" width="6" height="18.2" fill="#a77b6d"/><rect x="140" y="42.5" width="2" height="17.0" fill="#a77b6d"/><rect x="142" y="43.9" width="4" height="14.2" fill="#a77b6d"/><rect x="146" y="43.6" width="4" height="14.9" fill="#a77b6d"/><rect x="150" y="43.6" width="2" height="14.9" fill="#a77b6d"/><rect x="152" y="42.8" width="3" height="16.4" fill="#a77b6d"/><rect x="155" y="44.4" width="4" height="13.2" fill="#a77b6d"/><rect x="159" y="43.2" width="4" height="15.6" fill="#a77b6d"/><rect x="163" y="44.3" width="4" height="13.3" fill="#a77b6d"/><rect x="167" y="44.6" width="4" height="12.9" fill="#a77b6d"/><rect x="171" y="43.0" width="3" height="15.9" fill="#a77b6d"/><rect x="174" y="45.3" width="4" height="11.4" fill="#a77b6d"/><rect x="174" y="38.0" width="2" height="26.1" fill="#a77b6d"/><rect x="178" y="46.1" width="6" height="9.9" fill="#a77b6d"/><rect x="184" y="42.7" width="3" height="16.6" fill="#a77b6d"/><rect x="184" y="38.1" width="2" height="25.8" fill="#a77b6d"/><rect x="187" y="45.0" width="8" height="12.0" fill="#a77b6d"/><rect x="195" y="45.6" width="8" height="10.9" fill="#a77b6d"/><rect x="203" y="45.2" width="6" height="11.5" fill="#a77b6d"/></svg><div style="position:absolute;left:11px;top:7.38px;font-size:22px;line-height:22px;color:#e6cec4;white-space:nowrap;-webkit-text-stroke:0.35px #e6cec4;">CLEAN BASS</div></div>
<div style="position:absolute;left:1588px;top:818px;width:615px;height:73.5px;box-sizing:border-box;border:2px solid #0c0c0c;border-radius:7px;background:#532a21;overflow:hidden;"><svg style="position:absolute;left:0;top:0" width="614" height="70"><rect x="0" y="34" width="614" height="13" fill="#45221b"/><rect x="0" y="52" width="614" height="16" fill="#3e1d17"/><rect x="333" y="34" width="1.5" height="13" fill="#5a2e24"/><rect x="523" y="34" width="1.5" height="13" fill="#5a2e24"/><rect x="574" y="34" width="1.5" height="13" fill="#5a2e24"/><rect x="27" y="52" width="1.5" height="16" fill="#5a2e24"/><rect x="214" y="52" width="1.5" height="16" fill="#5a2e24"/><rect x="268" y="52" width="1.5" height="16" fill="#5a2e24"/><rect x="306" y="52" width="1.5" height="16" fill="#5a2e24"/></svg><div style="position:absolute;left:11px;top:7.38px;font-size:22px;line-height:22px;color:#e6cec4;white-space:nowrap;-webkit-text-stroke:0.35px #e6cec4;">DISTORTED BASS</div></div>
<div style="position:absolute;left:2202px;top:818px;width:498px;height:73.5px;box-sizing:border-box;border:2px solid #0c0c0c;border-radius:7px;background:#532a21;overflow:hidden;"><svg style="position:absolute;left:0;top:0" width="497" height="70"><rect x="0" y="45.0" width="2" height="12.0" fill="#a77b6d"/><rect x="2" y="44.3" width="8" height="13.4" fill="#a77b6d"/><rect x="10" y="45.6" width="4" height="10.8" fill="#a77b6d"/><rect x="14" y="45.4" width="2" height="11.1" fill="#a77b6d"/><rect x="14" y="39.1" width="2" height="23.9" fill="#a77b6d"/><rect x="16" y="44.2" width="6" height="13.5" fill="#a77b6d"/><rect x="22" y="46.9" width="4" height="8.2" fill="#a77b6d"/><rect x="26" y="44.6" width="4" height="12.7" fill="#a77b6d"/><rect x="30" y="44.8" width="2" height="12.5" fill="#a77b6d"/><rect x="32" y="45.5" width="2" height="10.9" fill="#a77b6d"/><rect x="34" y="45.2" width="4" height="11.6" fill="#a77b6d"/><rect x="38" y="44.9" width="8" height="12.3" fill="#a77b6d"/><rect x="46" y="44.1" width="8" height="13.8" fill="#a77b6d"/><rect x="54" y="45.7" width="4" height="10.6" fill="#a77b6d"/><rect x="58" y="44.7" width="4" height="12.6" fill="#a77b6d"/><rect x="62" y="44.2" width="4" height="13.6" fill="#a77b6d"/><rect x="66" y="44.0" width="4" height="13.9" fill="#a77b6d"/><rect x="70" y="44.0" width="8" height="14.1" fill="#a77b6d"/><rect x="78" y="46.9" width="4" height="8.2" fill="#a77b6d"/><rect x="82" y="45.4" width="4" height="11.3" fill="#a77b6d"/><rect x="86" y="45.2" width="4" height="11.6" fill="#a77b6d"/><rect x="90" y="45.4" width="8" height="11.2" fill="#a77b6d"/><rect x="98" y="46.4" width="3" height="9.2" fill="#a77b6d"/><rect x="101" y="45.3" width="2" height="11.4" fill="#a77b6d"/><rect x="103" y="44.3" width="6" height="13.4" fill="#a77b6d"/><rect x="109" y="43.6" width="2" height="14.7" fill="#a77b6d"/><rect x="111" y="43.3" width="4" height="15.3" fill="#a77b6d"/><rect x="115" y="46.1" width="2" height="9.8" fill="#a77b6d"/><rect x="117" y="45.8" width="8" height="10.4" fill="#a77b6d"/><rect x="125" y="45.3" width="8" height="11.3" fill="#a77b6d"/><rect x="133" y="43.5" width="2" height="15.0" fill="#a77b6d"/><rect x="135" y="42.9" width="2" height="16.1" fill="#a77b6d"/><rect x="137" y="44.0" width="3" height="13.9" fill="#a77b6d"/><rect x="140" y="46.3" width="4" height="9.4" fill="#a77b6d"/><rect x="144" y="46.1" width="8" height="9.9" fill="#a77b6d"/><rect x="152" y="44.5" width="4" height="13.0" fill="#a77b6d"/><rect x="156" y="46.5" width="4" height="9.0" fill="#a77b6d"/><rect x="160" y="43.6" width="4" height="14.9" fill="#a77b6d"/><rect x="164" y="40.4" width="2" height="21.2" fill="#a77b6d"/><rect x="164" y="44.1" width="2" height="13.8" fill="#a77b6d"/><rect x="166" y="42.7" width="4" height="16.5" fill="#a77b6d"/><rect x="170" y="46.1" width="2" height="9.8" fill="#a77b6d"/><rect x="171" y="39.4" width="2" height="23.3" fill="#a77b6d"/><rect x="172" y="43.4" width="2" height="15.2" fill="#a77b6d"/><rect x="174" y="43.8" width="4" height="14.3" fill="#a77b6d"/><rect x="178" y="45.2" width="4" height="11.5" fill="#a77b6d"/><rect x="182" y="42.5" width="6" height="17.0" fill="#a77b6d"/><rect x="188" y="42.3" width="4" height="17.5" fill="#a77b6d"/><rect x="192" y="42.1" width="2" height="17.7" fill="#a77b6d"/><rect x="194" y="43.4" width="4" height="15.2" fill="#a77b6d"/><rect x="198" y="43.1" width="6" height="15.9" fill="#a77b6d"/><rect x="204" y="42.9" width="2" height="16.2" fill="#a77b6d"/><rect x="206" y="43.8" width="4" height="14.3" fill="#a77b6d"/><rect x="210" y="43.6" width="4" height="14.8" fill="#a77b6d"/><rect x="214" y="43.2" width="4" height="15.6" fill="#a77b6d"/><rect x="218" y="44.1" width="4" height="13.8" fill="#a77b6d"/><rect x="222" y="45.4" width="2" height="11.2" fill="#a77b6d"/><rect x="224" y="43.6" width="2" height="14.9" fill="#a77b6d"/><rect x="226" y="43.9" width="8" height="14.3" fill="#a77b6d"/><rect x="234" y="42.6" width="2" height="16.9" fill="#a77b6d"/><rect x="236" y="44.0" width="4" height="14.0" fill="#a77b6d"/><rect x="240" y="45.3" width="2" height="11.4" fill="#a77b6d"/><rect x="242" y="42.5" width="4" height="17.1" fill="#a77b6d"/><rect x="246" y="44.3" width="2" height="13.4" fill="#a77b6d"/><rect x="248" y="44.4" width="6" height="13.2" fill="#a77b6d"/><rect x="254" y="45.2" width="6" height="11.5" fill="#a77b6d"/><rect x="260" y="43.0" width="6" height="16.0" fill="#a77b6d"/><rect x="266" y="44.4" width="6" height="13.2" fill="#a77b6d"/><rect x="272" y="43.2" width="4" height="15.7" fill="#a77b6d"/><rect x="276" y="45.5" width="6" height="11.1" fill="#a77b6d"/><rect x="282" y="42.5" width="3" height="17.0" fill="#a77b6d"/><rect x="283" y="40.9" width="2" height="20.1" fill="#a77b6d"/><rect x="285" y="43.9" width="3" height="14.1" fill="#a77b6d"/><rect x="288" y="44.8" width="2" height="12.4" fill="#a77b6d"/><rect x="290" y="43.1" width="6" height="15.7" fill="#a77b6d"/><rect x="296" y="46.2" width="3" height="9.7" fill="#a77b6d"/><rect x="299" y="42.0" width="8" height="18.0" fill="#a77b6d"/><rect x="307" y="44.4" width="2" height="13.3" fill="#a77b6d"/><rect x="309" y="43.8" width="4" height="14.5" fill="#a77b6d"/><rect x="313" y="42.7" width="3" height="16.6" fill="#a77b6d"/><rect x="316" y="42.2" width="2" height="17.6" fill="#a77b6d"/><rect x="318" y="39.0" width="2" height="23.9" fill="#a77b6d"/><rect x="318" y="45.8" width="6" height="10.4" fill="#a77b6d"/><rect x="324" y="43.3" width="4" height="15.5" fill="#a77b6d"/><rect x="328" y="44.9" width="2" height="12.2" fill="#a77b6d"/><rect x="330" y="41.9" width="2" height="18.3" fill="#a77b6d"/><rect x="332" y="41.7" width="2" height="18.6" fill="#a77b6d"/><rect x="334" y="45.4" width="8" height="11.2" fill="#a77b6d"/><rect x="342" y="44.4" width="4" height="13.1" fill="#a77b6d"/><rect x="346" y="42.4" width="4" height="17.1" fill="#a77b6d"/><rect x="350" y="40.9" width="2" height="20.1" fill="#a77b6d"/><rect x="350" y="42.4" width="4" height="17.2" fill="#a77b6d"/><rect x="354" y="44.1" width="2" height="13.9" fill="#a77b6d"/><rect x="356" y="43.9" width="4" height="14.1" fill="#a77b6d"/><rect x="360" y="45.7" width="3" height="10.6" fill="#a77b6d"/><rect x="363" y="42.8" width="6" height="16.5" fill="#a77b6d"/><rect x="363" y="40.7" width="2" height="20.6" fill="#a77b6d"/><rect x="369" y="45.1" width="2" height="11.8" fill="#a77b6d"/><rect x="371" y="44.2" width="2" height="13.6" fill="#a77b6d"/><rect x="373" y="45.5" width="8" height="11.0" fill="#a77b6d"/><rect x="381" y="44.5" width="3" height="13.0" fill="#a77b6d"/><rect x="384" y="43.7" width="6" height="14.5" fill="#a77b6d"/><rect x="390" y="45.7" width="2" height="10.6" fill="#a77b6d"/><rect x="392" y="43.1" width="4" height="15.8" fill="#a77b6d"/><rect x="394" y="40.0" width="2" height="22.0" fill="#a77b6d"/><rect x="396" y="43.7" width="2" height="14.7" fill="#a77b6d"/><rect x="397" y="39.6" width="2" height="22.8" fill="#a77b6d"/><rect x="398" y="42.8" width="2" height="16.4" fill="#a77b6d"/><rect x="400" y="41.4" width="4" height="19.1" fill="#a77b6d"/><rect x="404" y="42.2" width="4" height="17.6" fill="#a77b6d"/><rect x="406" y="40.7" width="2" height="20.6" fill="#a77b6d"/><rect x="408" y="42.3" width="3" height="17.3" fill="#a77b6d"/><rect x="411" y="42.2" width="2" height="17.7" fill="#a77b6d"/><rect x="413" y="42.7" width="4" height="16.5" fill="#a77b6d"/><rect x="417" y="43.7" width="8" height="14.7" fill="#a77b6d"/><rect x="425" y="44.8" width="2" height="12.5" fill="#a77b6d"/><rect x="427" y="45.0" width="6" height="12.0" fill="#a77b6d"/><rect x="433" y="42.0" width="2" height="18.1" fill="#a77b6d"/><rect x="435" y="42.4" width="6" height="17.2" fill="#a77b6d"/><rect x="441" y="41.8" width="4" height="18.5" fill="#a77b6d"/><rect x="445" y="43.4" width="2" height="15.2" fill="#a77b6d"/><rect x="447" y="42.5" width="4" height="17.0" fill="#a77b6d"/><rect x="451" y="42.9" width="3" height="16.3" fill="#a77b6d"/><rect x="454" y="44.4" width="4" height="13.2" fill="#a77b6d"/><rect x="458" y="44.6" width="2" height="12.7" fill="#a77b6d"/><rect x="460" y="42.6" width="3" height="16.7" fill="#a77b6d"/><rect x="463" y="46.0" width="4" height="10.1" fill="#a77b6d"/><rect x="467" y="43.8" width="8" height="14.4" fill="#a77b6d"/><rect x="475" y="42.7" width="2" height="16.6" fill="#a77b6d"/><rect x="477" y="45.8" width="8" height="10.4" fill="#a77b6d"/><rect x="485" y="45.4" width="8" height="11.2" fill="#a77b6d"/><rect x="493" y="44.2" width="4" height="13.5" fill="#a77b6d"/><circle cx="231.125" cy="19" r="8.5" fill="none" stroke="#e6cec4" stroke-width="2.2"/></svg><div style="position:absolute;left:11px;top:7.38px;font-size:22px;line-height:22px;color:#e6cec4;white-space:nowrap;-webkit-text-stroke:0.35px #e6cec4;">DISTORTED BASS</div></div>
<div style="position:absolute;left:2699px;top:818px;width:40px;height:73.5px;box-sizing:border-box;border:2px solid #0c0c0c;border-radius:7px;background:#532a21;overflow:hidden;"><svg style="position:absolute;left:0;top:0" width="39" height="70"><rect x="0" y="43.5" width="2" height="15.0" fill="#a77b6d"/><rect x="2" y="44.2" width="6" height="13.6" fill="#a77b6d"/><rect x="8" y="43.1" width="2" height="15.7" fill="#a77b6d"/><rect x="10" y="44.5" width="4" height="12.9" fill="#a77b6d"/><rect x="14" y="45.9" width="4" height="10.1" fill="#a77b6d"/><rect x="18" y="45.0" width="4" height="12.0" fill="#a77b6d"/><rect x="22" y="43.0" width="2" height="16.0" fill="#a77b6d"/><rect x="24" y="45.3" width="4" height="11.4" fill="#a77b6d"/><rect x="28" y="44.5" width="2" height="13.0" fill="#a77b6d"/><rect x="30" y="44.6" width="6" height="12.8" fill="#a77b6d"/><rect x="36" y="46.0" width="6" height="9.9" fill="#a77b6d"/></svg><div style="position:absolute;left:11px;top:7.38px;font-size:22px;line-height:22px;color:#e6cec4;white-space:nowrap;-webkit-text-stroke:0.35px #e6cec4;">DI</div></div>
<div style="position:absolute;left:2806px;top:818px;width:784px;height:73.5px;box-sizing:border-box;border:2px solid #0c0c0c;border-radius:7px;background:#532a21;overflow:hidden;"><svg style="position:absolute;left:0;top:0" width="783" height="70"><rect x="0" y="45" width="534" height="4" fill="#9b7366"/><rect x="240" y="56" width="521" height="6" fill="#43211a"/><rect x="240" y="63" width="521" height="6" fill="#3e1d17"/></svg><div style="position:absolute;left:11px;top:7.38px;font-size:22px;line-height:22px;color:#e6cec4;white-space:nowrap;-webkit-text-stroke:0.35px #e6cec4;">DISTORTED BASS</div></div>
<div style="position:absolute;left:2738px;top:894px;width:309px;height:73.5px;box-sizing:border-box;border:2px solid #0c0c0c;border-radius:7px;background:#c9c946;overflow:hidden;"><svg style="position:absolute;left:0;top:0" width="308" height="70"><rect x="0" y="54" width="76" height="3" fill="#f3f3b0"/><rect x="76" y="51" width="76" height="3" fill="#f3f3b0"/><rect x="153" y="48.5" width="76" height="3" fill="#f3f3b0"/><rect x="230" y="54" width="38" height="3" fill="#f3f3b0"/></svg><div style="position:absolute;left:11px;top:7.38px;font-size:22px;line-height:22px;color:#fbfbe6;white-space:nowrap;-webkit-text-stroke:0.35px #fbfbe6;">SYNTHS</div></div>
<div style="position:absolute;left:2164px;top:970px;width:550px;height:73.5px;box-sizing:border-box;border:2px solid #0c0c0c;border-radius:7px;background:#9525c5;overflow:hidden;"><svg style="position:absolute;left:0;top:0" width="549" height="70"><rect x="0" y="53" width="549" height="2" fill="#e8baf6"/><rect x="0" y="52" width="4" height="4" fill="#e8baf6"/><rect x="30" y="52" width="2" height="4" fill="#e8baf6"/><rect x="42" y="47" width="6" height="14" fill="#e8baf6"/><rect x="54" y="52" width="2" height="4" fill="#e8baf6"/><rect x="71" y="51" width="3" height="6" fill="#e8baf6"/><rect x="83" y="51" width="2" height="6" fill="#e8baf6"/><rect x="90" y="52" width="2" height="4" fill="#e8baf6"/><rect x="97" y="51" width="2" height="6" fill="#e8baf6"/><rect x="109" y="47" width="2" height="14" fill="#e8baf6"/><rect x="125" y="51" width="4" height="6" fill="#e8baf6"/><rect x="130" y="51" width="3" height="6" fill="#e8baf6"/><rect x="146" y="50" width="2" height="8" fill="#e8baf6"/><rect x="201" y="51" width="2" height="6" fill="#e8baf6"/><rect x="217" y="52" width="4" height="4" fill="#e8baf6"/><rect x="233" y="51" width="3" height="6" fill="#e8baf6"/><rect x="245" y="52" width="6" height="4" fill="#e8baf6"/><rect x="250" y="52" width="2" height="4" fill="#e8baf6"/><rect x="257" y="52" width="4" height="4" fill="#e8baf6"/><rect x="262" y="51" width="3" height="6" fill="#e8baf6"/><rect x="278" y="52" width="2" height="4" fill="#e8baf6"/><rect x="290" y="47" width="2" height="14" fill="#e8baf6"/><rect x="299" y="47" width="3" height="14" fill="#e8baf6"/><rect x="306" y="49" width="6" height="10" fill="#e8baf6"/><rect x="315" y="52" width="2" height="4" fill="#e8baf6"/><rect x="336" y="51" width="2" height="6" fill="#e8baf6"/><rect x="361" y="49" width="2" height="10" fill="#e8baf6"/><rect x="377" y="47" width="3" height="14" fill="#e8baf6"/><rect x="389" y="50" width="2" height="8" fill="#e8baf6"/><rect x="431" y="52" width="4" height="4" fill="#e8baf6"/><rect x="438" y="49" width="3" height="10" fill="#e8baf6"/><rect x="445" y="51" width="6" height="6" fill="#e8baf6"/><rect x="461" y="51" width="2" height="6" fill="#e8baf6"/><rect x="466" y="51" width="3" height="6" fill="#e8baf6"/><rect x="482" y="50" width="2" height="8" fill="#e8baf6"/><rect x="494" y="47" width="4" height="14" fill="#e8baf6"/><rect x="501" y="50" width="3" height="8" fill="#e8baf6"/><rect x="519" y="51" width="2" height="6" fill="#e8baf6"/><rect x="263" y="38" width="3" height="30" fill="#2a0a35"/><rect x="307" y="38" width="3" height="30" fill="#2a0a35"/><path d="M19 5.5 H107 V31.5 H19 a12 12 0 0 1 -12 -12 V17.5 a12 12 0 0 1 12 -12Z" fill="#6c1a98"/><rect x="39" y="5.5" width="2" height="26" fill="#9525c5"/><rect x="69" y="5.5" width="2" height="26" fill="#9525c5"/><path d="M15 11 L31 18.5 L15 26Z" fill="#f6e8fb"/><text x="55.0" y="26" font-size="21" text-anchor="middle" fill="#f6e8fb" font-family="Liberation Sans">C</text><circle cx="89" cy="10.5" r="2.6" fill="#f6e8fb"/><circle cx="84" cy="15" r="2.6" fill="#f6e8fb"/><circle cx="94" cy="15" r="2.6" fill="#f6e8fb"/><circle cx="79.5" cy="20" r="2.6" fill="#f6e8fb"/><circle cx="99" cy="20" r="2.6" fill="#f6e8fb"/><circle cx="415.15625" cy="19" r="8.5" fill="none" stroke="#f6e8fb" stroke-width="2.2"/></svg><div style="position:absolute;left:116px;top:7.38px;font-size:22px;line-height:22px;color:#f6e8fb;white-space:nowrap;-webkit-text-stroke:0.35px #f6e8fb;">PITCHED VOCAL: Comp C</div></div>
<div style="position:absolute;left:2717px;top:970px;width:47px;height:73.5px;box-sizing:border-box;border:2px solid #0c0c0c;border-radius:7px;background:#9525c5;overflow:hidden;"><svg style="position:absolute;left:0;top:0" width="46" height="70"><rect x="0" y="53" width="46" height="2" fill="#e8baf6"/><rect x="0" y="51" width="2" height="6" fill="#e8baf6"/><rect x="16" y="52" width="2" height="4" fill="#e8baf6"/><rect x="42" y="52" width="6" height="4" fill="#e8baf6"/><rect x="36" y="38" width="2" height="30" fill="#2a0a35"/><path d="M19 5.5 H39 V31.5 H19 a12 12 0 0 1 -12 -12 V17.5 a12 12 0 0 1 12 -12Z" fill="#6c1a98"/><path d="M15 11 L31 18.5 L15 26Z" fill="#f6e8fb"/></svg></div>
<div style="position:absolute;left:3352px;top:970px;width:238px;height:73.5px;box-sizing:border-box;border:2px solid #0c0c0c;border-radius:7px;background:#9525c5;overflow:hidden;"><svg style="position:absolute;left:0;top:0" width="237" height="70"><rect x="0" y="53" width="237" height="2" fill="#e8baf6"/><rect x="16" y="52" width="6" height="4" fill="#e8baf6"/><rect x="32" y="47" width="4" height="14" fill="#e8baf6"/><rect x="46" y="51" width="6" height="6" fill="#e8baf6"/><rect x="118" y="52" width="3" height="4" fill="#e8baf6"/><rect x="153" y="51" width="6" height="6" fill="#e8baf6"/><rect x="165" y="52" width="2" height="4" fill="#e8baf6"/><rect x="195" y="52" width="3" height="4" fill="#e8baf6"/><rect x="200" y="51" width="3" height="6" fill="#e8baf6"/><rect x="219" y="47" width="3" height="14" fill="#e8baf6"/><rect x="1" y="38" width="2" height="30" fill="#2a0a35"/><path d="M19 5.5 H107 V31.5 H19 a12 12 0 0 1 -12 -12 V17.5 a12 12 0 0 1 12 -12Z" fill="#6c1a98"/><rect x="39" y="5.5" width="2" height="26" fill="#9525c5"/><rect x="69" y="5.5" width="2" height="26" fill="#9525c5"/><path d="M15 11 L31 18.5 L15 26Z" fill="#f6e8fb"/><text x="55.0" y="26" font-size="21" text-anchor="middle" fill="#f6e8fb" font-family="Liberation Sans">C</text><circle cx="89" cy="10.5" r="2.6" fill="#f6e8fb"/><circle cx="84" cy="15" r="2.6" fill="#f6e8fb"/><circle cx="94" cy="15" r="2.6" fill="#f6e8fb"/><circle cx="79.5" cy="20" r="2.6" fill="#f6e8fb"/><circle cx="99" cy="20" r="2.6" fill="#f6e8fb"/></svg><div style="position:absolute;left:116px;top:7.38px;font-size:22px;line-height:22px;color:#f6e8fb;white-space:nowrap;-webkit-text-stroke:0.35px #f6e8fb;">PITCHED</div></div>
<div style="position:absolute;left:2164px;top:1046px;width:673px;height:73.5px;box-sizing:border-box;border:2px solid #0c0c0c;border-radius:7px;background:#9525c5;overflow:hidden;"><svg style="position:absolute;left:0;top:0" width="672" height="70"><rect x="0" y="36" width="548" height="6" fill="#7a1e9c"/><rect x="552" y="36" width="46" height="6" fill="#7a1e9c"/><rect x="262" y="52" width="48" height="5.5" fill="#7a1e9c"/><rect x="518" y="52" width="76" height="5.5" fill="#7a1e9c"/><rect x="572" y="60" width="100" height="5.5" fill="#7a1e9c"/></svg><div style="position:absolute;left:11px;top:7.38px;font-size:22px;line-height:22px;color:#f6e8fb;white-space:nowrap;-webkit-text-stroke:0.35px #f6e8fb;">DOUBLE VOCAL</div></div>
<div style="position:absolute;left:2836px;top:1046px;width:221px;height:73.5px;box-sizing:border-box;border:2px solid #0c0c0c;border-radius:7px;background:#9525c5;overflow:hidden;"><svg style="position:absolute;left:0;top:0" width="220" height="70"><rect x="0" y="49" width="220" height="2" fill="#e8baf6"/><rect x="0" y="47" width="2" height="6" fill="#e8baf6"/><rect x="49" y="47" width="2" height="6" fill="#e8baf6"/><rect x="77" y="48" width="2" height="4" fill="#e8baf6"/><rect x="93" y="47" width="2" height="6" fill="#e8baf6"/><rect x="110" y="48" width="2" height="4" fill="#e8baf6"/><rect x="122" y="46" width="2" height="8" fill="#e8baf6"/><rect x="138" y="48" width="4" height="4" fill="#e8baf6"/><rect x="143" y="48" width="2" height="4" fill="#e8baf6"/><rect x="148" y="43" width="4" height="14" fill="#e8baf6"/><rect x="155" y="48" width="2" height="4" fill="#e8baf6"/><rect x="179" y="47" width="6" height="6" fill="#e8baf6"/><rect x="196" y="48" width="2" height="4" fill="#e8baf6"/></svg><div style="position:absolute;left:11px;top:7.38px;font-size:22px;line-height:22px;color:#f6e8fb;white-space:nowrap;-webkit-text-stroke:0.35px #f6e8fb;">PRE DOUBLE VOCA</div></div>
<div style="position:absolute;left:3352px;top:1046px;width:238px;height:73.5px;box-sizing:border-box;border:2px solid #0c0c0c;border-radius:7px;background:#9525c5;overflow:hidden;"><svg style="position:absolute;left:0;top:0" width="237" height="70"><rect x="0" y="51" width="237" height="2" fill="#e8baf6"/><rect x="12" y="50" width="6" height="4" fill="#e8baf6"/><rect x="22" y="49" width="2" height="6" fill="#e8baf6"/><rect x="54" y="47" width="2" height="10" fill="#e8baf6"/><rect x="87" y="49" width="3" height="6" fill="#e8baf6"/><rect x="92" y="50" width="3" height="4" fill="#e8baf6"/><rect x="122" y="47" width="2" height="10" fill="#e8baf6"/><rect x="138" y="48" width="6" height="8" fill="#e8baf6"/><rect x="178" y="48" width="2" height="8" fill="#e8baf6"/><rect x="187" y="49" width="2" height="6" fill="#e8baf6"/><rect x="226" y="49" width="6" height="6" fill="#e8baf6"/><path d="M19 5.5 H107 V31.5 H19 a12 12 0 0 1 -12 -12 V17.5 a12 12 0 0 1 12 -12Z" fill="#6c1a98"/><rect x="39" y="5.5" width="2" height="26" fill="#9525c5"/><rect x="69" y="5.5" width="2" height="26" fill="#9525c5"/><path d="M15 11 L31 18.5 L15 26Z" fill="#f6e8fb"/><text x="55.0" y="26" font-size="21" text-anchor="middle" fill="#f6e8fb" font-family="Liberation Sans">C</text><circle cx="89" cy="10.5" r="2.6" fill="#f6e8fb"/><circle cx="84" cy="15" r="2.6" fill="#f6e8fb"/><circle cx="94" cy="15" r="2.6" fill="#f6e8fb"/><circle cx="79.5" cy="20" r="2.6" fill="#f6e8fb"/><circle cx="99" cy="20" r="2.6" fill="#f6e8fb"/></svg><div style="position:absolute;left:116px;top:7.38px;font-size:22px;line-height:22px;color:#f6e8fb;white-space:nowrap;-webkit-text-stroke:0.35px #f6e8fb;">CHORUS</div></div>
<div style="position:absolute;left:2429px;top:1122px;width:42px;height:73.5px;box-sizing:border-box;border:2px solid #0c0c0c;border-radius:7px;background:#9525c5;overflow:hidden;"><svg style="position:absolute;left:0;top:0" width="41" height="70"><rect x="0" y="51" width="41" height="2" fill="#e8baf6"/><rect x="0" y="50" width="2" height="4" fill="#e8baf6"/></svg><div style="position:absolute;left:11px;top:7.38px;font-size:22px;line-height:22px;color:#f6e8fb;white-space:nowrap;-webkit-text-stroke:0.35px #f6e8fb;">BA</div></div>
<div style="position:absolute;left:2698px;top:1122px;width:17px;height:73.5px;box-sizing:border-box;border:2px solid #0c0c0c;border-radius:7px;background:#9525c5;overflow:hidden;"><svg style="position:absolute;left:0;top:0" width="16" height="70"><rect x="0" y="51" width="16" height="2" fill="#e8baf6"/></svg></div>
<div style="position:absolute;left:2716px;top:1122px;width:341px;height:73.5px;box-sizing:border-box;border:2px solid #0c0c0c;border-radius:7px;background:#9525c5;overflow:hidden;"><svg style="position:absolute;left:0;top:0" width="340" height="70"><rect x="0" y="37" width="38" height="5" fill="#7a1e9c"/><rect x="20" y="45" width="320" height="5" fill="#7a1e9c"/><rect x="20" y="53" width="320" height="5" fill="#7a1e9c"/><rect x="20" y="61" width="320" height="5" fill="#7a1e9c"/></svg><div style="position:absolute;left:11px;top:7.38px;font-size:22px;line-height:22px;color:#f6e8fb;white-space:nowrap;-webkit-text-stroke:0.35px #f6e8fb;">BACKING VOCALS</div></div>
<div style="position:absolute;left:3270px;top:1122px;width:83px;height:73.5px;box-sizing:border-box;border:2px solid #0c0c0c;border-radius:7px;background:#9525c5;overflow:hidden;"><svg style="position:absolute;left:0;top:0" width="82" height="70"><rect x="0" y="52" width="82" height="2" fill="#e8baf6"/><rect x="7" y="46" width="6" height="14" fill="#e8baf6"/><rect x="49" y="49" width="2" height="8" fill="#e8baf6"/><rect x="61" y="51" width="2" height="4" fill="#e8baf6"/><path d="M19 5.5 H69 V31.5 H19 a12 12 0 0 1 -12 -12 V17.5 a12 12 0 0 1 12 -12Z" fill="#6c1a98"/><rect x="39" y="5.5" width="2" height="26" fill="#9525c5"/><path d="M15 11 L31 18.5 L15 26Z" fill="#f6e8fb"/><text x="55.0" y="26" font-size="21" text-anchor="middle" fill="#f6e8fb" font-family="Liberation Sans">C</text></svg></div>
<div style="position:absolute;left:2202px;top:1198px;width:227px;height:73.5px;box-sizing:border-box;border:2px solid #0c0c0c;border-radius:7px;background:#b92ea9;overflow:hidden;"><svg style="position:absolute;left:0;top:0" width="226" height="70"><rect x="0" y="51" width="226" height="2" fill="#f1c3ea"/><rect x="0" y="49" width="3" height="6" fill="#f1c3ea"/><rect x="9" y="50" width="4" height="4" fill="#f1c3ea"/><rect x="18" y="47" width="4" height="10" fill="#f1c3ea"/><rect x="59" y="47" width="2" height="10" fill="#f1c3ea"/><rect x="84" y="48" width="6" height="8" fill="#f1c3ea"/><rect x="116" y="47" width="2" height="10" fill="#f1c3ea"/><rect x="123" y="48" width="4" height="8" fill="#f1c3ea"/><rect x="138" y="50" width="4" height="4" fill="#f1c3ea"/><rect x="159" y="48" width="6" height="8" fill="#f1c3ea"/><rect x="168" y="45" width="3" height="14" fill="#f1c3ea"/><rect x="187" y="47" width="4" height="10" fill="#f1c3ea"/><rect x="213" y="48" width="2" height="8" fill="#f1c3ea"/><circle cx="178.15625" cy="19" r="8.5" fill="none" stroke="#fae6f5" stroke-width="2.2"/></svg><div style="position:absolute;left:11px;top:7.38px;font-size:22px;line-height:22px;color:#fae6f5;white-space:nowrap;-webkit-text-stroke:0.35px #fae6f5;">LEAD VOCAL</div></div>
<div style="position:absolute;left:2471px;top:1198px;width:228px;height:73.5px;box-sizing:border-box;border:2px solid #0c0c0c;border-radius:7px;background:#b92ea9;overflow:hidden;"><svg style="position:absolute;left:0;top:0" width="227" height="70"><rect x="0" y="51" width="227" height="2" fill="#f1c3ea"/><rect x="7" y="49" width="4" height="6" fill="#f1c3ea"/><rect x="25" y="50" width="2" height="4" fill="#f1c3ea"/><rect x="42" y="50" width="3" height="4" fill="#f1c3ea"/><rect x="90" y="47" width="3" height="10" fill="#f1c3ea"/><rect x="99" y="50" width="3" height="4" fill="#f1c3ea"/><rect x="124" y="50" width="6" height="4" fill="#f1c3ea"/><rect x="145" y="50" width="2" height="4" fill="#f1c3ea"/><rect x="154" y="45" width="3" height="14" fill="#f1c3ea"/><rect x="161" y="50" width="3" height="4" fill="#f1c3ea"/><rect x="168" y="47" width="3" height="10" fill="#f1c3ea"/><rect x="180" y="48" width="6" height="8" fill="#f1c3ea"/><rect x="196" y="50" width="4" height="4" fill="#f1c3ea"/><rect x="217" y="50" width="4" height="4" fill="#f1c3ea"/><circle cx="178.15625" cy="19" r="8.5" fill="none" stroke="#fae6f5" stroke-width="2.2"/></svg><div style="position:absolute;left:11px;top:7.38px;font-size:22px;line-height:22px;color:#fae6f5;white-space:nowrap;-webkit-text-stroke:0.35px #fae6f5;">LEAD VOCAL</div></div>
<div style="position:absolute;left:2736px;top:1198px;width:321px;height:73.5px;box-sizing:border-box;border:2px solid #0c0c0c;border-radius:7px;background:#b92ea9;overflow:hidden;"><svg style="position:absolute;left:0;top:0" width="320" height="70"><rect x="0" y="51" width="320" height="2" fill="#f1c3ea"/><rect x="0" y="49" width="3" height="6" fill="#f1c3ea"/><rect x="38" y="49" width="6" height="6" fill="#f1c3ea"/><rect x="43" y="50" width="3" height="4" fill="#f1c3ea"/><rect x="50" y="50" width="2" height="4" fill="#f1c3ea"/><rect x="89" y="48" width="4" height="8" fill="#f1c3ea"/><rect x="96" y="50" width="2" height="4" fill="#f1c3ea"/><rect x="110" y="50" width="6" height="4" fill="#f1c3ea"/><rect x="132" y="48" width="2" height="8" fill="#f1c3ea"/><rect x="141" y="49" width="6" height="6" fill="#f1c3ea"/><rect x="157" y="49" width="6" height="6" fill="#f1c3ea"/><rect x="181" y="50" width="3" height="4" fill="#f1c3ea"/><rect x="188" y="48" width="6" height="8" fill="#f1c3ea"/><rect x="195" y="50" width="4" height="4" fill="#f1c3ea"/><rect x="209" y="50" width="4" height="4" fill="#f1c3ea"/><rect x="216" y="47" width="2" height="10" fill="#f1c3ea"/><rect x="253" y="45" width="2" height="14" fill="#f1c3ea"/><rect x="260" y="50" width="6" height="4" fill="#f1c3ea"/><rect x="272" y="50" width="6" height="4" fill="#f1c3ea"/><rect x="300" y="50" width="2" height="4" fill="#f1c3ea"/><rect x="312" y="48" width="3" height="8" fill="#f1c3ea"/><circle cx="178.15625" cy="19" r="8.5" fill="none" stroke="#fae6f5" stroke-width="2.2"/></svg><div style="position:absolute;left:11px;top:7.38px;font-size:22px;line-height:22px;color:#fae6f5;white-space:nowrap;-webkit-text-stroke:0.35px #fae6f5;">LEAD VOCAL</div></div>
<div style="position:absolute;left:3352px;top:1198px;width:238px;height:73.5px;box-sizing:border-box;border:2px solid #0c0c0c;border-radius:7px;background:#b92ea9;overflow:hidden;"><svg style="position:absolute;left:0;top:0" width="237" height="70"><rect x="0" y="53" width="237" height="2" fill="#f1c3ea"/><rect x="0" y="49" width="6" height="10" fill="#f1c3ea"/><rect x="5" y="51" width="2" height="6" fill="#f1c3ea"/><rect x="12" y="49" width="4" height="10" fill="#f1c3ea"/><rect x="24" y="52" width="2" height="4" fill="#f1c3ea"/><rect x="31" y="52" width="6" height="4" fill="#f1c3ea"/><rect x="40" y="51" width="2" height="6" fill="#f1c3ea"/><rect x="82" y="51" width="3" height="6" fill="#f1c3ea"/><rect x="99" y="47" width="2" height="14" fill="#f1c3ea"/><rect x="106" y="51" width="2" height="6" fill="#f1c3ea"/><rect x="141" y="51" width="2" height="6" fill="#f1c3ea"/><rect x="176" y="52" width="3" height="4" fill="#f1c3ea"/><rect x="181" y="52" width="2" height="4" fill="#f1c3ea"/><rect x="197" y="52" width="3" height="4" fill="#f1c3ea"/><rect x="213" y="49" width="4" height="10" fill="#f1c3ea"/><rect x="232" y="50" width="2" height="8" fill="#f1c3ea"/><path d="M19 5.5 H107 V31.5 H19 a12 12 0 0 1 -12 -12 V17.5 a12 12 0 0 1 12 -12Z" fill="#8a1d80"/><rect x="39" y="5.5" width="2" height="26" fill="#b92ea9"/><rect x="69" y="5.5" width="2" height="26" fill="#b92ea9"/><path d="M15 11 L31 18.5 L15 26Z" fill="#f6e8fb"/><text x="55.0" y="26" font-size="21" text-anchor="middle" fill="#f6e8fb" font-family="Liberation Sans">C</text><circle cx="89" cy="10.5" r="2.6" fill="#f6e8fb"/><circle cx="84" cy="15" r="2.6" fill="#f6e8fb"/><circle cx="94" cy="15" r="2.6" fill="#f6e8fb"/><circle cx="79.5" cy="20" r="2.6" fill="#f6e8fb"/><circle cx="99" cy="20" r="2.6" fill="#f6e8fb"/></svg><div style="position:absolute;left:116px;top:7.38px;font-size:22px;line-height:22px;color:#fae6f5;white-space:nowrap;-webkit-text-stroke:0.35px #fae6f5;">LEAD VOC</div></div>
<svg style="position:absolute;left:130px;top:275px;" width="22" height="30" viewBox="0 0 22 30"><path d="M6 4 L16 14 L6 24" fill="none" stroke="#cfcfcf" stroke-width="2.6" stroke-linecap="round" stroke-linejoin="round"/></svg>
<div style="position:absolute;left:175px;top:275.49px;font-size:26px;line-height:26px;color:#b5b5b5;font-weight:normal;white-space:nowrap;-webkit-text-stroke:0.5px #b5b5b5;">Region:</div>
<div style="position:absolute;left:274px;top:275.49px;font-size:26px;line-height:26px;color:#f5f5f5;font-weight:normal;white-space:nowrap;letter-spacing:0.2px;-webkit-text-stroke:0.7px #f5f5f5;">MIDI Defaults</div>
<svg style="position:absolute;left:130px;top:351px;" width="22" height="30" viewBox="0 0 22 30"><path d="M6 4 L16 14 L6 24" fill="none" stroke="#cfcfcf" stroke-width="2.6" stroke-linecap="round" stroke-linejoin="round"/></svg>
<div style="position:absolute;left:175px;top:351.49px;font-size:26px;line-height:26px;color:#b5b5b5;font-weight:normal;white-space:nowrap;-webkit-text-stroke:0.5px #b5b5b5;">Track:</div>
<div style="position:absolute;left:264px;top:351.49px;font-size:26px;line-height:26px;color:#f5f5f5;font-weight:normal;white-space:nowrap;letter-spacing:-0.5px;-webkit-text-stroke:0.7px #f5f5f5;">LEAD VOCAL</div>
<div style="position:absolute;left:158px;top:1490px;width:134px;height:36px;background:#4b4b4b;border-radius:2px;"></div>
<div style="position:absolute;left:-75px;width:600px;text-align:center;top:1497.38px;font-size:22px;line-height:22px;color:#121212;font-weight:normal;white-space:nowrap;">Group</div>
<div class="btn" style="left:158px;top:1538px;width:134px;height:32px;border-radius:8px;background:#676767;"></div>
<div style="position:absolute;left:-75px;width:600px;text-align:center;top:1543.88px;font-size:22px;line-height:22px;color:#7fe07f;font-weight:normal;white-space:nowrap;">Read</div>
<div style="position:absolute;left:158px;top:1596px;width:134px;height:36px;background:#363636;border-radius:2px;"></div>
<div style="position:absolute;left:-75px;width:600px;text-align:center;top:1604.38px;font-size:22px;line-height:22px;color:#f0f0f0;font-weight:normal;white-space:nowrap;">0.0</div>
<div style="position:absolute;left:220.25px;top:1675.5px;width:3.5px;height:274px;background:#303030;border-radius:1px;"></div>
<svg style="position:absolute;left:195.5px;top:1675px;" width="24" height="280" viewBox="0 0 24 280"><rect x="0" y="2.75" width="22" height="1.6" fill="#8a8a8a"/><rect x="14" y="13.25" width="8" height="1.6" fill="#8a8a8a"/><rect x="14" y="25.25" width="8" height="1.6" fill="#8a8a8a"/><rect x="0" y="37.25" width="22" height="1.6" fill="#8a8a8a"/><rect x="0" y="105.25" width="22" height="1.6" fill="#8a8a8a"/><rect x="14" y="117.25" width="8" height="1.6" fill="#8a8a8a"/><rect x="14" y="128.75" width="8" height="1.6" fill="#8a8a8a"/><rect x="0" y="140.75" width="22" height="1.6" fill="#8a8a8a"/><rect x="14" y="144.75" width="8" height="1.6" fill="#8a8a8a"/><rect x="14" y="148.25" width="8" height="1.6" fill="#8a8a8a"/><rect x="14" y="152.25" width="8" height="1.6" fill="#8a8a8a"/><rect x="14" y="156.25" width="8" height="1.6" fill="#8a8a8a"/><rect x="0" y="163.25" width="22" height="1.6" fill="#8a8a8a"/><rect x="14" y="167.25" width="8" height="1.6" fill="#8a8a8a"/><rect x="14" y="170.75" width="8" height="1.6" fill="#8a8a8a"/><rect x="14" y="174.75" width="8" height="1.6" fill="#8a8a8a"/><rect x="14" y="178.75" width="8" height="1.6" fill="#8a8a8a"/><rect x="14" y="182.25" width="8" height="1.6" fill="#8a8a8a"/><rect x="14" y="186.25" width="8" height="1.6" fill="#8a8a8a"/><rect x="0" y="190.75" width="22" height="1.6" fill="#8a8a8a"/><rect x="14" y="194.75" width="8" height="1.6" fill="#8a8a8a"/><rect x="14" y="198.25" width="8" height="1.6" fill="#8a8a8a"/><rect x="14" y="202.25" width="8" height="1.6" fill="#8a8a8a"/><rect x="14" y="206.25" width="8" height="1.6" fill="#8a8a8a"/><rect x="14" y="210.25" width="8" height="1.6" fill="#8a8a8a"/><rect x="0" y="212.75" width="22" height="1.6" fill="#8a8a8a"/><rect x="14" y="216.75" width="8" height="1.6" fill="#8a8a8a"/><rect x="14" y="220.75" width="8" height="1.6" fill="#8a8a8a"/><rect x="14" y="224.75" width="8" height="1.6" fill="#8a8a8a"/><rect x="14" y="228.75" width="8" height="1.6" fill="#8a8a8a"/><rect x="14" y="232.75" width="8" height="1.6" fill="#8a8a8a"/><rect x="0" y="236.75" width="22" height="1.6" fill="#8a8a8a"/><rect x="14" y="240.75" width="8" height="1.6" fill="#8a8a8a"/><rect x="14" y="244.75" width="8" height="1.6" fill="#8a8a8a"/><rect x="0" y="248.75" width="22" height="1.6" fill="#8a8a8a"/><rect x="14" y="252.75" width="8" height="1.6" fill="#8a8a8a"/><rect x="14" y="256.75" width="8" height="1.6" fill="#8a8a8a"/><rect x="14" y="260.75" width="8" height="1.6" fill="#8a8a8a"/><rect x="14" y="264.75" width="8" height="1.6" fill="#8a8a8a"/><rect x="0" y="270.75" width="22" height="1.6" fill="#8a8a8a"/></svg>
<svg style="position:absolute;left:205px;top:1712px;filter:drop-shadow(0 2px 2px rgba(0,0,0,.4));" width="34" height="70" viewBox="0 0 34 70"><defs><linearGradient id="cg1" x1="0" y1="0" x2="0" y2="1"><stop offset="0" stop-color="#a6a6a6"/><stop offset="1" stop-color="#c6c6c6"/></linearGradient><linearGradient id="cg2" x1="0" y1="0" x2="0" y2="1"><stop offset="0" stop-color="#7f7f7f"/><stop offset="1" stop-color="#a2a2a2"/></linearGradient><linearGradient id="cg3" x1="0" y1="0" x2="0" y2="1"><stop offset="0" stop-color="#a9a9a9"/><stop offset="1" stop-color="#cdcdcd"/></linearGradient><linearGradient id="cg4" x1="0" y1="0" x2="0" y2="1"><stop offset="0" stop-color="#9c9c9c"/><stop offset="1" stop-color="#878787"/></linearGradient></defs><rect x="0" y="0" width="34" height="70" rx="2.5" fill="#8e8e8e"/><path d="M2.5 0 H31.5 a2.5 2.5 0 0 1 2.5 2.5 V10 H0 V2.5 a2.5 2.5 0 0 1 2.5 -2.5Z" fill="url(#cg1)"/><rect x="0" y="9.6" width="34" height="1" fill="#d8d8d8"/><rect x="0" y="10.6" width="34" height="24" fill="url(#cg2)"/><rect x="0" y="15.2" width="34" height="1" fill="#6f6f6f"/><rect x="0" y="20.3" width="34" height="1" fill="#6f6f6f"/><rect x="0" y="25.3" width="34" height="1" fill="#6f6f6f"/><rect x="0" y="30.4" width="34" height="1" fill="#6f6f6f"/><rect x="0" y="34.4" width="34" height="2.2" fill="#2a2a2a"/><rect x="0" y="36.6" width="34" height="22.6" fill="url(#cg3)"/><rect x="0" y="41" width="34" height="1" fill="#8f8f8f"/><rect x="0" y="46" width="34" height="1" fill="#8f8f8f"/><rect x="0" y="51" width="34" height="1" fill="#8f8f8f"/><rect x="0" y="56" width="34" height="1" fill="#8f8f8f"/><rect x="0" y="59" width="34" height="1.2" fill="#dadada"/><path d="M0 60.2 H34 V67.5 a2.5 2.5 0 0 1 -2.5 2.5 H2.5 a2.5 2.5 0 0 1 -2.5 -2.5Z" fill="url(#cg4)"/></svg>
<div style="position:absolute;left:195.5px;top:1746.5px;width:8px;height:2px;background:#f0f0f0;"></div>
<div class="btn" style="left:158px;top:2000px;width:62px;height:32px;border-radius:8px;background:#676767;"></div>
<div style="position:absolute;left:-111px;width:600px;text-align:center;top:2004.68px;font-size:24px;line-height:24px;color:#f0f0f0;font-weight:normal;white-space:nowrap;-webkit-text-stroke:0.5px #f0f0f0;">M</div>
<div class="btn" style="left:230px;top:2000px;width:62px;height:32px;border-radius:8px;background:#676767;"></div>
<div style="position:absolute;left:-39px;width:600px;text-align:center;top:2004.68px;font-size:24px;line-height:24px;color:#f0f0f0;font-weight:normal;white-space:nowrap;-webkit-text-stroke:0.5px #f0f0f0;">S</div>
<div style="position:absolute;left:-74px;width:600px;text-align:center;top:2065.03px;font-size:23px;line-height:23px;color:#e6e6e6;font-weight:normal;white-space:nowrap;letter-spacing:-0.3px;-webkit-text-stroke:0.3px #e6e6e6;">LEAD VOCAL</div>
<div style="position:absolute;left:388px;top:1490px;width:134px;height:36px;background:#4b4b4b;border-radius:2px;"></div>
<div style="position:absolute;left:155px;width:600px;text-align:center;top:1497.38px;font-size:22px;line-height:22px;color:#121212;font-weight:normal;white-space:nowrap;">Group</div>
<div class="btn" style="left:388px;top:1538px;width:134px;height:32px;border-radius:8px;background:#676767;"></div>
<div style="position:absolute;left:155px;width:600px;text-align:center;top:1543.88px;font-size:22px;line-height:22px;color:#f2f2f2;font-weight:normal;white-space:nowrap;">Read</div>
<div style="position:absolute;left:388px;top:1596px;width:134px;height:36px;background:#363636;border-radius:2px;"></div>
<div style="position:absolute;left:155px;width:600px;text-align:center;top:1604.38px;font-size:22px;line-height:22px;color:#f0f0f0;font-weight:normal;white-space:nowrap;">0.0</div>
<div style="position:absolute;left:450.25px;top:1675.5px;width:3.5px;height:274px;background:#303030;border-radius:1px;"></div>
<svg style="position:absolute;left:425.5px;top:1675px;" width="24" height="280" viewBox="0 0 24 280"><rect x="0" y="2.75" width="22" height="1.6" fill="#8a8a8a"/><rect x="14" y="13.25" width="8" height="1.6" fill="#8a8a8a"/><rect x="14" y="25.25" width="8" height="1.6" fill="#8a8a8a"/><rect x="0" y="37.25" width="22" height="1.6" fill="#8a8a8a"/><rect x="0" y="105.25" width="22" height="1.6" fill="#8a8a8a"/><rect x="14" y="117.25" width="8" height="1.6" fill="#8a8a8a"/><rect x="14" y="128.75" width="8" height="1.6" fill="#8a8a8a"/><rect x="0" y="140.75" width="22" height="1.6" fill="#8a8a8a"/><rect x="14" y="144.75" width="8" height="1.6" fill="#8a8a8a"/><rect x="14" y="148.25" width="8" height="1.6" fill="#8a8a8a"/><rect x="14" y="152.25" width="8" height="1.6" fill="#8a8a8a"/><rect x="14" y="156.25" width="8" height="1.6" fill="#8a8a8a"/><rect x="0" y="163.25" width="22" height="1.6" fill="#8a8a8a"/><rect x="14" y="167.25" width="8" height="1.6" fill="#8a8a8a"/><rect x="14" y="170.75" width="8" height="1.6" fill="#8a8a8a"/><rect x="14" y="174.75" width="8" height="1.6" fill="#8a8a8a"/><rect x="14" y="178.75" width="8" height="1.6" fill="#8a8a8a"/><rect x="14" y="182.25" width="8" height="1.6" fill="#8a8a8a"/><rect x="14" y="186.25" width="8" height="1.6" fill="#8a8a8a"/><rect x="0" y="190.75" width="22" height="1.6" fill="#8a8a8a"/><rect x="14" y="194.75" width="8" height="1.6" fill="#8a8a8a"/><rect x="14" y="198.25" width="8" height="1.6" fill="#8a8a8a"/><rect x="14" y="202.25" width="8" height="1.6" fill="#8a8a8a"/><rect x="14" y="206.25" width="8" height="1.6" fill="#8a8a8a"/><rect x="14" y="210.25" width="8" height="1.6" fill="#8a8a8a"/><rect x="0" y="212.75" width="22" height="1.6" fill="#8a8a8a"/><rect x="14" y="216.75" width="8" height="1.6" fill="#8a8a8a"/><rect x="14" y="220.75" width="8" height="1.6" fill="#8a8a8a"/><rect x="14" y="224.75" width="8" height="1.6" fill="#8a8a8a"/><rect x="14" y="228.75" width="8" height="1.6" fill="#8a8a8a"/><rect x="14" y="232.75" width="8" height="1.6" fill="#8a8a8a"/><rect x="0" y="236.75" width="22" height="1.6" fill="#8a8a8a"/><rect x="14" y="240.75" width="8" height="1.6" fill="#8a8a8a"/><rect x="14" y="244.75" width="8" height="1.6" fill="#8a8a8a"/><rect x="0" y="248.75" width="22" height="1.6" fill="#8a8a8a"/><rect x="14" y="252.75" width="8" height="1.6" fill="#8a8a8a"/><rect x="14" y="256.75" width="8" height="1.6" fill="#8a8a8a"/><rect x="14" y="260.75" width="8" height="1.6" fill="#8a8a8a"/><rect x="14" y="264.75" width="8" height="1.6" fill="#8a8a8a"/><rect x="0" y="270.75" width="22" height="1.6" fill="#8a8a8a"/></svg>
<svg style="position:absolute;left:435px;top:1712px;filter:drop-shadow(0 2px 2px rgba(0,0,0,.4));" width="34" height="70" viewBox="0 0 34 70"><defs><linearGradient id="cg1" x1="0" y1="0" x2="0" y2="1"><stop offset="0" stop-color="#a6a6a6"/><stop offset="1" stop-color="#c6c6c6"/></linearGradient><linearGradient id="cg2" x1="0" y1="0" x2="0" y2="1"><stop offset="0" stop-color="#7f7f7f"/><stop offset="1" stop-color="#a2a2a2"/></linearGradient><linearGradient id="cg3" x1="0" y1="0" x2="0" y2="1"><stop offset="0" stop-color="#a9a9a9"/><stop offset="1" stop-color="#cdcdcd"/></linearGradient><linearGradient id="cg4" x1="0" y1="0" x2="0" y2="1"><stop offset="0" stop-color="#9c9c9c"/><stop offset="1" stop-color="#878787"/></linearGradient></defs><rect x="0" y="0" width="34" height="70" rx="2.5" fill="#8e8e8e"/><path d="M2.5 0 H31.5 a2.5 2.5 0 0 1 2.5 2.5 V10 H0 V2.5 a2.5 2.5 0 0 1 2.5 -2.5Z" fill="url(#cg1)"/><rect x="0" y="9.6" width="34" height="1" fill="#d8d8d8"/><rect x="0" y="10.6" width="34" height="24" fill="url(#cg2)"/><rect x="0" y="15.2" width="34" height="1" fill="#6f6f6f"/><rect x="0" y="20.3" width="34" height="1" fill="#6f6f6f"/><rect x="0" y="25.3" width="34" height="1" fill="#6f6f6f"/><rect x="0" y="30.4" width="34" height="1" fill="#6f6f6f"/><rect x="0" y="34.4" width="34" height="2.2" fill="#2a2a2a"/><rect x="0" y="36.6" width="34" height="22.6" fill="url(#cg3)"/><rect x="0" y="41" width="34" height="1" fill="#8f8f8f"/><rect x="0" y="46" width="34" height="1" fill="#8f8f8f"/><rect x="0" y="51" width="34" height="1" fill="#8f8f8f"/><rect x="0" y="56" width="34" height="1" fill="#8f8f8f"/><rect x="0" y="59" width="34" height="1.2" fill="#dadada"/><path d="M0 60.2 H34 V67.5 a2.5 2.5 0 0 1 -2.5 2.5 H2.5 a2.5 2.5 0 0 1 -2.5 -2.5Z" fill="url(#cg4)"/></svg>
<div style="position:absolute;left:425.5px;top:1746.5px;width:8px;height:2px;background:#f0f0f0;"></div>
<div class="btn" style="left:388px;top:2000px;width:62px;height:32px;border-radius:8px;background:#676767;"></div>
<div style="position:absolute;left:119px;width:600px;text-align:center;top:2004.68px;font-size:24px;line-height:24px;color:#f0f0f0;font-weight:normal;white-space:nowrap;-webkit-text-stroke:0.5px #f0f0f0;">M</div>
<div class="btn" style="left:460px;top:2000px;width:62px;height:32px;border-radius:8px;background:#676767;"></div>
<div style="position:absolute;left:191px;width:600px;text-align:center;top:2004.68px;font-size:24px;line-height:24px;color:#f0f0f0;font-weight:normal;white-space:nowrap;-webkit-text-stroke:0.5px #f0f0f0;">D</div>
<div style="position:absolute;left:156px;width:600px;text-align:center;top:2065.03px;font-size:23px;line-height:23px;color:#e6e6e6;font-weight:normal;white-space:nowrap;letter-spacing:-0.3px;-webkit-text-stroke:0.3px #e6e6e6;">Master</div>
<div style="position:absolute;left:112px;top:76px;width:3456px;height:2028px;box-sizing:border-box;border:2px solid rgba(255,255,255,0.17);border-radius:20px;clip-path:inset(174px 0 0 0);"></div>
</div></body></html>
